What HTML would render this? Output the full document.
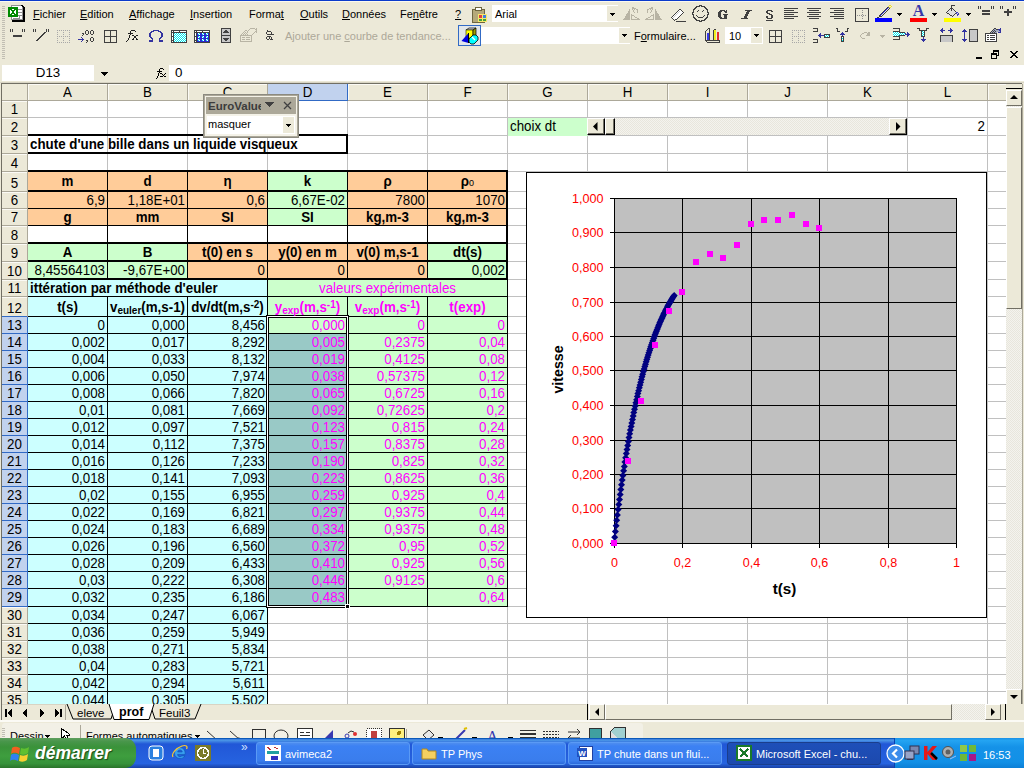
<!DOCTYPE html>
<html><head><meta charset="utf-8"><style>
html,body{margin:0;padding:0;}
body{width:1024px;height:768px;overflow:hidden;position:relative;background:#ECE9D8;font-family:"Liberation Sans",sans-serif;font-size:13.33px;color:#000;}
div{box-sizing:content-box;}
</style></head><body>
<div style="position:absolute;left:0px;top:0px;width:1024px;height:1px;background:#0A3ACB;"></div>
<div style="position:absolute;left:0px;top:1px;width:1024px;height:1px;background:#FBF9EF;"></div>
<div style="position:absolute;left:2px;top:6px;width:3px;height:1px;background:#C1BEB3;"></div><div style="position:absolute;left:2px;top:8px;width:3px;height:1px;background:#C1BEB3;"></div><div style="position:absolute;left:2px;top:10px;width:3px;height:1px;background:#C1BEB3;"></div><div style="position:absolute;left:2px;top:12px;width:3px;height:1px;background:#C1BEB3;"></div><div style="position:absolute;left:2px;top:14px;width:3px;height:1px;background:#C1BEB3;"></div><div style="position:absolute;left:2px;top:16px;width:3px;height:1px;background:#C1BEB3;"></div><div style="position:absolute;left:2px;top:18px;width:3px;height:1px;background:#C1BEB3;"></div><div style="position:absolute;left:2px;top:20px;width:3px;height:1px;background:#C1BEB3;"></div><div style="position:absolute;left:2px;top:22px;width:3px;height:1px;background:#C1BEB3;"></div><div style="position:absolute;left:2px;top:24px;width:3px;height:1px;background:#C1BEB3;"></div><div style="position:absolute;left:2px;top:26px;width:3px;height:1px;background:#C1BEB3;"></div><div style="position:absolute;left:2px;top:28px;width:3px;height:1px;background:#C1BEB3;"></div><div style="position:absolute;left:2px;top:30px;width:3px;height:1px;background:#C1BEB3;"></div><div style="position:absolute;left:2px;top:32px;width:3px;height:1px;background:#C1BEB3;"></div><div style="position:absolute;left:2px;top:34px;width:3px;height:1px;background:#C1BEB3;"></div><div style="position:absolute;left:2px;top:36px;width:3px;height:1px;background:#C1BEB3;"></div><div style="position:absolute;left:2px;top:38px;width:3px;height:1px;background:#C1BEB3;"></div><div style="position:absolute;left:2px;top:40px;width:3px;height:1px;background:#C1BEB3;"></div><div style="position:absolute;left:2px;top:42px;width:3px;height:1px;background:#C1BEB3;"></div><div style="position:absolute;left:2px;top:44px;width:3px;height:1px;background:#C1BEB3;"></div><div style="position:absolute;left:2px;top:46px;width:3px;height:1px;background:#C1BEB3;"></div><div style="position:absolute;left:2px;top:48px;width:3px;height:1px;background:#C1BEB3;"></div><div style="position:absolute;left:2px;top:50px;width:3px;height:1px;background:#C1BEB3;"></div><div style="position:absolute;left:2px;top:52px;width:3px;height:1px;background:#C1BEB3;"></div><div style="position:absolute;left:2px;top:54px;width:3px;height:1px;background:#C1BEB3;"></div><div style="position:absolute;left:2px;top:56px;width:3px;height:1px;background:#C1BEB3;"></div><div style="position:absolute;left:2px;top:58px;width:3px;height:1px;background:#C1BEB3;"></div>
<svg style="position:absolute;left:8px;top:5px" width="18" height="17" viewBox="0 0 18 17" shape-rendering="crispEdges"><rect x="3" y="0" width="10" height="1" fill="#909090"/><rect x="13" y="0" width="2" height="1" fill="#000"/><rect x="3" y="1" width="1" height="1" fill="#909090"/><rect x="4" y="1" width="10" height="1" fill="#fff"/><rect x="14" y="1" width="2" height="1" fill="#000"/><rect x="0" y="2" width="10" height="1" fill="#008A00"/><rect x="10" y="2" width="4" height="1" fill="#fff"/><rect x="14" y="2" width="1" height="1" fill="#909090"/><rect x="15" y="2" width="2" height="1" fill="#000"/><rect x="0" y="3" width="10" height="1" fill="#008A00"/><rect x="10" y="3" width="4" height="1" fill="#fff"/><rect x="14" y="3" width="1" height="1" fill="#909090"/><rect x="15" y="3" width="2" height="1" fill="#000"/><rect x="0" y="4" width="4" height="1" fill="#008A00"/><rect x="4" y="4" width="2" height="1" fill="#fff"/><rect x="6" y="4" width="4" height="1" fill="#008A00"/><rect x="10" y="4" width="5" height="1" fill="#909090"/><rect x="15" y="4" width="2" height="1" fill="#000"/><rect x="0" y="5" width="2" height="1" fill="#008A00"/><rect x="2" y="5" width="1" height="1" fill="#fff"/><rect x="3" y="5" width="4" height="1" fill="#008A00"/><rect x="7" y="5" width="1" height="1" fill="#fff"/><rect x="8" y="5" width="2" height="1" fill="#008A00"/><rect x="10" y="5" width="4" height="1" fill="#fff"/><rect x="14" y="5" width="1" height="1" fill="#909090"/><rect x="15" y="5" width="2" height="1" fill="#000"/><rect x="0" y="6" width="2" height="1" fill="#008A00"/><rect x="2" y="6" width="2" height="1" fill="#fff"/><rect x="4" y="6" width="2" height="1" fill="#008A00"/><rect x="6" y="6" width="2" height="1" fill="#fff"/><rect x="8" y="6" width="2" height="1" fill="#008A00"/><rect x="10" y="6" width="4" height="1" fill="#fff"/><rect x="14" y="6" width="1" height="1" fill="#909090"/><rect x="15" y="6" width="2" height="1" fill="#000"/><rect x="0" y="7" width="2" height="1" fill="#008A00"/><rect x="2" y="7" width="2" height="1" fill="#fff"/><rect x="4" y="7" width="2" height="1" fill="#008A00"/><rect x="6" y="7" width="2" height="1" fill="#fff"/><rect x="8" y="7" width="2" height="1" fill="#008A00"/><rect x="10" y="7" width="5" height="1" fill="#909090"/><rect x="15" y="7" width="2" height="1" fill="#000"/><rect x="0" y="8" width="2" height="1" fill="#008A00"/><rect x="2" y="8" width="1" height="1" fill="#fff"/><rect x="3" y="8" width="4" height="1" fill="#008A00"/><rect x="7" y="8" width="1" height="1" fill="#fff"/><rect x="8" y="8" width="2" height="1" fill="#008A00"/><rect x="10" y="8" width="4" height="1" fill="#fff"/><rect x="14" y="8" width="1" height="1" fill="#909090"/><rect x="15" y="8" width="2" height="1" fill="#000"/><rect x="0" y="9" width="4" height="1" fill="#008A00"/><rect x="4" y="9" width="2" height="1" fill="#fff"/><rect x="6" y="9" width="4" height="1" fill="#008A00"/><rect x="10" y="9" width="4" height="1" fill="#fff"/><rect x="14" y="9" width="1" height="1" fill="#909090"/><rect x="15" y="9" width="2" height="1" fill="#000"/><rect x="0" y="10" width="10" height="1" fill="#008A00"/><rect x="10" y="10" width="5" height="1" fill="#909090"/><rect x="15" y="10" width="2" height="1" fill="#000"/><rect x="0" y="11" width="10" height="1" fill="#008A00"/><rect x="10" y="11" width="1" height="1" fill="#fff"/><rect x="11" y="11" width="1" height="1" fill="#909090"/><rect x="12" y="11" width="2" height="1" fill="#fff"/><rect x="14" y="11" width="1" height="1" fill="#909090"/><rect x="15" y="11" width="2" height="1" fill="#000"/><rect x="3" y="12" width="1" height="1" fill="#909090"/><rect x="4" y="12" width="7" height="1" fill="#fff"/><rect x="11" y="12" width="1" height="1" fill="#909090"/><rect x="12" y="12" width="2" height="1" fill="#fff"/><rect x="14" y="12" width="1" height="1" fill="#909090"/><rect x="15" y="12" width="2" height="1" fill="#000"/><rect x="3" y="13" width="1" height="1" fill="#909090"/><rect x="4" y="13" width="1" height="1" fill="#fff"/><rect x="5" y="13" width="7" height="1" fill="#909090"/><rect x="12" y="13" width="2" height="1" fill="#fff"/><rect x="14" y="13" width="1" height="1" fill="#909090"/><rect x="15" y="13" width="2" height="1" fill="#000"/><rect x="3" y="14" width="12" height="1" fill="#909090"/><rect x="15" y="14" width="2" height="1" fill="#000"/><rect x="4" y="15" width="13" height="1" fill="#000"/><rect x="4" y="16" width="13" height="1" fill="#000"/></svg>
<svg style="position:absolute;left:156px;top:68px" width="10" height="11" viewBox="0 0 10 11" shape-rendering="crispEdges"><rect x="4" y="0" width="3" height="1" fill="#000"/><rect x="3" y="1" width="1" height="1" fill="#000"/><rect x="7" y="1" width="1" height="1" fill="#000"/><rect x="3" y="2" width="1" height="1" fill="#000"/><rect x="1" y="3" width="5" height="1" fill="#000"/><rect x="3" y="4" width="1" height="1" fill="#000"/><rect x="2" y="5" width="1" height="1" fill="#000"/><rect x="4" y="5" width="2" height="1" fill="#000"/><rect x="9" y="5" width="1" height="1" fill="#000"/><rect x="2" y="6" width="1" height="1" fill="#000"/><rect x="6" y="6" width="1" height="1" fill="#000"/><rect x="8" y="6" width="1" height="1" fill="#000"/><rect x="2" y="7" width="1" height="1" fill="#000"/><rect x="7" y="7" width="1" height="1" fill="#000"/><rect x="1" y="8" width="1" height="1" fill="#000"/><rect x="4" y="8" width="3" height="1" fill="#000"/><rect x="8" y="8" width="2" height="1" fill="#000"/><rect x="1" y="9" width="1" height="1" fill="#000"/><rect x="0" y="10" width="1" height="1" fill="#000"/></svg>
<div style="position:absolute;left:33px;top:7px;font-size:11px;line-height:14px;white-space:nowrap;color:#000;"><u>F</u>ichier</div>
<div style="position:absolute;left:80px;top:7px;font-size:11px;line-height:14px;white-space:nowrap;color:#000;"><u>E</u>dition</div>
<div style="position:absolute;left:129px;top:7px;font-size:11px;line-height:14px;white-space:nowrap;color:#000;"><u>A</u>ffichage</div>
<div style="position:absolute;left:190px;top:7px;font-size:11px;line-height:14px;white-space:nowrap;color:#000;"><u>I</u>nsertion</div>
<div style="position:absolute;left:249px;top:7px;font-size:11px;line-height:14px;white-space:nowrap;color:#000;">Forma<u>t</u></div>
<div style="position:absolute;left:300px;top:7px;font-size:11px;line-height:14px;white-space:nowrap;color:#000;"><u>O</u>utils</div>
<div style="position:absolute;left:342px;top:7px;font-size:11px;line-height:14px;white-space:nowrap;color:#000;"><u>D</u>onn&eacute;es</div>
<div style="position:absolute;left:400px;top:7px;font-size:11px;line-height:14px;white-space:nowrap;color:#000;">Fe<u>n</u>&ecirc;tre</div>
<div style="position:absolute;left:455px;top:7px;font-size:11px;line-height:14px;white-space:nowrap;color:#000;"><u>?</u></div>
<svg style="position:absolute;left:471px;top:6px" width="17" height="17" viewBox="0 0 17 17" shape-rendering="crispEdges"><rect x="1" y="3" width="12" height="13" fill="#B5A97A" stroke="#6E6640"/><rect x="4" y="1" width="6" height="3" fill="#fff" stroke="#6E6640"/><rect x="7" y="8" width="9" height="8" fill="#F8E86C"/><rect x="8" y="9" width="3" height="3" fill="#E04040"/><rect x="12" y="9" width="3" height="3" fill="#4080E0"/><rect x="8" y="13" width="3" height="2" fill="#40A040"/><rect x="12" y="13" width="3" height="2" fill="#40A040"/></svg>
<div style="position:absolute;left:492px;top:5px;width:126px;height:17px;background:#fff;"></div>
<div style="position:absolute;left:607px;top:6px;width:11px;height:15px;background:#ECE9D8;"></div>
<svg style="position:absolute;left:610px;top:13px" width="5" height="3" viewBox="0 0 5 3" shape-rendering="crispEdges"><path d="M0 0h5v1h-1v1h-1v1h-1v-1h-1v-1h-1z" fill="#000"/></svg>
<div style="position:absolute;left:495px;top:7px;font-size:11px;line-height:14px;white-space:nowrap;color:#000;">Arial</div>
<svg style="position:absolute;left:623px;top:7px" width="17" height="13" viewBox="0 0 17 13" shape-rendering="crispEdges"><rect x="9" y="0" width="2" height="1" fill="#B8B4A4"/><rect x="9" y="1" width="4" height="1" fill="#B8B4A4"/><rect x="6" y="2" width="1" height="1" fill="#B8B4A4"/><rect x="9" y="2" width="1" height="1" fill="#B8B4A4"/><rect x="11" y="2" width="1" height="1" fill="#B8B4A4"/><rect x="13" y="2" width="2" height="1" fill="#B8B4A4"/><rect x="6" y="3" width="1" height="1" fill="#B8B4A4"/><rect x="10" y="3" width="1" height="1" fill="#B8B4A4"/><rect x="14" y="3" width="1" height="1" fill="#B8B4A4"/><rect x="5" y="4" width="2" height="1" fill="#B8B4A4"/><rect x="10" y="4" width="1" height="1" fill="#B8B4A4"/><rect x="14" y="4" width="1" height="1" fill="#B8B4A4"/><rect x="5" y="5" width="2" height="1" fill="#B8B4A4"/><rect x="11" y="5" width="1" height="1" fill="#B8B4A4"/><rect x="14" y="5" width="1" height="1" fill="#B8B4A4"/><rect x="4" y="6" width="3" height="1" fill="#B8B4A4"/><rect x="3" y="7" width="4" height="1" fill="#B8B4A4"/><rect x="8" y="7" width="1" height="1" fill="#B8B4A4"/><rect x="3" y="8" width="4" height="1" fill="#B8B4A4"/><rect x="8" y="8" width="3" height="1" fill="#B8B4A4"/><rect x="2" y="9" width="5" height="1" fill="#B8B4A4"/><rect x="8" y="9" width="1" height="1" fill="#B8B4A4"/><rect x="11" y="9" width="1" height="1" fill="#B8B4A4"/><rect x="2" y="10" width="5" height="1" fill="#B8B4A4"/><rect x="8" y="10" width="1" height="1" fill="#B8B4A4"/><rect x="12" y="10" width="2" height="1" fill="#B8B4A4"/><rect x="1" y="11" width="6" height="1" fill="#B8B4A4"/><rect x="8" y="11" width="1" height="1" fill="#B8B4A4"/><rect x="14" y="11" width="2" height="1" fill="#B8B4A4"/><rect x="0" y="12" width="7" height="1" fill="#B8B4A4"/><rect x="8" y="12" width="9" height="1" fill="#B8B4A4"/></svg>
<svg style="position:absolute;left:645px;top:7px" width="17" height="13" viewBox="0 0 17 13" shape-rendering="crispEdges"><rect x="6" y="0" width="2" height="1" fill="#B8B4A4"/><rect x="4" y="1" width="4" height="1" fill="#B8B4A4"/><rect x="2" y="2" width="2" height="1" fill="#B8B4A4"/><rect x="5" y="2" width="1" height="1" fill="#B8B4A4"/><rect x="7" y="2" width="1" height="1" fill="#B8B4A4"/><rect x="10" y="2" width="1" height="1" fill="#B8B4A4"/><rect x="2" y="3" width="1" height="1" fill="#B8B4A4"/><rect x="6" y="3" width="1" height="1" fill="#B8B4A4"/><rect x="10" y="3" width="1" height="1" fill="#B8B4A4"/><rect x="2" y="4" width="1" height="1" fill="#B8B4A4"/><rect x="6" y="4" width="1" height="1" fill="#B8B4A4"/><rect x="10" y="4" width="2" height="1" fill="#B8B4A4"/><rect x="2" y="5" width="1" height="1" fill="#B8B4A4"/><rect x="5" y="5" width="1" height="1" fill="#B8B4A4"/><rect x="10" y="5" width="2" height="1" fill="#B8B4A4"/><rect x="10" y="6" width="3" height="1" fill="#B8B4A4"/><rect x="8" y="7" width="1" height="1" fill="#B8B4A4"/><rect x="10" y="7" width="4" height="1" fill="#B8B4A4"/><rect x="6" y="8" width="3" height="1" fill="#B8B4A4"/><rect x="10" y="8" width="4" height="1" fill="#B8B4A4"/><rect x="5" y="9" width="1" height="1" fill="#B8B4A4"/><rect x="8" y="9" width="1" height="1" fill="#B8B4A4"/><rect x="10" y="9" width="5" height="1" fill="#B8B4A4"/><rect x="3" y="10" width="2" height="1" fill="#B8B4A4"/><rect x="8" y="10" width="1" height="1" fill="#B8B4A4"/><rect x="10" y="10" width="5" height="1" fill="#B8B4A4"/><rect x="1" y="11" width="2" height="1" fill="#B8B4A4"/><rect x="8" y="11" width="1" height="1" fill="#B8B4A4"/><rect x="10" y="11" width="6" height="1" fill="#B8B4A4"/><rect x="0" y="12" width="9" height="1" fill="#B8B4A4"/><rect x="10" y="12" width="7" height="1" fill="#B8B4A4"/></svg>
<svg style="position:absolute;left:671px;top:9px" width="15" height="13" viewBox="0 0 15 13" shape-rendering="crispEdges"><rect x="8" y="0" width="2" height="1" fill="#404040"/><rect x="7" y="1" width="1" height="1" fill="#404040"/><rect x="8" y="1" width="2" height="1" fill="#FFFFFF"/><rect x="10" y="1" width="1" height="1" fill="#404040"/><rect x="6" y="2" width="1" height="1" fill="#404040"/><rect x="7" y="2" width="1" height="1" fill="#FFFFFF"/><rect x="8" y="2" width="1" height="1" fill="#C8C8C8"/><rect x="9" y="2" width="2" height="1" fill="#FFFFFF"/><rect x="11" y="2" width="1" height="1" fill="#404040"/><rect x="5" y="3" width="1" height="1" fill="#404040"/><rect x="6" y="3" width="1" height="1" fill="#FFFFFF"/><rect x="7" y="3" width="1" height="1" fill="#C8C8C8"/><rect x="8" y="3" width="4" height="1" fill="#FFFFFF"/><rect x="12" y="3" width="1" height="1" fill="#404040"/><rect x="4" y="4" width="1" height="1" fill="#404040"/><rect x="5" y="4" width="1" height="1" fill="#FFFFFF"/><rect x="6" y="4" width="1" height="1" fill="#C8C8C8"/><rect x="7" y="4" width="4" height="1" fill="#FFFFFF"/><rect x="11" y="4" width="1" height="1" fill="#404040"/><rect x="3" y="5" width="1" height="1" fill="#404040"/><rect x="4" y="5" width="1" height="1" fill="#FFFFFF"/><rect x="5" y="5" width="1" height="1" fill="#C8C8C8"/><rect x="6" y="5" width="4" height="1" fill="#FFFFFF"/><rect x="10" y="5" width="1" height="1" fill="#404040"/><rect x="2" y="6" width="1" height="1" fill="#404040"/><rect x="3" y="6" width="1" height="1" fill="#FFFFFF"/><rect x="4" y="6" width="1" height="1" fill="#C8C8C8"/><rect x="5" y="6" width="4" height="1" fill="#FFFFFF"/><rect x="9" y="6" width="1" height="1" fill="#404040"/><rect x="1" y="7" width="1" height="1" fill="#404040"/><rect x="2" y="7" width="1" height="1" fill="#FFFFFF"/><rect x="3" y="7" width="1" height="1" fill="#C8C8C8"/><rect x="4" y="7" width="4" height="1" fill="#FFFFFF"/><rect x="8" y="7" width="1" height="1" fill="#404040"/><rect x="0" y="8" width="1" height="1" fill="#404040"/><rect x="1" y="8" width="1" height="1" fill="#FFFFFF"/><rect x="2" y="8" width="1" height="1" fill="#C8C8C8"/><rect x="3" y="8" width="4" height="1" fill="#FFFFFF"/><rect x="7" y="8" width="1" height="1" fill="#404040"/><rect x="1" y="9" width="1" height="1" fill="#404040"/><rect x="2" y="9" width="4" height="1" fill="#FFFFFF"/><rect x="6" y="9" width="1" height="1" fill="#404040"/><rect x="2" y="10" width="1" height="1" fill="#404040"/><rect x="4" y="10" width="2" height="1" fill="#404040"/><rect x="3" y="11" width="1" height="1" fill="#404040"/><rect x="5" y="12" width="10" height="1" fill="#404040"/></svg>
<svg style="position:absolute;left:692px;top:5px" width="17" height="17" viewBox="0 0 17 17" shape-rendering="crispEdges"><rect x="7" y="0" width="3" height="1" fill="#404040"/><rect x="4" y="1" width="4" height="1" fill="#404040"/><rect x="9" y="1" width="4" height="1" fill="#404040"/><rect x="3" y="2" width="2" height="1" fill="#404040"/><rect x="12" y="2" width="2" height="1" fill="#404040"/><rect x="2" y="3" width="2" height="1" fill="#404040"/><rect x="13" y="3" width="2" height="1" fill="#404040"/><rect x="1" y="4" width="2" height="1" fill="#404040"/><rect x="14" y="4" width="2" height="1" fill="#404040"/><rect x="1" y="5" width="1" height="1" fill="#404040"/><rect x="6" y="5" width="1" height="1" fill="#404040"/><rect x="11" y="5" width="1" height="1" fill="#404040"/><rect x="15" y="5" width="1" height="1" fill="#404040"/><rect x="1" y="6" width="1" height="1" fill="#404040"/><rect x="5" y="6" width="1" height="1" fill="#404040"/><rect x="10" y="6" width="1" height="1" fill="#404040"/><rect x="15" y="6" width="1" height="1" fill="#404040"/><rect x="0" y="7" width="2" height="1" fill="#404040"/><rect x="15" y="7" width="2" height="1" fill="#404040"/><rect x="0" y="8" width="1" height="1" fill="#404040"/><rect x="16" y="8" width="1" height="1" fill="#404040"/><rect x="0" y="9" width="2" height="1" fill="#404040"/><rect x="15" y="9" width="2" height="1" fill="#404040"/><rect x="1" y="10" width="1" height="1" fill="#404040"/><rect x="4" y="10" width="1" height="1" fill="#404040"/><rect x="12" y="10" width="1" height="1" fill="#404040"/><rect x="15" y="10" width="1" height="1" fill="#404040"/><rect x="1" y="11" width="1" height="1" fill="#404040"/><rect x="5" y="11" width="1" height="1" fill="#404040"/><rect x="11" y="11" width="1" height="1" fill="#404040"/><rect x="15" y="11" width="1" height="1" fill="#404040"/><rect x="1" y="12" width="2" height="1" fill="#404040"/><rect x="6" y="12" width="5" height="1" fill="#404040"/><rect x="14" y="12" width="2" height="1" fill="#404040"/><rect x="2" y="13" width="2" height="1" fill="#404040"/><rect x="13" y="13" width="2" height="1" fill="#404040"/><rect x="3" y="14" width="2" height="1" fill="#404040"/><rect x="12" y="14" width="2" height="1" fill="#404040"/><rect x="4" y="15" width="4" height="1" fill="#404040"/><rect x="9" y="15" width="4" height="1" fill="#404040"/><rect x="7" y="16" width="3" height="1" fill="#404040"/></svg>
<svg style="position:absolute;left:718px;top:10px" width="10" height="9" viewBox="0 0 10 9" shape-rendering="crispEdges"><rect x="2" y="0" width="5" height="1" fill="#404040"/><rect x="8" y="0" width="1" height="1" fill="#404040"/><rect x="1" y="1" width="3" height="1" fill="#404040"/><rect x="6" y="1" width="3" height="1" fill="#404040"/><rect x="0" y="2" width="3" height="1" fill="#404040"/><rect x="7" y="2" width="2" height="1" fill="#404040"/><rect x="0" y="3" width="3" height="1" fill="#404040"/><rect x="0" y="4" width="3" height="1" fill="#404040"/><rect x="5" y="4" width="5" height="1" fill="#404040"/><rect x="0" y="5" width="3" height="1" fill="#404040"/><rect x="6" y="5" width="3" height="1" fill="#404040"/><rect x="0" y="6" width="3" height="1" fill="#404040"/><rect x="6" y="6" width="3" height="1" fill="#404040"/><rect x="1" y="7" width="3" height="1" fill="#404040"/><rect x="6" y="7" width="3" height="1" fill="#404040"/><rect x="2" y="8" width="7" height="1" fill="#404040"/></svg>
<svg style="position:absolute;left:741px;top:10px" width="11" height="9" viewBox="0 0 11 9" shape-rendering="crispEdges"><rect x="4" y="0" width="7" height="1" fill="#404040"/><rect x="6" y="1" width="3" height="1" fill="#404040"/><rect x="5" y="2" width="3" height="1" fill="#404040"/><rect x="5" y="3" width="3" height="1" fill="#404040"/><rect x="4" y="4" width="3" height="1" fill="#404040"/><rect x="4" y="5" width="3" height="1" fill="#404040"/><rect x="3" y="6" width="3" height="1" fill="#404040"/><rect x="3" y="7" width="3" height="1" fill="#404040"/><rect x="0" y="8" width="7" height="1" fill="#404040"/></svg>
<svg style="position:absolute;left:766px;top:10px" width="7" height="11" viewBox="0 0 7 11" shape-rendering="crispEdges"><rect x="1" y="0" width="5" height="1" fill="#404040"/><rect x="0" y="1" width="2" height="1" fill="#404040"/><rect x="5" y="1" width="2" height="1" fill="#404040"/><rect x="0" y="2" width="2" height="1" fill="#404040"/><rect x="1" y="3" width="3" height="1" fill="#404040"/><rect x="3" y="4" width="3" height="1" fill="#404040"/><rect x="5" y="5" width="2" height="1" fill="#404040"/><rect x="0" y="6" width="2" height="1" fill="#404040"/><rect x="5" y="6" width="2" height="1" fill="#404040"/><rect x="0" y="7" width="2" height="1" fill="#404040"/><rect x="5" y="7" width="2" height="1" fill="#404040"/><rect x="1" y="8" width="5" height="1" fill="#404040"/><rect x="0" y="10" width="7" height="1" fill="#404040"/></svg>
<svg style="position:absolute;left:784px;top:8px" width="14" height="11" viewBox="0 0 14 11" shape-rendering="crispEdges"><rect x="0" y="0" width="14" height="1" fill="#404040"/><rect x="0" y="2" width="10" height="1" fill="#404040"/><rect x="0" y="4" width="14" height="1" fill="#404040"/><rect x="0" y="6" width="10" height="1" fill="#404040"/><rect x="0" y="8" width="14" height="1" fill="#404040"/><rect x="0" y="10" width="10" height="1" fill="#404040"/></svg>
<svg style="position:absolute;left:807px;top:8px" width="14" height="11" viewBox="0 0 14 11" shape-rendering="crispEdges"><rect x="0" y="0" width="14" height="1" fill="#404040"/><rect x="2" y="2" width="10" height="1" fill="#404040"/><rect x="0" y="4" width="14" height="1" fill="#404040"/><rect x="2" y="6" width="10" height="1" fill="#404040"/><rect x="0" y="8" width="14" height="1" fill="#404040"/><rect x="2" y="10" width="10" height="1" fill="#404040"/></svg>
<svg style="position:absolute;left:830px;top:8px" width="14" height="11" viewBox="0 0 14 11" shape-rendering="crispEdges"><rect x="0" y="0" width="14" height="1" fill="#404040"/><rect x="4" y="2" width="10" height="1" fill="#404040"/><rect x="0" y="4" width="14" height="1" fill="#404040"/><rect x="4" y="6" width="10" height="1" fill="#404040"/><rect x="0" y="8" width="14" height="1" fill="#404040"/><rect x="4" y="10" width="10" height="1" fill="#404040"/></svg>
<svg style="position:absolute;left:855px;top:8px" width="14" height="14" viewBox="0 0 14 14" shape-rendering="crispEdges"><rect x="0" y="0" width="14" height="1" fill="#404040"/><rect x="0" y="1" width="1" height="1" fill="#404040"/><rect x="13" y="1" width="1" height="1" fill="#404040"/><rect x="0" y="2" width="1" height="1" fill="#404040"/><rect x="7" y="2" width="1" height="1" fill="#909090"/><rect x="13" y="2" width="1" height="1" fill="#404040"/><rect x="0" y="3" width="1" height="1" fill="#404040"/><rect x="13" y="3" width="1" height="1" fill="#404040"/><rect x="0" y="4" width="1" height="1" fill="#404040"/><rect x="7" y="4" width="1" height="1" fill="#909090"/><rect x="13" y="4" width="1" height="1" fill="#404040"/><rect x="0" y="5" width="1" height="1" fill="#404040"/><rect x="13" y="5" width="1" height="1" fill="#404040"/><rect x="0" y="6" width="1" height="1" fill="#404040"/><rect x="7" y="6" width="1" height="1" fill="#909090"/><rect x="13" y="6" width="1" height="1" fill="#404040"/><rect x="0" y="7" width="1" height="1" fill="#404040"/><rect x="2" y="7" width="1" height="1" fill="#909090"/><rect x="4" y="7" width="1" height="1" fill="#909090"/><rect x="6" y="7" width="1" height="1" fill="#909090"/><rect x="8" y="7" width="1" height="1" fill="#909090"/><rect x="10" y="7" width="1" height="1" fill="#909090"/><rect x="13" y="7" width="1" height="1" fill="#404040"/><rect x="0" y="8" width="1" height="1" fill="#404040"/><rect x="7" y="8" width="1" height="1" fill="#909090"/><rect x="13" y="8" width="1" height="1" fill="#404040"/><rect x="0" y="9" width="1" height="1" fill="#404040"/><rect x="13" y="9" width="1" height="1" fill="#404040"/><rect x="0" y="10" width="1" height="1" fill="#404040"/><rect x="7" y="10" width="1" height="1" fill="#909090"/><rect x="13" y="10" width="1" height="1" fill="#404040"/><rect x="0" y="11" width="1" height="1" fill="#404040"/><rect x="13" y="11" width="1" height="1" fill="#404040"/><rect x="0" y="12" width="1" height="1" fill="#404040"/><rect x="13" y="12" width="1" height="1" fill="#404040"/><rect x="0" y="13" width="14" height="1" fill="#404040"/></svg>
<svg style="position:absolute;left:875px;top:5px" width="18" height="14" viewBox="0 0 18 14" shape-rendering="crispEdges"><rect x="14" y="0" width="2" height="1" fill="#F0E020"/><rect x="13" y="1" width="1" height="1" fill="#F0E020"/><rect x="16" y="1" width="1" height="1" fill="#F0E020"/><rect x="12" y="2" width="1" height="1" fill="#404040"/><rect x="13" y="2" width="1" height="1" fill="#2828D0"/><rect x="14" y="2" width="2" height="1" fill="#F0E020"/><rect x="11" y="3" width="1" height="1" fill="#404040"/><rect x="12" y="3" width="1" height="1" fill="#2828D0"/><rect x="14" y="3" width="1" height="1" fill="#404040"/><rect x="10" y="4" width="1" height="1" fill="#404040"/><rect x="11" y="4" width="1" height="1" fill="#2828D0"/><rect x="13" y="4" width="1" height="1" fill="#404040"/><rect x="9" y="5" width="1" height="1" fill="#404040"/><rect x="10" y="5" width="1" height="1" fill="#2828D0"/><rect x="12" y="5" width="1" height="1" fill="#404040"/><rect x="8" y="6" width="1" height="1" fill="#404040"/><rect x="9" y="6" width="1" height="1" fill="#2828D0"/><rect x="11" y="6" width="1" height="1" fill="#404040"/><rect x="7" y="7" width="1" height="1" fill="#404040"/><rect x="8" y="7" width="1" height="1" fill="#2828D0"/><rect x="10" y="7" width="1" height="1" fill="#404040"/><rect x="6" y="8" width="1" height="1" fill="#404040"/><rect x="7" y="8" width="1" height="1" fill="#2828D0"/><rect x="9" y="8" width="1" height="1" fill="#404040"/><rect x="5" y="9" width="1" height="1" fill="#404040"/><rect x="6" y="9" width="1" height="1" fill="#2828D0"/><rect x="8" y="9" width="1" height="1" fill="#404040"/><rect x="4" y="10" width="1" height="1" fill="#404040"/><rect x="5" y="10" width="1" height="1" fill="#2828D0"/><rect x="7" y="10" width="1" height="1" fill="#404040"/><rect x="4" y="11" width="3" height="1" fill="#404040"/><rect x="2" y="12" width="2" height="1" fill="#404040"/><rect x="0" y="13" width="4" height="1" fill="#3333A0"/></svg>
<svg style="position:absolute;left:875px;top:18px" width="17" height="4" viewBox="0 0 17 4" shape-rendering="crispEdges"><rect x="0" y="0" width="17" height="1" fill="#0000FF"/><rect x="0" y="1" width="17" height="1" fill="#0000FF"/><rect x="0" y="2" width="17" height="1" fill="#0000FF"/><rect x="0" y="3" width="17" height="1" fill="#0000FF"/></svg>
<svg style="position:absolute;left:897px;top:13px" width="5" height="3" viewBox="0 0 5 3" shape-rendering="crispEdges"><rect x="0" y="0" width="5" height="1" fill="#000"/><rect x="1" y="1" width="3" height="1" fill="#000"/><rect x="2" y="2" width="1" height="1" fill="#000"/></svg>
<div style="position:absolute;left:910px;top:3px;width:17px;text-align:center;font-family:&quot;Liberation Serif&quot;,serif;font-weight:bold;font-size:16px;line-height:16px;color:#3838A8">A</div>
<svg style="position:absolute;left:910px;top:18px" width="17" height="4" viewBox="0 0 17 4" shape-rendering="crispEdges"><rect x="0" y="0" width="17" height="1" fill="#FF0000"/><rect x="0" y="1" width="17" height="1" fill="#FF0000"/><rect x="0" y="2" width="17" height="1" fill="#FF0000"/><rect x="0" y="3" width="17" height="1" fill="#FF0000"/></svg>
<svg style="position:absolute;left:932px;top:13px" width="5" height="3" viewBox="0 0 5 3" shape-rendering="crispEdges"><rect x="0" y="0" width="5" height="1" fill="#000"/><rect x="1" y="1" width="3" height="1" fill="#000"/><rect x="2" y="2" width="1" height="1" fill="#000"/></svg>
<svg style="position:absolute;left:944px;top:5px" width="17" height="13" viewBox="0 0 17 13" shape-rendering="crispEdges"><rect x="7" y="0" width="4" height="1" fill="#404040"/><rect x="7" y="1" width="1" height="1" fill="#404040"/><rect x="7" y="2" width="1" height="1" fill="#404040"/><rect x="6" y="3" width="3" height="1" fill="#404040"/><rect x="5" y="4" width="1" height="1" fill="#404040"/><rect x="6" y="4" width="1" height="1" fill="#E0E0E0"/><rect x="7" y="4" width="1" height="1" fill="#404040"/><rect x="8" y="4" width="1" height="1" fill="#E0E0E0"/><rect x="9" y="4" width="1" height="1" fill="#404040"/><rect x="4" y="5" width="1" height="1" fill="#404040"/><rect x="5" y="5" width="2" height="1" fill="#E0E0E0"/><rect x="7" y="5" width="1" height="1" fill="#404040"/><rect x="8" y="5" width="2" height="1" fill="#E0E0E0"/><rect x="10" y="5" width="1" height="1" fill="#404040"/><rect x="3" y="6" width="1" height="1" fill="#404040"/><rect x="4" y="6" width="7" height="1" fill="#E0E0E0"/><rect x="11" y="6" width="1" height="1" fill="#404040"/><rect x="2" y="7" width="1" height="1" fill="#404040"/><rect x="3" y="7" width="9" height="1" fill="#E0E0E0"/><rect x="12" y="7" width="2" height="1" fill="#4040C0"/><rect x="3" y="8" width="2" height="1" fill="#404040"/><rect x="5" y="8" width="6" height="1" fill="#E0E0E0"/><rect x="11" y="8" width="1" height="1" fill="#404040"/><rect x="12" y="8" width="1" height="1" fill="#4040C0"/><rect x="14" y="8" width="1" height="1" fill="#4040C0"/><rect x="5" y="9" width="1" height="1" fill="#404040"/><rect x="6" y="9" width="4" height="1" fill="#E0E0E0"/><rect x="10" y="9" width="1" height="1" fill="#404040"/><rect x="13" y="9" width="2" height="1" fill="#4040C0"/><rect x="6" y="10" width="2" height="1" fill="#404040"/><rect x="8" y="10" width="1" height="1" fill="#E0E0E0"/><rect x="9" y="10" width="1" height="1" fill="#404040"/><rect x="13" y="10" width="1" height="1" fill="#4040C0"/><rect x="8" y="11" width="1" height="1" fill="#404040"/></svg>
<svg style="position:absolute;left:944px;top:18px" width="17" height="4" viewBox="0 0 17 4" shape-rendering="crispEdges"><rect x="0" y="0" width="17" height="1" fill="#FFFF00"/><rect x="0" y="1" width="17" height="1" fill="#FFFF00"/><rect x="0" y="2" width="17" height="1" fill="#FFFF00"/><rect x="0" y="3" width="17" height="1" fill="#FFFF00"/></svg>
<svg style="position:absolute;left:966px;top:13px" width="5" height="3" viewBox="0 0 5 3" shape-rendering="crispEdges"><rect x="0" y="0" width="5" height="1" fill="#000"/><rect x="1" y="1" width="3" height="1" fill="#000"/><rect x="2" y="2" width="1" height="1" fill="#000"/></svg>
<svg style="position:absolute;left:978px;top:6px" width="16" height="9" viewBox="0 0 16 9" shape-rendering="crispEdges"><rect x="0" y="0" width="1" height="1" fill="#404040"/><rect x="2" y="0" width="1" height="1" fill="#404040"/><rect x="13" y="0" width="1" height="1" fill="#404040"/><rect x="15" y="0" width="1" height="1" fill="#404040"/><rect x="0" y="1" width="1" height="1" fill="#404040"/><rect x="2" y="1" width="1" height="1" fill="#404040"/><rect x="13" y="1" width="1" height="1" fill="#404040"/><rect x="15" y="1" width="1" height="1" fill="#404040"/><rect x="0" y="2" width="1" height="1" fill="#404040"/><rect x="2" y="2" width="1" height="1" fill="#404040"/><rect x="13" y="2" width="1" height="1" fill="#404040"/><rect x="15" y="2" width="1" height="1" fill="#404040"/><rect x="4" y="4" width="8" height="1" fill="#404040"/><rect x="4" y="5" width="8" height="1" fill="#404040"/><rect x="4" y="7" width="8" height="1" fill="#404040"/><rect x="4" y="8" width="8" height="1" fill="#404040"/></svg>
<svg style="position:absolute;left:1000px;top:6px" width="16" height="10" viewBox="0 0 16 10" shape-rendering="crispEdges"><rect x="0" y="0" width="1" height="1" fill="#404040"/><rect x="2" y="0" width="1" height="1" fill="#404040"/><rect x="13" y="0" width="1" height="1" fill="#404040"/><rect x="15" y="0" width="1" height="1" fill="#404040"/><rect x="0" y="1" width="1" height="1" fill="#404040"/><rect x="2" y="1" width="1" height="1" fill="#404040"/><rect x="13" y="1" width="1" height="1" fill="#404040"/><rect x="15" y="1" width="1" height="1" fill="#404040"/><rect x="0" y="2" width="1" height="1" fill="#404040"/><rect x="2" y="2" width="1" height="1" fill="#404040"/><rect x="13" y="2" width="1" height="1" fill="#404040"/><rect x="15" y="2" width="1" height="1" fill="#404040"/><rect x="7" y="3" width="2" height="1" fill="#404040"/><rect x="7" y="4" width="2" height="1" fill="#404040"/><rect x="4" y="5" width="8" height="1" fill="#404040"/><rect x="4" y="6" width="8" height="1" fill="#404040"/><rect x="7" y="7" width="2" height="1" fill="#404040"/><rect x="7" y="8" width="2" height="1" fill="#404040"/><rect x="7" y="9" width="2" height="1" fill="#404040"/></svg>
<div style="position:absolute;left:285px;top:29px;font-size:11px;line-height:14px;white-space:nowrap;color:#ACA899;">Ajouter une <u>c</u>ourbe de tendance...</div>
<div style="position:absolute;left:458px;top:25px;width:23px;height:21px;background:#C1D2EE;box-sizing:border-box;border:1px solid #316AC5;"></div>
<div style="position:absolute;left:459px;top:26px;width:21px;height:19px;background:#E1E6EA;"></div>
<svg style="position:absolute;left:461px;top:27px" width="18" height="18" viewBox="0 0 18 18"><path d="M5 3l3-2h7l-3 2z" fill="#D8D8E0" stroke="#000" stroke-width="0.7"/><rect x="5" y="3" width="7" height="8" fill="#FFFF00" stroke="#404000" stroke-width="0.7"/><path d="M12 3l3-2v7l-3 3z" fill="#A0A000" stroke="#000" stroke-width="0.7"/><path d="M0.5 14L7.5 6V16z" fill="#0000E0"/><path d="M7.5 6V16" stroke="#000" stroke-width="1"/><path d="M8 12l4-4h3l2 2v3l-4 4h-3l-2-2z" fill="#00FFFF" stroke="#000" stroke-width="0.8"/><path d="M11 10l3 3" stroke="#fff" stroke-width="1.2"/></svg>
<div style="position:absolute;left:481px;top:27px;width:149px;height:17px;background:#fff;"></div>
<div style="position:absolute;left:619px;top:28px;width:11px;height:15px;background:#ECE9D8;"></div>
<svg style="position:absolute;left:622px;top:34px" width="5" height="3" viewBox="0 0 5 3" shape-rendering="crispEdges"><path d="M0 0h5v1h-1v1h-1v1h-1v-1h-1v-1h-1z" fill="#000"/></svg>
<div style="position:absolute;left:725px;top:27px;width:38px;height:17px;background:#fff;"></div>
<div style="position:absolute;left:751px;top:28px;width:11px;height:15px;background:#ECE9D8;"></div>
<svg style="position:absolute;left:754px;top:34px" width="5" height="3" viewBox="0 0 5 3" shape-rendering="crispEdges"><path d="M0 0h5v1h-1v1h-1v1h-1v-1h-1v-1h-1z" fill="#000"/></svg>
<div style="position:absolute;left:729px;top:29px;font-size:11px;line-height:14px;white-space:nowrap;color:#000;">10</div>
<div style="position:absolute;left:634px;top:29px;font-size:11px;line-height:14px;white-space:nowrap;color:#000;">F<u>o</u>rmulaire...</div>
<svg style="position:absolute;left:10px;top:29px" width="15" height="8" viewBox="0 0 15 8" shape-rendering="crispEdges"><rect x="0" y="0" width="1" height="1" fill="#404040"/><rect x="2" y="0" width="1" height="1" fill="#404040"/><rect x="12" y="0" width="1" height="1" fill="#404040"/><rect x="14" y="0" width="1" height="1" fill="#404040"/><rect x="0" y="1" width="1" height="1" fill="#404040"/><rect x="2" y="1" width="1" height="1" fill="#404040"/><rect x="12" y="1" width="1" height="1" fill="#404040"/><rect x="14" y="1" width="1" height="1" fill="#404040"/><rect x="0" y="2" width="1" height="1" fill="#404040"/><rect x="2" y="2" width="1" height="1" fill="#404040"/><rect x="12" y="2" width="1" height="1" fill="#404040"/><rect x="14" y="2" width="1" height="1" fill="#404040"/><rect x="3" y="6" width="9" height="1" fill="#404040"/><rect x="3" y="7" width="9" height="1" fill="#404040"/></svg>
<svg style="position:absolute;left:33px;top:29px" width="16" height="12" viewBox="0 0 16 12" shape-rendering="crispEdges"><rect x="0" y="0" width="1" height="1" fill="#404040"/><rect x="2" y="0" width="1" height="1" fill="#404040"/><rect x="13" y="0" width="1" height="1" fill="#404040"/><rect x="15" y="0" width="1" height="1" fill="#404040"/><rect x="0" y="1" width="1" height="1" fill="#404040"/><rect x="2" y="1" width="1" height="1" fill="#404040"/><rect x="13" y="1" width="1" height="1" fill="#404040"/><rect x="15" y="1" width="1" height="1" fill="#404040"/><rect x="0" y="2" width="1" height="1" fill="#404040"/><rect x="2" y="2" width="1" height="1" fill="#404040"/><rect x="13" y="2" width="1" height="1" fill="#404040"/><rect x="15" y="2" width="1" height="1" fill="#404040"/><rect x="11" y="3" width="2" height="1" fill="#404040"/><rect x="10" y="4" width="2" height="1" fill="#404040"/><rect x="9" y="5" width="2" height="1" fill="#404040"/><rect x="8" y="6" width="2" height="1" fill="#404040"/><rect x="7" y="7" width="2" height="1" fill="#404040"/><rect x="6" y="8" width="2" height="1" fill="#404040"/><rect x="5" y="9" width="2" height="1" fill="#404040"/><rect x="4" y="10" width="2" height="1" fill="#404040"/><rect x="3" y="11" width="2" height="1" fill="#404040"/></svg>
<svg style="position:absolute;left:57px;top:30px" width="13" height="13" viewBox="0 0 13 13" shape-rendering="crispEdges"><rect x="0" y="0" width="1" height="1" fill="#A8A8A8"/><rect x="2" y="0" width="1" height="1" fill="#A8A8A8"/><rect x="4" y="0" width="1" height="1" fill="#A8A8A8"/><rect x="6" y="0" width="1" height="1" fill="#A8A8A8"/><rect x="8" y="0" width="1" height="1" fill="#A8A8A8"/><rect x="10" y="0" width="1" height="1" fill="#A8A8A8"/><rect x="12" y="0" width="1" height="1" fill="#A8A8A8"/><rect x="0" y="2" width="1" height="1" fill="#A8A8A8"/><rect x="6" y="2" width="1" height="1" fill="#A8A8A8"/><rect x="12" y="2" width="1" height="1" fill="#A8A8A8"/><rect x="0" y="4" width="1" height="1" fill="#A8A8A8"/><rect x="6" y="4" width="1" height="1" fill="#A8A8A8"/><rect x="12" y="4" width="1" height="1" fill="#A8A8A8"/><rect x="0" y="6" width="1" height="1" fill="#A8A8A8"/><rect x="2" y="6" width="1" height="1" fill="#A8A8A8"/><rect x="4" y="6" width="1" height="1" fill="#A8A8A8"/><rect x="6" y="6" width="1" height="1" fill="#A8A8A8"/><rect x="8" y="6" width="1" height="1" fill="#A8A8A8"/><rect x="10" y="6" width="1" height="1" fill="#A8A8A8"/><rect x="12" y="6" width="1" height="1" fill="#A8A8A8"/><rect x="0" y="8" width="1" height="1" fill="#A8A8A8"/><rect x="6" y="8" width="1" height="1" fill="#A8A8A8"/><rect x="12" y="8" width="1" height="1" fill="#A8A8A8"/><rect x="0" y="10" width="1" height="1" fill="#A8A8A8"/><rect x="6" y="10" width="1" height="1" fill="#A8A8A8"/><rect x="12" y="10" width="1" height="1" fill="#A8A8A8"/><rect x="0" y="12" width="1" height="1" fill="#A8A8A8"/><rect x="2" y="12" width="1" height="1" fill="#A8A8A8"/><rect x="4" y="12" width="1" height="1" fill="#A8A8A8"/><rect x="6" y="12" width="1" height="1" fill="#A8A8A8"/><rect x="8" y="12" width="1" height="1" fill="#A8A8A8"/><rect x="10" y="12" width="1" height="1" fill="#A8A8A8"/><rect x="12" y="12" width="1" height="1" fill="#A8A8A8"/></svg>
<svg style="position:absolute;left:78px;top:29px" width="17" height="14" viewBox="0 0 17 14" shape-rendering="crispEdges"><rect x="8" y="1" width="2" height="1" fill="#404040"/><rect x="13" y="1" width="2" height="1" fill="#404040"/><rect x="7" y="2" width="1" height="1" fill="#404040"/><rect x="10" y="2" width="1" height="1" fill="#404040"/><rect x="12" y="2" width="1" height="1" fill="#404040"/><rect x="15" y="2" width="1" height="1" fill="#404040"/><rect x="7" y="3" width="1" height="1" fill="#404040"/><rect x="10" y="3" width="1" height="1" fill="#404040"/><rect x="12" y="3" width="1" height="1" fill="#404040"/><rect x="15" y="3" width="1" height="1" fill="#404040"/><rect x="4" y="4" width="2" height="1" fill="#404040"/><rect x="7" y="4" width="1" height="1" fill="#404040"/><rect x="10" y="4" width="1" height="1" fill="#404040"/><rect x="12" y="4" width="1" height="1" fill="#404040"/><rect x="15" y="4" width="1" height="1" fill="#404040"/><rect x="5" y="5" width="1" height="1" fill="#404040"/><rect x="8" y="5" width="2" height="1" fill="#404040"/><rect x="13" y="5" width="2" height="1" fill="#404040"/><rect x="4" y="6" width="1" height="1" fill="#404040"/><rect x="3" y="8" width="1" height="1" fill="#3333A0"/><rect x="13" y="8" width="2" height="1" fill="#404040"/><rect x="4" y="9" width="1" height="1" fill="#3333A0"/><rect x="12" y="9" width="1" height="1" fill="#404040"/><rect x="15" y="9" width="1" height="1" fill="#404040"/><rect x="0" y="10" width="6" height="1" fill="#3333A0"/><rect x="12" y="10" width="1" height="1" fill="#404040"/><rect x="15" y="10" width="1" height="1" fill="#404040"/><rect x="4" y="11" width="1" height="1" fill="#3333A0"/><rect x="8" y="11" width="2" height="1" fill="#404040"/><rect x="12" y="11" width="1" height="1" fill="#404040"/><rect x="15" y="11" width="1" height="1" fill="#404040"/><rect x="3" y="12" width="1" height="1" fill="#3333A0"/><rect x="9" y="12" width="1" height="1" fill="#404040"/><rect x="13" y="12" width="2" height="1" fill="#404040"/><rect x="8" y="13" width="1" height="1" fill="#404040"/></svg>
<svg style="position:absolute;left:104px;top:30px" width="13" height="13" viewBox="0 0 13 13" shape-rendering="crispEdges"><rect x="0" y="0" width="13" height="1" fill="#404040"/><rect x="0" y="1" width="1" height="1" fill="#404040"/><rect x="6" y="1" width="1" height="1" fill="#404040"/><rect x="12" y="1" width="1" height="1" fill="#404040"/><rect x="0" y="2" width="1" height="1" fill="#404040"/><rect x="6" y="2" width="1" height="1" fill="#404040"/><rect x="12" y="2" width="1" height="1" fill="#404040"/><rect x="0" y="3" width="1" height="1" fill="#404040"/><rect x="6" y="3" width="1" height="1" fill="#404040"/><rect x="12" y="3" width="1" height="1" fill="#404040"/><rect x="0" y="4" width="1" height="1" fill="#404040"/><rect x="6" y="4" width="1" height="1" fill="#404040"/><rect x="12" y="4" width="1" height="1" fill="#404040"/><rect x="0" y="5" width="1" height="1" fill="#404040"/><rect x="6" y="5" width="1" height="1" fill="#404040"/><rect x="12" y="5" width="1" height="1" fill="#404040"/><rect x="0" y="6" width="13" height="1" fill="#404040"/><rect x="0" y="7" width="1" height="1" fill="#404040"/><rect x="6" y="7" width="1" height="1" fill="#404040"/><rect x="12" y="7" width="1" height="1" fill="#404040"/><rect x="0" y="8" width="1" height="1" fill="#404040"/><rect x="6" y="8" width="1" height="1" fill="#404040"/><rect x="12" y="8" width="1" height="1" fill="#404040"/><rect x="0" y="9" width="1" height="1" fill="#404040"/><rect x="6" y="9" width="1" height="1" fill="#404040"/><rect x="12" y="9" width="1" height="1" fill="#404040"/><rect x="0" y="10" width="1" height="1" fill="#404040"/><rect x="6" y="10" width="1" height="1" fill="#404040"/><rect x="12" y="10" width="1" height="1" fill="#404040"/><rect x="0" y="11" width="1" height="1" fill="#404040"/><rect x="6" y="11" width="1" height="1" fill="#404040"/><rect x="12" y="11" width="1" height="1" fill="#404040"/><rect x="0" y="12" width="13" height="1" fill="#404040"/></svg>
<svg style="position:absolute;left:126px;top:30px" width="12" height="12" viewBox="0 0 12 12" shape-rendering="crispEdges"><rect x="5" y="0" width="4" height="1" fill="#202020"/><rect x="4" y="1" width="1" height="1" fill="#202020"/><rect x="9" y="1" width="1" height="1" fill="#202020"/><rect x="4" y="2" width="1" height="1" fill="#202020"/><rect x="2" y="3" width="5" height="1" fill="#202020"/><rect x="4" y="4" width="1" height="1" fill="#202020"/><rect x="3" y="5" width="1" height="1" fill="#202020"/><rect x="6" y="5" width="2" height="1" fill="#202020"/><rect x="10" y="5" width="2" height="1" fill="#202020"/><rect x="3" y="6" width="1" height="1" fill="#202020"/><rect x="8" y="6" width="2" height="1" fill="#202020"/><rect x="3" y="7" width="1" height="1" fill="#202020"/><rect x="8" y="7" width="2" height="1" fill="#202020"/><rect x="2" y="8" width="1" height="1" fill="#202020"/><rect x="7" y="8" width="1" height="1" fill="#202020"/><rect x="10" y="8" width="1" height="1" fill="#202020"/><rect x="2" y="9" width="1" height="1" fill="#202020"/><rect x="6" y="9" width="2" height="1" fill="#202020"/><rect x="10" y="9" width="2" height="1" fill="#202020"/><rect x="1" y="10" width="1" height="1" fill="#202020"/><rect x="0" y="11" width="1" height="1" fill="#202020"/></svg>
<svg style="position:absolute;left:149px;top:30px" width="14" height="12" viewBox="0 0 14 12" shape-rendering="crispEdges"><rect x="4" y="0" width="6" height="1" fill="#3333A0"/><rect x="2" y="1" width="3" height="1" fill="#3333A0"/><rect x="9" y="1" width="3" height="1" fill="#3333A0"/><rect x="1" y="2" width="2" height="1" fill="#3333A0"/><rect x="11" y="2" width="2" height="1" fill="#3333A0"/><rect x="0" y="3" width="2" height="1" fill="#3333A0"/><rect x="12" y="3" width="2" height="1" fill="#3333A0"/><rect x="0" y="4" width="2" height="1" fill="#3333A0"/><rect x="12" y="4" width="2" height="1" fill="#3333A0"/><rect x="0" y="5" width="2" height="1" fill="#3333A0"/><rect x="12" y="5" width="2" height="1" fill="#3333A0"/><rect x="0" y="6" width="2" height="1" fill="#3333A0"/><rect x="12" y="6" width="2" height="1" fill="#3333A0"/><rect x="1" y="7" width="2" height="1" fill="#3333A0"/><rect x="11" y="7" width="2" height="1" fill="#3333A0"/><rect x="2" y="8" width="2" height="1" fill="#3333A0"/><rect x="10" y="8" width="2" height="1" fill="#3333A0"/><rect x="3" y="9" width="1" height="1" fill="#3333A0"/><rect x="10" y="9" width="1" height="1" fill="#3333A0"/><rect x="0" y="10" width="4" height="1" fill="#3333A0"/><rect x="10" y="10" width="4" height="1" fill="#3333A0"/><rect x="0" y="11" width="4" height="1" fill="#3333A0"/><rect x="10" y="11" width="4" height="1" fill="#3333A0"/></svg>
<svg style="position:absolute;left:171px;top:30px" width="16" height="13" viewBox="0 0 16 13" shape-rendering="crispEdges"><rect x="0" y="0" width="16" height="1" fill="#404040"/><rect x="0" y="1" width="1" height="1" fill="#404040"/><rect x="1" y="1" width="1" height="1" fill="#FFFFFF"/><rect x="2" y="1" width="1" height="1" fill="#404040"/><rect x="3" y="1" width="5" height="1" fill="#FFFFFF"/><rect x="8" y="1" width="1" height="1" fill="#404040"/><rect x="9" y="1" width="6" height="1" fill="#FFFFFF"/><rect x="15" y="1" width="1" height="1" fill="#404040"/><rect x="0" y="2" width="16" height="1" fill="#404040"/><rect x="0" y="3" width="1" height="1" fill="#404040"/><rect x="1" y="3" width="1" height="1" fill="#FFFFFF"/><rect x="2" y="3" width="1" height="1" fill="#404040"/><rect x="3" y="3" width="1" height="1" fill="#00E8F0"/><rect x="4" y="3" width="1" height="1" fill="#FFFFFF"/><rect x="5" y="3" width="1" height="1" fill="#00E8F0"/><rect x="6" y="3" width="1" height="1" fill="#FFFFFF"/><rect x="7" y="3" width="1" height="1" fill="#00E8F0"/><rect x="8" y="3" width="1" height="1" fill="#FFFFFF"/><rect x="9" y="3" width="1" height="1" fill="#00E8F0"/><rect x="10" y="3" width="1" height="1" fill="#FFFFFF"/><rect x="11" y="3" width="1" height="1" fill="#00E8F0"/><rect x="12" y="3" width="1" height="1" fill="#FFFFFF"/><rect x="13" y="3" width="1" height="1" fill="#00E8F0"/><rect x="14" y="3" width="1" height="1" fill="#FFFFFF"/><rect x="15" y="3" width="1" height="1" fill="#404040"/><rect x="0" y="4" width="1" height="1" fill="#404040"/><rect x="1" y="4" width="1" height="1" fill="#FFFFFF"/><rect x="2" y="4" width="1" height="1" fill="#404040"/><rect x="3" y="4" width="1" height="1" fill="#FFFFFF"/><rect x="4" y="4" width="1" height="1" fill="#00E8F0"/><rect x="5" y="4" width="1" height="1" fill="#FFFFFF"/><rect x="6" y="4" width="1" height="1" fill="#00E8F0"/><rect x="7" y="4" width="1" height="1" fill="#FFFFFF"/><rect x="8" y="4" width="1" height="1" fill="#00E8F0"/><rect x="9" y="4" width="1" height="1" fill="#FFFFFF"/><rect x="10" y="4" width="1" height="1" fill="#00E8F0"/><rect x="11" y="4" width="1" height="1" fill="#FFFFFF"/><rect x="12" y="4" width="1" height="1" fill="#00E8F0"/><rect x="13" y="4" width="1" height="1" fill="#FFFFFF"/><rect x="14" y="4" width="1" height="1" fill="#00E8F0"/><rect x="15" y="4" width="1" height="1" fill="#404040"/><rect x="0" y="5" width="1" height="1" fill="#404040"/><rect x="1" y="5" width="1" height="1" fill="#FFFFFF"/><rect x="2" y="5" width="1" height="1" fill="#404040"/><rect x="3" y="5" width="1" height="1" fill="#00E8F0"/><rect x="4" y="5" width="1" height="1" fill="#FFFFFF"/><rect x="5" y="5" width="1" height="1" fill="#00E8F0"/><rect x="6" y="5" width="1" height="1" fill="#FFFFFF"/><rect x="7" y="5" width="1" height="1" fill="#00E8F0"/><rect x="8" y="5" width="1" height="1" fill="#FFFFFF"/><rect x="9" y="5" width="1" height="1" fill="#00E8F0"/><rect x="10" y="5" width="1" height="1" fill="#FFFFFF"/><rect x="11" y="5" width="1" height="1" fill="#00E8F0"/><rect x="12" y="5" width="1" height="1" fill="#FFFFFF"/><rect x="13" y="5" width="1" height="1" fill="#00E8F0"/><rect x="14" y="5" width="1" height="1" fill="#FFFFFF"/><rect x="15" y="5" width="1" height="1" fill="#404040"/><rect x="0" y="6" width="3" height="1" fill="#404040"/><rect x="3" y="6" width="1" height="1" fill="#FFFFFF"/><rect x="4" y="6" width="1" height="1" fill="#00E8F0"/><rect x="5" y="6" width="1" height="1" fill="#FFFFFF"/><rect x="6" y="6" width="1" height="1" fill="#00E8F0"/><rect x="7" y="6" width="1" height="1" fill="#FFFFFF"/><rect x="8" y="6" width="1" height="1" fill="#00E8F0"/><rect x="9" y="6" width="1" height="1" fill="#FFFFFF"/><rect x="10" y="6" width="1" height="1" fill="#00E8F0"/><rect x="11" y="6" width="1" height="1" fill="#FFFFFF"/><rect x="12" y="6" width="1" height="1" fill="#00E8F0"/><rect x="13" y="6" width="1" height="1" fill="#FFFFFF"/><rect x="14" y="6" width="1" height="1" fill="#00E8F0"/><rect x="15" y="6" width="1" height="1" fill="#404040"/><rect x="0" y="7" width="1" height="1" fill="#404040"/><rect x="1" y="7" width="1" height="1" fill="#FFFFFF"/><rect x="2" y="7" width="1" height="1" fill="#404040"/><rect x="3" y="7" width="1" height="1" fill="#00E8F0"/><rect x="4" y="7" width="1" height="1" fill="#FFFFFF"/><rect x="5" y="7" width="1" height="1" fill="#00E8F0"/><rect x="6" y="7" width="1" height="1" fill="#FFFFFF"/><rect x="7" y="7" width="1" height="1" fill="#00E8F0"/><rect x="8" y="7" width="1" height="1" fill="#FFFFFF"/><rect x="9" y="7" width="1" height="1" fill="#00E8F0"/><rect x="10" y="7" width="1" height="1" fill="#FFFFFF"/><rect x="11" y="7" width="1" height="1" fill="#00E8F0"/><rect x="12" y="7" width="1" height="1" fill="#FFFFFF"/><rect x="13" y="7" width="1" height="1" fill="#00E8F0"/><rect x="14" y="7" width="1" height="1" fill="#FFFFFF"/><rect x="15" y="7" width="1" height="1" fill="#404040"/><rect x="0" y="8" width="1" height="1" fill="#404040"/><rect x="1" y="8" width="1" height="1" fill="#FFFFFF"/><rect x="2" y="8" width="1" height="1" fill="#404040"/><rect x="3" y="8" width="1" height="1" fill="#FFFFFF"/><rect x="4" y="8" width="1" height="1" fill="#00E8F0"/><rect x="5" y="8" width="1" height="1" fill="#FFFFFF"/><rect x="6" y="8" width="1" height="1" fill="#00E8F0"/><rect x="7" y="8" width="1" height="1" fill="#FFFFFF"/><rect x="8" y="8" width="1" height="1" fill="#00E8F0"/><rect x="9" y="8" width="1" height="1" fill="#FFFFFF"/><rect x="10" y="8" width="1" height="1" fill="#00E8F0"/><rect x="11" y="8" width="1" height="1" fill="#FFFFFF"/><rect x="12" y="8" width="1" height="1" fill="#00E8F0"/><rect x="13" y="8" width="1" height="1" fill="#FFFFFF"/><rect x="14" y="8" width="1" height="1" fill="#00E8F0"/><rect x="15" y="8" width="1" height="1" fill="#404040"/><rect x="0" y="9" width="1" height="1" fill="#404040"/><rect x="1" y="9" width="1" height="1" fill="#FFFFFF"/><rect x="2" y="9" width="1" height="1" fill="#404040"/><rect x="3" y="9" width="1" height="1" fill="#00E8F0"/><rect x="4" y="9" width="1" height="1" fill="#FFFFFF"/><rect x="5" y="9" width="1" height="1" fill="#00E8F0"/><rect x="6" y="9" width="1" height="1" fill="#FFFFFF"/><rect x="7" y="9" width="1" height="1" fill="#00E8F0"/><rect x="8" y="9" width="1" height="1" fill="#FFFFFF"/><rect x="9" y="9" width="1" height="1" fill="#00E8F0"/><rect x="10" y="9" width="1" height="1" fill="#FFFFFF"/><rect x="11" y="9" width="1" height="1" fill="#00E8F0"/><rect x="12" y="9" width="1" height="1" fill="#FFFFFF"/><rect x="13" y="9" width="1" height="1" fill="#00E8F0"/><rect x="14" y="9" width="1" height="1" fill="#FFFFFF"/><rect x="15" y="9" width="1" height="1" fill="#404040"/><rect x="0" y="10" width="3" height="1" fill="#404040"/><rect x="3" y="10" width="1" height="1" fill="#FFFFFF"/><rect x="4" y="10" width="1" height="1" fill="#00E8F0"/><rect x="5" y="10" width="1" height="1" fill="#FFFFFF"/><rect x="6" y="10" width="1" height="1" fill="#00E8F0"/><rect x="7" y="10" width="1" height="1" fill="#FFFFFF"/><rect x="8" y="10" width="1" height="1" fill="#00E8F0"/><rect x="9" y="10" width="1" height="1" fill="#FFFFFF"/><rect x="10" y="10" width="1" height="1" fill="#00E8F0"/><rect x="11" y="10" width="1" height="1" fill="#FFFFFF"/><rect x="12" y="10" width="1" height="1" fill="#00E8F0"/><rect x="13" y="10" width="1" height="1" fill="#FFFFFF"/><rect x="14" y="10" width="1" height="1" fill="#00E8F0"/><rect x="15" y="10" width="1" height="1" fill="#404040"/><rect x="0" y="11" width="1" height="1" fill="#404040"/><rect x="1" y="11" width="1" height="1" fill="#FFFFFF"/><rect x="2" y="11" width="1" height="1" fill="#404040"/><rect x="3" y="11" width="1" height="1" fill="#00E8F0"/><rect x="4" y="11" width="1" height="1" fill="#FFFFFF"/><rect x="5" y="11" width="1" height="1" fill="#00E8F0"/><rect x="6" y="11" width="1" height="1" fill="#FFFFFF"/><rect x="7" y="11" width="1" height="1" fill="#00E8F0"/><rect x="8" y="11" width="1" height="1" fill="#FFFFFF"/><rect x="9" y="11" width="1" height="1" fill="#00E8F0"/><rect x="10" y="11" width="1" height="1" fill="#FFFFFF"/><rect x="11" y="11" width="1" height="1" fill="#00E8F0"/><rect x="12" y="11" width="1" height="1" fill="#FFFFFF"/><rect x="13" y="11" width="1" height="1" fill="#00E8F0"/><rect x="14" y="11" width="1" height="1" fill="#FFFFFF"/><rect x="15" y="11" width="1" height="1" fill="#404040"/><rect x="0" y="12" width="16" height="1" fill="#404040"/></svg>
<svg style="position:absolute;left:194px;top:30px" width="16" height="13" viewBox="0 0 16 13" shape-rendering="crispEdges"><rect x="0" y="0" width="16" height="1" fill="#404040"/><rect x="0" y="1" width="1" height="1" fill="#404040"/><rect x="1" y="1" width="1" height="1" fill="#FFFFFF"/><rect x="2" y="1" width="1" height="1" fill="#404040"/><rect x="3" y="1" width="5" height="1" fill="#FFFFFF"/><rect x="8" y="1" width="1" height="1" fill="#404040"/><rect x="9" y="1" width="6" height="1" fill="#FFFFFF"/><rect x="15" y="1" width="1" height="1" fill="#404040"/><rect x="0" y="2" width="16" height="1" fill="#404040"/><rect x="0" y="3" width="1" height="1" fill="#404040"/><rect x="1" y="3" width="1" height="1" fill="#FFFFFF"/><rect x="2" y="3" width="1" height="1" fill="#404040"/><rect x="3" y="3" width="1" height="1" fill="#2828D0"/><rect x="4" y="3" width="1" height="1" fill="#FFFFFF"/><rect x="5" y="3" width="1" height="1" fill="#00E8F0"/><rect x="6" y="3" width="2" height="1" fill="#2828D0"/><rect x="8" y="3" width="1" height="1" fill="#FFFFFF"/><rect x="9" y="3" width="1" height="1" fill="#00E8F0"/><rect x="10" y="3" width="2" height="1" fill="#2828D0"/><rect x="12" y="3" width="1" height="1" fill="#FFFFFF"/><rect x="13" y="3" width="1" height="1" fill="#00E8F0"/><rect x="14" y="3" width="1" height="1" fill="#2828D0"/><rect x="15" y="3" width="1" height="1" fill="#404040"/><rect x="0" y="4" width="1" height="1" fill="#404040"/><rect x="1" y="4" width="1" height="1" fill="#FFFFFF"/><rect x="2" y="4" width="1" height="1" fill="#404040"/><rect x="3" y="4" width="1" height="1" fill="#2828D0"/><rect x="4" y="4" width="1" height="1" fill="#00E8F0"/><rect x="5" y="4" width="1" height="1" fill="#FFFFFF"/><rect x="6" y="4" width="2" height="1" fill="#2828D0"/><rect x="8" y="4" width="1" height="1" fill="#00E8F0"/><rect x="9" y="4" width="1" height="1" fill="#FFFFFF"/><rect x="10" y="4" width="2" height="1" fill="#2828D0"/><rect x="12" y="4" width="1" height="1" fill="#00E8F0"/><rect x="13" y="4" width="1" height="1" fill="#FFFFFF"/><rect x="14" y="4" width="1" height="1" fill="#2828D0"/><rect x="15" y="4" width="1" height="1" fill="#404040"/><rect x="0" y="5" width="1" height="1" fill="#404040"/><rect x="1" y="5" width="1" height="1" fill="#FFFFFF"/><rect x="2" y="5" width="1" height="1" fill="#404040"/><rect x="3" y="5" width="12" height="1" fill="#2828D0"/><rect x="15" y="5" width="1" height="1" fill="#404040"/><rect x="0" y="6" width="3" height="1" fill="#404040"/><rect x="3" y="6" width="1" height="1" fill="#2828D0"/><rect x="4" y="6" width="1" height="1" fill="#00E8F0"/><rect x="5" y="6" width="1" height="1" fill="#FFFFFF"/><rect x="6" y="6" width="2" height="1" fill="#2828D0"/><rect x="8" y="6" width="1" height="1" fill="#00E8F0"/><rect x="9" y="6" width="1" height="1" fill="#FFFFFF"/><rect x="10" y="6" width="2" height="1" fill="#2828D0"/><rect x="12" y="6" width="1" height="1" fill="#00E8F0"/><rect x="13" y="6" width="1" height="1" fill="#FFFFFF"/><rect x="14" y="6" width="1" height="1" fill="#2828D0"/><rect x="15" y="6" width="1" height="1" fill="#404040"/><rect x="0" y="7" width="1" height="1" fill="#404040"/><rect x="1" y="7" width="1" height="1" fill="#FFFFFF"/><rect x="2" y="7" width="1" height="1" fill="#404040"/><rect x="3" y="7" width="1" height="1" fill="#2828D0"/><rect x="4" y="7" width="1" height="1" fill="#FFFFFF"/><rect x="5" y="7" width="1" height="1" fill="#00E8F0"/><rect x="6" y="7" width="2" height="1" fill="#2828D0"/><rect x="8" y="7" width="1" height="1" fill="#FFFFFF"/><rect x="9" y="7" width="1" height="1" fill="#00E8F0"/><rect x="10" y="7" width="2" height="1" fill="#2828D0"/><rect x="12" y="7" width="1" height="1" fill="#FFFFFF"/><rect x="13" y="7" width="1" height="1" fill="#00E8F0"/><rect x="14" y="7" width="1" height="1" fill="#2828D0"/><rect x="15" y="7" width="1" height="1" fill="#404040"/><rect x="0" y="8" width="1" height="1" fill="#404040"/><rect x="1" y="8" width="1" height="1" fill="#FFFFFF"/><rect x="2" y="8" width="1" height="1" fill="#404040"/><rect x="3" y="8" width="12" height="1" fill="#2828D0"/><rect x="15" y="8" width="1" height="1" fill="#404040"/><rect x="0" y="9" width="1" height="1" fill="#404040"/><rect x="1" y="9" width="1" height="1" fill="#FFFFFF"/><rect x="2" y="9" width="1" height="1" fill="#404040"/><rect x="3" y="9" width="1" height="1" fill="#2828D0"/><rect x="4" y="9" width="1" height="1" fill="#FFFFFF"/><rect x="5" y="9" width="1" height="1" fill="#00E8F0"/><rect x="6" y="9" width="2" height="1" fill="#2828D0"/><rect x="8" y="9" width="1" height="1" fill="#FFFFFF"/><rect x="9" y="9" width="1" height="1" fill="#00E8F0"/><rect x="10" y="9" width="2" height="1" fill="#2828D0"/><rect x="12" y="9" width="1" height="1" fill="#FFFFFF"/><rect x="13" y="9" width="1" height="1" fill="#00E8F0"/><rect x="14" y="9" width="1" height="1" fill="#2828D0"/><rect x="15" y="9" width="1" height="1" fill="#404040"/><rect x="0" y="10" width="3" height="1" fill="#404040"/><rect x="3" y="10" width="1" height="1" fill="#2828D0"/><rect x="4" y="10" width="1" height="1" fill="#00E8F0"/><rect x="5" y="10" width="1" height="1" fill="#FFFFFF"/><rect x="6" y="10" width="2" height="1" fill="#2828D0"/><rect x="8" y="10" width="1" height="1" fill="#00E8F0"/><rect x="9" y="10" width="1" height="1" fill="#FFFFFF"/><rect x="10" y="10" width="2" height="1" fill="#2828D0"/><rect x="12" y="10" width="1" height="1" fill="#00E8F0"/><rect x="13" y="10" width="1" height="1" fill="#FFFFFF"/><rect x="14" y="10" width="1" height="1" fill="#2828D0"/><rect x="15" y="10" width="1" height="1" fill="#404040"/><rect x="0" y="11" width="1" height="1" fill="#404040"/><rect x="1" y="11" width="1" height="1" fill="#FFFFFF"/><rect x="2" y="11" width="1" height="1" fill="#404040"/><rect x="3" y="11" width="12" height="1" fill="#2828D0"/><rect x="15" y="11" width="1" height="1" fill="#404040"/><rect x="0" y="12" width="16" height="1" fill="#404040"/></svg>
<svg style="position:absolute;left:221px;top:28px" width="10" height="15" viewBox="0 0 10 15" shape-rendering="crispEdges"><rect x="0" y="0" width="10" height="1" fill="#404040"/><rect x="0" y="1" width="1" height="1" fill="#404040"/><rect x="1" y="1" width="8" height="1" fill="#C8C8C8"/><rect x="9" y="1" width="1" height="1" fill="#404040"/><rect x="0" y="2" width="1" height="1" fill="#404040"/><rect x="1" y="2" width="3" height="1" fill="#C8C8C8"/><rect x="4" y="2" width="2" height="1" fill="#404040"/><rect x="6" y="2" width="3" height="1" fill="#C8C8C8"/><rect x="9" y="2" width="1" height="1" fill="#404040"/><rect x="0" y="3" width="1" height="1" fill="#404040"/><rect x="1" y="3" width="2" height="1" fill="#C8C8C8"/><rect x="3" y="3" width="4" height="1" fill="#404040"/><rect x="7" y="3" width="2" height="1" fill="#C8C8C8"/><rect x="9" y="3" width="1" height="1" fill="#404040"/><rect x="0" y="4" width="1" height="1" fill="#404040"/><rect x="1" y="4" width="1" height="1" fill="#C8C8C8"/><rect x="2" y="4" width="6" height="1" fill="#404040"/><rect x="8" y="4" width="1" height="1" fill="#C8C8C8"/><rect x="9" y="4" width="1" height="1" fill="#404040"/><rect x="0" y="5" width="1" height="1" fill="#404040"/><rect x="1" y="5" width="8" height="1" fill="#C8C8C8"/><rect x="9" y="5" width="1" height="1" fill="#404040"/><rect x="0" y="6" width="1" height="1" fill="#404040"/><rect x="1" y="6" width="8" height="1" fill="#C8C8C8"/><rect x="9" y="6" width="1" height="1" fill="#404040"/><rect x="0" y="7" width="10" height="1" fill="#404040"/><rect x="0" y="8" width="1" height="1" fill="#404040"/><rect x="1" y="8" width="8" height="1" fill="#C8C8C8"/><rect x="9" y="8" width="1" height="1" fill="#404040"/><rect x="0" y="9" width="1" height="1" fill="#404040"/><rect x="1" y="9" width="8" height="1" fill="#C8C8C8"/><rect x="9" y="9" width="1" height="1" fill="#404040"/><rect x="0" y="10" width="1" height="1" fill="#404040"/><rect x="1" y="10" width="1" height="1" fill="#C8C8C8"/><rect x="2" y="10" width="6" height="1" fill="#404040"/><rect x="8" y="10" width="1" height="1" fill="#C8C8C8"/><rect x="9" y="10" width="1" height="1" fill="#404040"/><rect x="0" y="11" width="1" height="1" fill="#404040"/><rect x="1" y="11" width="2" height="1" fill="#C8C8C8"/><rect x="3" y="11" width="4" height="1" fill="#404040"/><rect x="7" y="11" width="2" height="1" fill="#C8C8C8"/><rect x="9" y="11" width="1" height="1" fill="#404040"/><rect x="0" y="12" width="1" height="1" fill="#404040"/><rect x="1" y="12" width="3" height="1" fill="#C8C8C8"/><rect x="4" y="12" width="2" height="1" fill="#404040"/><rect x="6" y="12" width="3" height="1" fill="#C8C8C8"/><rect x="9" y="12" width="1" height="1" fill="#404040"/><rect x="0" y="13" width="1" height="1" fill="#404040"/><rect x="1" y="13" width="8" height="1" fill="#C8C8C8"/><rect x="9" y="13" width="1" height="1" fill="#404040"/><rect x="0" y="14" width="10" height="1" fill="#404040"/></svg>
<svg style="position:absolute;left:240px;top:28px" width="17" height="14" viewBox="0 0 17 14" shape-rendering="crispEdges"><rect x="10" y="0" width="5" height="1" fill="#B8B4A4"/><rect x="16" y="0" width="1" height="1" fill="#B8B4A4"/><rect x="9" y="1" width="1" height="1" fill="#B8B4A4"/><rect x="15" y="1" width="2" height="1" fill="#B8B4A4"/><rect x="5" y="2" width="2" height="1" fill="#B8B4A4"/><rect x="8" y="2" width="1" height="1" fill="#B8B4A4"/><rect x="16" y="2" width="1" height="1" fill="#B8B4A4"/><rect x="4" y="3" width="1" height="1" fill="#B8B4A4"/><rect x="7" y="3" width="1" height="1" fill="#B8B4A4"/><rect x="15" y="3" width="2" height="1" fill="#B8B4A4"/><rect x="3" y="4" width="1" height="1" fill="#B8B4A4"/><rect x="5" y="4" width="1" height="1" fill="#B8B4A4"/><rect x="7" y="4" width="1" height="1" fill="#B8B4A4"/><rect x="14" y="4" width="1" height="1" fill="#B8B4A4"/><rect x="16" y="4" width="1" height="1" fill="#B8B4A4"/><rect x="2" y="5" width="1" height="1" fill="#B8B4A4"/><rect x="4" y="5" width="1" height="1" fill="#B8B4A4"/><rect x="6" y="5" width="1" height="1" fill="#B8B4A4"/><rect x="13" y="5" width="1" height="1" fill="#B8B4A4"/><rect x="1" y="6" width="1" height="1" fill="#B8B4A4"/><rect x="3" y="6" width="1" height="1" fill="#B8B4A4"/><rect x="5" y="6" width="1" height="1" fill="#B8B4A4"/><rect x="7" y="6" width="1" height="1" fill="#B8B4A4"/><rect x="12" y="6" width="1" height="1" fill="#B8B4A4"/><rect x="0" y="7" width="12" height="1" fill="#B8B4A4"/><rect x="0" y="8" width="1" height="1" fill="#B8B4A4"/><rect x="11" y="8" width="1" height="1" fill="#B8B4A4"/><rect x="0" y="9" width="1" height="1" fill="#B8B4A4"/><rect x="2" y="9" width="3" height="1" fill="#B8B4A4"/><rect x="6" y="9" width="4" height="1" fill="#B8B4A4"/><rect x="11" y="9" width="1" height="1" fill="#B8B4A4"/><rect x="0" y="10" width="1" height="1" fill="#B8B4A4"/><rect x="11" y="10" width="1" height="1" fill="#B8B4A4"/><rect x="0" y="11" width="1" height="1" fill="#B8B4A4"/><rect x="2" y="11" width="3" height="1" fill="#B8B4A4"/><rect x="6" y="11" width="4" height="1" fill="#B8B4A4"/><rect x="11" y="11" width="1" height="1" fill="#B8B4A4"/><rect x="0" y="12" width="1" height="1" fill="#B8B4A4"/><rect x="11" y="12" width="1" height="1" fill="#B8B4A4"/><rect x="0" y="13" width="12" height="1" fill="#B8B4A4"/></svg>
<svg style="position:absolute;left:266px;top:30px" width="8" height="11" viewBox="0 0 8 11" shape-rendering="crispEdges"><rect x="1" y="0" width="1" height="1" fill="#404040"/><rect x="1" y="1" width="4" height="1" fill="#404040"/><rect x="0" y="2" width="1" height="1" fill="#404040"/><rect x="5" y="2" width="1" height="1" fill="#404040"/><rect x="0" y="3" width="1" height="1" fill="#404040"/><rect x="5" y="3" width="1" height="1" fill="#404040"/><rect x="1" y="4" width="7" height="1" fill="#404040"/><rect x="1" y="6" width="4" height="1" fill="#404040"/><rect x="0" y="7" width="1" height="1" fill="#404040"/><rect x="3" y="7" width="1" height="1" fill="#404040"/><rect x="5" y="7" width="1" height="1" fill="#404040"/><rect x="0" y="8" width="1" height="1" fill="#404040"/><rect x="3" y="8" width="1" height="1" fill="#404040"/><rect x="5" y="8" width="1" height="1" fill="#404040"/><rect x="1" y="9" width="2" height="1" fill="#404040"/><rect x="4" y="9" width="3" height="1" fill="#404040"/></svg>
<svg style="position:absolute;left:704px;top:28px" width="17" height="15" viewBox="0 0 17 15" shape-rendering="crispEdges"><rect x="4" y="0" width="2" height="1" fill="#404040"/><rect x="3" y="1" width="1" height="1" fill="#404040"/><rect x="5" y="1" width="1" height="1" fill="#404040"/><rect x="10" y="1" width="2" height="1" fill="#404040"/><rect x="2" y="2" width="1" height="1" fill="#404040"/><rect x="5" y="2" width="1" height="1" fill="#404040"/><rect x="9" y="2" width="1" height="1" fill="#404040"/><rect x="10" y="2" width="2" height="1" fill="#F0F020"/><rect x="1" y="3" width="1" height="1" fill="#404040"/><rect x="5" y="3" width="1" height="1" fill="#404040"/><rect x="9" y="3" width="1" height="1" fill="#404040"/><rect x="10" y="3" width="2" height="1" fill="#F0F020"/><rect x="1" y="4" width="1" height="1" fill="#404040"/><rect x="5" y="4" width="1" height="1" fill="#404040"/><rect x="9" y="4" width="1" height="1" fill="#404040"/><rect x="10" y="4" width="2" height="1" fill="#F0F020"/><rect x="13" y="4" width="2" height="1" fill="#E03030"/><rect x="1" y="5" width="1" height="1" fill="#404040"/><rect x="3" y="5" width="2" height="1" fill="#3838E8"/><rect x="5" y="5" width="1" height="1" fill="#404040"/><rect x="9" y="5" width="1" height="1" fill="#404040"/><rect x="10" y="5" width="2" height="1" fill="#F0F020"/><rect x="13" y="5" width="2" height="1" fill="#E03030"/><rect x="1" y="6" width="1" height="1" fill="#404040"/><rect x="3" y="6" width="2" height="1" fill="#3838E8"/><rect x="5" y="6" width="1" height="1" fill="#404040"/><rect x="9" y="6" width="1" height="1" fill="#404040"/><rect x="10" y="6" width="2" height="1" fill="#F0F020"/><rect x="13" y="6" width="2" height="1" fill="#E03030"/><rect x="1" y="7" width="1" height="1" fill="#404040"/><rect x="3" y="7" width="2" height="1" fill="#3838E8"/><rect x="5" y="7" width="1" height="1" fill="#404040"/><rect x="9" y="7" width="1" height="1" fill="#404040"/><rect x="10" y="7" width="2" height="1" fill="#F0F020"/><rect x="13" y="7" width="2" height="1" fill="#E03030"/><rect x="1" y="8" width="1" height="1" fill="#404040"/><rect x="3" y="8" width="2" height="1" fill="#3838E8"/><rect x="5" y="8" width="1" height="1" fill="#404040"/><rect x="9" y="8" width="1" height="1" fill="#404040"/><rect x="10" y="8" width="2" height="1" fill="#F0F020"/><rect x="13" y="8" width="2" height="1" fill="#E03030"/><rect x="1" y="9" width="1" height="1" fill="#404040"/><rect x="3" y="9" width="2" height="1" fill="#3838E8"/><rect x="5" y="9" width="1" height="1" fill="#404040"/><rect x="9" y="9" width="1" height="1" fill="#404040"/><rect x="10" y="9" width="2" height="1" fill="#F0F020"/><rect x="13" y="9" width="2" height="1" fill="#E03030"/><rect x="1" y="10" width="1" height="1" fill="#404040"/><rect x="3" y="10" width="2" height="1" fill="#3838E8"/><rect x="5" y="10" width="1" height="1" fill="#404040"/><rect x="9" y="10" width="1" height="1" fill="#404040"/><rect x="10" y="10" width="2" height="1" fill="#F0F020"/><rect x="13" y="10" width="2" height="1" fill="#E03030"/><rect x="1" y="11" width="1" height="1" fill="#404040"/><rect x="3" y="11" width="2" height="1" fill="#3838E8"/><rect x="5" y="11" width="1" height="1" fill="#404040"/><rect x="9" y="11" width="1" height="1" fill="#404040"/><rect x="10" y="11" width="2" height="1" fill="#F0F020"/><rect x="13" y="11" width="2" height="1" fill="#E03030"/><rect x="1" y="12" width="15" height="1" fill="#404040"/><rect x="2" y="13" width="1" height="1" fill="#404040"/><rect x="15" y="13" width="1" height="1" fill="#404040"/><rect x="3" y="14" width="13" height="1" fill="#404040"/></svg>
<svg style="position:absolute;left:769px;top:30px" width="13" height="13" viewBox="0 0 13 13" shape-rendering="crispEdges"><rect x="0" y="0" width="13" height="1" fill="#404040"/><rect x="0" y="1" width="1" height="1" fill="#404040"/><rect x="6" y="1" width="1" height="1" fill="#404040"/><rect x="12" y="1" width="1" height="1" fill="#404040"/><rect x="0" y="2" width="1" height="1" fill="#404040"/><rect x="6" y="2" width="1" height="1" fill="#404040"/><rect x="12" y="2" width="1" height="1" fill="#404040"/><rect x="0" y="3" width="1" height="1" fill="#404040"/><rect x="6" y="3" width="1" height="1" fill="#404040"/><rect x="12" y="3" width="1" height="1" fill="#404040"/><rect x="0" y="4" width="1" height="1" fill="#404040"/><rect x="6" y="4" width="1" height="1" fill="#404040"/><rect x="12" y="4" width="1" height="1" fill="#404040"/><rect x="0" y="5" width="1" height="1" fill="#404040"/><rect x="6" y="5" width="1" height="1" fill="#404040"/><rect x="12" y="5" width="1" height="1" fill="#404040"/><rect x="0" y="6" width="13" height="1" fill="#404040"/><rect x="0" y="7" width="1" height="1" fill="#404040"/><rect x="6" y="7" width="1" height="1" fill="#404040"/><rect x="12" y="7" width="1" height="1" fill="#404040"/><rect x="0" y="8" width="1" height="1" fill="#404040"/><rect x="6" y="8" width="1" height="1" fill="#404040"/><rect x="12" y="8" width="1" height="1" fill="#404040"/><rect x="0" y="9" width="1" height="1" fill="#404040"/><rect x="6" y="9" width="1" height="1" fill="#404040"/><rect x="12" y="9" width="1" height="1" fill="#404040"/><rect x="0" y="10" width="1" height="1" fill="#404040"/><rect x="6" y="10" width="1" height="1" fill="#404040"/><rect x="12" y="10" width="1" height="1" fill="#404040"/><rect x="0" y="11" width="1" height="1" fill="#404040"/><rect x="6" y="11" width="1" height="1" fill="#404040"/><rect x="12" y="11" width="1" height="1" fill="#404040"/><rect x="0" y="12" width="13" height="1" fill="#404040"/></svg>
<svg style="position:absolute;left:792px;top:30px" width="13" height="13" viewBox="0 0 13 13" shape-rendering="crispEdges"><rect x="0" y="0" width="1" height="1" fill="#A8A8A8"/><rect x="2" y="0" width="1" height="1" fill="#A8A8A8"/><rect x="4" y="0" width="1" height="1" fill="#A8A8A8"/><rect x="6" y="0" width="1" height="1" fill="#A8A8A8"/><rect x="8" y="0" width="1" height="1" fill="#A8A8A8"/><rect x="10" y="0" width="1" height="1" fill="#A8A8A8"/><rect x="12" y="0" width="1" height="1" fill="#A8A8A8"/><rect x="0" y="2" width="1" height="1" fill="#A8A8A8"/><rect x="6" y="2" width="1" height="1" fill="#A8A8A8"/><rect x="12" y="2" width="1" height="1" fill="#A8A8A8"/><rect x="0" y="4" width="1" height="1" fill="#A8A8A8"/><rect x="6" y="4" width="1" height="1" fill="#A8A8A8"/><rect x="12" y="4" width="1" height="1" fill="#A8A8A8"/><rect x="0" y="6" width="1" height="1" fill="#A8A8A8"/><rect x="2" y="6" width="1" height="1" fill="#A8A8A8"/><rect x="4" y="6" width="1" height="1" fill="#A8A8A8"/><rect x="6" y="6" width="1" height="1" fill="#A8A8A8"/><rect x="8" y="6" width="1" height="1" fill="#A8A8A8"/><rect x="10" y="6" width="1" height="1" fill="#A8A8A8"/><rect x="12" y="6" width="1" height="1" fill="#A8A8A8"/><rect x="0" y="8" width="1" height="1" fill="#A8A8A8"/><rect x="6" y="8" width="1" height="1" fill="#A8A8A8"/><rect x="12" y="8" width="1" height="1" fill="#A8A8A8"/><rect x="0" y="10" width="1" height="1" fill="#A8A8A8"/><rect x="6" y="10" width="1" height="1" fill="#A8A8A8"/><rect x="12" y="10" width="1" height="1" fill="#A8A8A8"/><rect x="0" y="12" width="1" height="1" fill="#A8A8A8"/><rect x="2" y="12" width="1" height="1" fill="#A8A8A8"/><rect x="4" y="12" width="1" height="1" fill="#A8A8A8"/><rect x="6" y="12" width="1" height="1" fill="#A8A8A8"/><rect x="8" y="12" width="1" height="1" fill="#A8A8A8"/><rect x="10" y="12" width="1" height="1" fill="#A8A8A8"/><rect x="12" y="12" width="1" height="1" fill="#A8A8A8"/></svg>
<svg style="position:absolute;left:813px;top:28px" width="17" height="15" viewBox="0 0 17 15" shape-rendering="crispEdges"><rect x="0" y="0" width="5" height="1" fill="#404040"/><rect x="4" y="1" width="1" height="1" fill="#404040"/><rect x="4" y="2" width="1" height="1" fill="#404040"/><rect x="0" y="3" width="5" height="1" fill="#404040"/><rect x="7" y="5" width="1" height="1" fill="#3333A0"/><rect x="6" y="6" width="2" height="1" fill="#3333A0"/><rect x="11" y="6" width="6" height="1" fill="#404040"/><rect x="5" y="7" width="6" height="1" fill="#3333A0"/><rect x="11" y="7" width="1" height="1" fill="#404040"/><rect x="12" y="7" width="1" height="1" fill="#FFFFFF"/><rect x="13" y="7" width="1" height="1" fill="#00E8F0"/><rect x="14" y="7" width="1" height="1" fill="#FFFFFF"/><rect x="15" y="7" width="1" height="1" fill="#00E8F0"/><rect x="16" y="7" width="1" height="1" fill="#404040"/><rect x="6" y="8" width="2" height="1" fill="#3333A0"/><rect x="11" y="8" width="1" height="1" fill="#404040"/><rect x="12" y="8" width="1" height="1" fill="#00E8F0"/><rect x="13" y="8" width="1" height="1" fill="#FFFFFF"/><rect x="14" y="8" width="1" height="1" fill="#00E8F0"/><rect x="15" y="8" width="1" height="1" fill="#FFFFFF"/><rect x="16" y="8" width="1" height="1" fill="#404040"/><rect x="7" y="9" width="1" height="1" fill="#3333A0"/><rect x="11" y="9" width="6" height="1" fill="#404040"/><rect x="0" y="11" width="5" height="1" fill="#404040"/><rect x="4" y="12" width="1" height="1" fill="#404040"/><rect x="4" y="13" width="1" height="1" fill="#404040"/><rect x="0" y="14" width="5" height="1" fill="#404040"/></svg>
<svg style="position:absolute;left:836px;top:28px" width="13" height="14" viewBox="0 0 13 14" shape-rendering="crispEdges"><rect x="0" y="0" width="2" height="1" fill="#404040"/><rect x="11" y="0" width="2" height="1" fill="#404040"/><rect x="1" y="1" width="1" height="1" fill="#404040"/><rect x="11" y="1" width="1" height="1" fill="#404040"/><rect x="1" y="2" width="1" height="1" fill="#404040"/><rect x="11" y="2" width="1" height="1" fill="#404040"/><rect x="1" y="3" width="3" height="1" fill="#404040"/><rect x="9" y="3" width="3" height="1" fill="#404040"/><rect x="6" y="4" width="1" height="1" fill="#3333A0"/><rect x="5" y="5" width="3" height="1" fill="#3333A0"/><rect x="4" y="6" width="5" height="1" fill="#3333A0"/><rect x="6" y="7" width="1" height="1" fill="#3333A0"/><rect x="5" y="8" width="3" height="1" fill="#404040"/><rect x="5" y="9" width="1" height="1" fill="#404040"/><rect x="6" y="9" width="1" height="1" fill="#FFFFFF"/><rect x="7" y="9" width="1" height="1" fill="#404040"/><rect x="5" y="10" width="1" height="1" fill="#404040"/><rect x="6" y="10" width="1" height="1" fill="#00E8F0"/><rect x="7" y="10" width="1" height="1" fill="#404040"/><rect x="5" y="11" width="1" height="1" fill="#404040"/><rect x="6" y="11" width="1" height="1" fill="#FFFFFF"/><rect x="7" y="11" width="1" height="1" fill="#404040"/><rect x="5" y="12" width="1" height="1" fill="#404040"/><rect x="6" y="12" width="1" height="1" fill="#00E8F0"/><rect x="7" y="12" width="1" height="1" fill="#404040"/><rect x="5" y="13" width="3" height="1" fill="#404040"/></svg>
<svg style="position:absolute;left:860px;top:32px" width="10" height="7" viewBox="0 0 10 7" shape-rendering="crispEdges"><rect x="4" y="0" width="3" height="1" fill="#B8B4A4"/><rect x="8" y="0" width="2" height="1" fill="#B8B4A4"/><rect x="2" y="1" width="2" height="1" fill="#B8B4A4"/><rect x="7" y="1" width="3" height="1" fill="#B8B4A4"/><rect x="1" y="2" width="1" height="1" fill="#B8B4A4"/><rect x="7" y="2" width="3" height="1" fill="#B8B4A4"/><rect x="0" y="3" width="1" height="1" fill="#B8B4A4"/><rect x="6" y="3" width="4" height="1" fill="#B8B4A4"/><rect x="0" y="4" width="1" height="1" fill="#B8B4A4"/><rect x="1" y="5" width="1" height="1" fill="#B8B4A4"/><rect x="2" y="6" width="3" height="1" fill="#B8B4A4"/></svg>
<svg style="position:absolute;left:880px;top:35px" width="5" height="3" viewBox="0 0 5 3" shape-rendering="crispEdges"><rect x="0" y="0" width="5" height="1" fill="#B8B4A4"/><rect x="1" y="1" width="3" height="1" fill="#B8B4A4"/><rect x="2" y="2" width="1" height="1" fill="#B8B4A4"/></svg>
<svg style="position:absolute;left:893px;top:28px" width="17" height="13" viewBox="0 0 17 13" shape-rendering="crispEdges"><rect x="0" y="0" width="7" height="1" fill="#404040"/><rect x="6" y="1" width="1" height="1" fill="#404040"/><rect x="6" y="2" width="1" height="1" fill="#404040"/><rect x="0" y="3" width="7" height="1" fill="#404040"/><rect x="0" y="4" width="1" height="1" fill="#00E8F0"/><rect x="1" y="4" width="1" height="1" fill="#FFFFFF"/><rect x="2" y="4" width="1" height="1" fill="#00E8F0"/><rect x="3" y="4" width="1" height="1" fill="#FFFFFF"/><rect x="4" y="4" width="1" height="1" fill="#00E8F0"/><rect x="5" y="4" width="1" height="1" fill="#FFFFFF"/><rect x="6" y="4" width="6" height="1" fill="#404040"/><rect x="14" y="4" width="1" height="1" fill="#3333A0"/><rect x="0" y="5" width="1" height="1" fill="#FFFFFF"/><rect x="1" y="5" width="1" height="1" fill="#00E8F0"/><rect x="2" y="5" width="1" height="1" fill="#FFFFFF"/><rect x="3" y="5" width="1" height="1" fill="#00E8F0"/><rect x="4" y="5" width="1" height="1" fill="#FFFFFF"/><rect x="5" y="5" width="1" height="1" fill="#00E8F0"/><rect x="6" y="5" width="1" height="1" fill="#FFFFFF"/><rect x="7" y="5" width="1" height="1" fill="#00E8F0"/><rect x="8" y="5" width="1" height="1" fill="#FFFFFF"/><rect x="9" y="5" width="1" height="1" fill="#00E8F0"/><rect x="10" y="5" width="1" height="1" fill="#FFFFFF"/><rect x="11" y="5" width="1" height="1" fill="#00E8F0"/><rect x="12" y="5" width="1" height="1" fill="#3333A0"/><rect x="14" y="5" width="2" height="1" fill="#3333A0"/><rect x="0" y="6" width="1" height="1" fill="#00E8F0"/><rect x="1" y="6" width="1" height="1" fill="#FFFFFF"/><rect x="2" y="6" width="1" height="1" fill="#00E8F0"/><rect x="3" y="6" width="1" height="1" fill="#FFFFFF"/><rect x="4" y="6" width="1" height="1" fill="#00E8F0"/><rect x="5" y="6" width="1" height="1" fill="#FFFFFF"/><rect x="6" y="6" width="1" height="1" fill="#00E8F0"/><rect x="7" y="6" width="1" height="1" fill="#FFFFFF"/><rect x="8" y="6" width="1" height="1" fill="#00E8F0"/><rect x="9" y="6" width="1" height="1" fill="#FFFFFF"/><rect x="10" y="6" width="1" height="1" fill="#00E8F0"/><rect x="11" y="6" width="1" height="1" fill="#FFFFFF"/><rect x="12" y="6" width="5" height="1" fill="#3333A0"/><rect x="0" y="7" width="1" height="1" fill="#FFFFFF"/><rect x="1" y="7" width="1" height="1" fill="#00E8F0"/><rect x="2" y="7" width="1" height="1" fill="#FFFFFF"/><rect x="3" y="7" width="1" height="1" fill="#00E8F0"/><rect x="4" y="7" width="1" height="1" fill="#FFFFFF"/><rect x="5" y="7" width="1" height="1" fill="#00E8F0"/><rect x="6" y="7" width="6" height="1" fill="#404040"/><rect x="14" y="7" width="2" height="1" fill="#3333A0"/><rect x="0" y="8" width="7" height="1" fill="#404040"/><rect x="14" y="8" width="1" height="1" fill="#3333A0"/><rect x="6" y="9" width="1" height="1" fill="#404040"/><rect x="6" y="10" width="1" height="1" fill="#404040"/><rect x="0" y="11" width="7" height="1" fill="#404040"/></svg>
<svg style="position:absolute;left:917px;top:28px" width="13" height="14" viewBox="0 0 13 14" shape-rendering="crispEdges"><rect x="0" y="0" width="3" height="1" fill="#404040"/><rect x="9" y="0" width="3" height="1" fill="#404040"/><rect x="2" y="1" width="1" height="1" fill="#404040"/><rect x="9" y="1" width="1" height="1" fill="#404040"/><rect x="2" y="2" width="8" height="1" fill="#404040"/><rect x="4" y="3" width="1" height="1" fill="#404040"/><rect x="5" y="3" width="1" height="1" fill="#00E8F0"/><rect x="6" y="3" width="1" height="1" fill="#FFFFFF"/><rect x="7" y="3" width="1" height="1" fill="#404040"/><rect x="4" y="4" width="1" height="1" fill="#404040"/><rect x="5" y="4" width="1" height="1" fill="#FFFFFF"/><rect x="6" y="4" width="1" height="1" fill="#00E8F0"/><rect x="7" y="4" width="1" height="1" fill="#404040"/><rect x="4" y="5" width="1" height="1" fill="#404040"/><rect x="5" y="5" width="1" height="1" fill="#00E8F0"/><rect x="6" y="5" width="1" height="1" fill="#FFFFFF"/><rect x="7" y="5" width="1" height="1" fill="#404040"/><rect x="4" y="6" width="1" height="1" fill="#404040"/><rect x="5" y="6" width="1" height="1" fill="#FFFFFF"/><rect x="6" y="6" width="1" height="1" fill="#00E8F0"/><rect x="7" y="6" width="1" height="1" fill="#404040"/><rect x="4" y="7" width="1" height="1" fill="#404040"/><rect x="5" y="7" width="1" height="1" fill="#00E8F0"/><rect x="6" y="7" width="1" height="1" fill="#FFFFFF"/><rect x="7" y="7" width="1" height="1" fill="#404040"/><rect x="4" y="8" width="4" height="1" fill="#404040"/><rect x="6" y="9" width="1" height="1" fill="#3333A0"/><rect x="6" y="10" width="1" height="1" fill="#3333A0"/><rect x="4" y="11" width="5" height="1" fill="#3333A0"/><rect x="5" y="12" width="3" height="1" fill="#3333A0"/><rect x="6" y="13" width="1" height="1" fill="#3333A0"/></svg>
<svg style="position:absolute;left:940px;top:28px" width="13" height="14" viewBox="0 0 13 14" shape-rendering="crispEdges"><rect x="2" y="0" width="1" height="1" fill="#3333A0"/><rect x="10" y="0" width="1" height="1" fill="#3333A0"/><rect x="1" y="1" width="2" height="1" fill="#3333A0"/><rect x="10" y="1" width="2" height="1" fill="#3333A0"/><rect x="0" y="2" width="5" height="1" fill="#3333A0"/><rect x="8" y="2" width="5" height="1" fill="#3333A0"/><rect x="1" y="3" width="2" height="1" fill="#3333A0"/><rect x="10" y="3" width="2" height="1" fill="#3333A0"/><rect x="2" y="4" width="1" height="1" fill="#3333A0"/><rect x="10" y="4" width="1" height="1" fill="#3333A0"/><rect x="0" y="7" width="13" height="1" fill="#404040"/><rect x="0" y="8" width="1" height="1" fill="#404040"/><rect x="1" y="8" width="11" height="1" fill="#C8C8C8"/><rect x="12" y="8" width="1" height="1" fill="#404040"/><rect x="0" y="9" width="1" height="1" fill="#404040"/><rect x="1" y="9" width="11" height="1" fill="#C8C8C8"/><rect x="12" y="9" width="1" height="1" fill="#404040"/><rect x="0" y="10" width="1" height="1" fill="#404040"/><rect x="1" y="10" width="11" height="1" fill="#C8C8C8"/><rect x="12" y="10" width="1" height="1" fill="#404040"/><rect x="0" y="11" width="1" height="1" fill="#404040"/><rect x="1" y="11" width="11" height="1" fill="#C8C8C8"/><rect x="12" y="11" width="1" height="1" fill="#404040"/><rect x="0" y="12" width="1" height="1" fill="#404040"/><rect x="1" y="12" width="11" height="1" fill="#C8C8C8"/><rect x="12" y="12" width="1" height="1" fill="#404040"/><rect x="0" y="13" width="1" height="1" fill="#404040"/><rect x="1" y="13" width="11" height="1" fill="#C8C8C8"/><rect x="12" y="13" width="1" height="1" fill="#404040"/></svg>
<svg style="position:absolute;left:962px;top:29px" width="16" height="13" viewBox="0 0 16 13" shape-rendering="crispEdges"><rect x="2" y="0" width="1" height="1" fill="#3333A0"/><rect x="7" y="0" width="9" height="1" fill="#404040"/><rect x="1" y="1" width="3" height="1" fill="#3333A0"/><rect x="7" y="1" width="1" height="1" fill="#404040"/><rect x="8" y="1" width="7" height="1" fill="#C8C8C8"/><rect x="15" y="1" width="1" height="1" fill="#404040"/><rect x="0" y="2" width="5" height="1" fill="#3333A0"/><rect x="7" y="2" width="1" height="1" fill="#404040"/><rect x="8" y="2" width="7" height="1" fill="#C8C8C8"/><rect x="15" y="2" width="1" height="1" fill="#404040"/><rect x="2" y="3" width="1" height="1" fill="#3333A0"/><rect x="7" y="3" width="1" height="1" fill="#404040"/><rect x="8" y="3" width="7" height="1" fill="#C8C8C8"/><rect x="15" y="3" width="1" height="1" fill="#404040"/><rect x="2" y="4" width="1" height="1" fill="#3333A0"/><rect x="7" y="4" width="1" height="1" fill="#404040"/><rect x="8" y="4" width="7" height="1" fill="#C8C8C8"/><rect x="15" y="4" width="1" height="1" fill="#404040"/><rect x="2" y="5" width="1" height="1" fill="#3333A0"/><rect x="7" y="5" width="1" height="1" fill="#404040"/><rect x="8" y="5" width="7" height="1" fill="#C8C8C8"/><rect x="15" y="5" width="1" height="1" fill="#404040"/><rect x="2" y="6" width="1" height="1" fill="#3333A0"/><rect x="7" y="6" width="1" height="1" fill="#404040"/><rect x="8" y="6" width="7" height="1" fill="#C8C8C8"/><rect x="15" y="6" width="1" height="1" fill="#404040"/><rect x="2" y="7" width="1" height="1" fill="#3333A0"/><rect x="7" y="7" width="1" height="1" fill="#404040"/><rect x="8" y="7" width="7" height="1" fill="#C8C8C8"/><rect x="15" y="7" width="1" height="1" fill="#404040"/><rect x="2" y="8" width="1" height="1" fill="#3333A0"/><rect x="7" y="8" width="1" height="1" fill="#404040"/><rect x="8" y="8" width="7" height="1" fill="#C8C8C8"/><rect x="15" y="8" width="1" height="1" fill="#404040"/><rect x="2" y="9" width="1" height="1" fill="#3333A0"/><rect x="7" y="9" width="1" height="1" fill="#404040"/><rect x="8" y="9" width="7" height="1" fill="#C8C8C8"/><rect x="15" y="9" width="1" height="1" fill="#404040"/><rect x="0" y="10" width="5" height="1" fill="#3333A0"/><rect x="7" y="10" width="1" height="1" fill="#404040"/><rect x="8" y="10" width="7" height="1" fill="#C8C8C8"/><rect x="15" y="10" width="1" height="1" fill="#404040"/><rect x="1" y="11" width="3" height="1" fill="#3333A0"/><rect x="7" y="11" width="1" height="1" fill="#404040"/><rect x="8" y="11" width="7" height="1" fill="#C8C8C8"/><rect x="15" y="11" width="1" height="1" fill="#404040"/><rect x="2" y="12" width="1" height="1" fill="#3333A0"/><rect x="7" y="12" width="9" height="1" fill="#404040"/></svg>
<svg style="position:absolute;left:985px;top:28px" width="16" height="14" viewBox="0 0 16 14" shape-rendering="crispEdges"><rect x="9" y="0" width="2" height="1" fill="#404040"/><rect x="15" y="0" width="1" height="1" fill="#3333A0"/><rect x="8" y="1" width="1" height="1" fill="#404040"/><rect x="9" y="1" width="2" height="1" fill="#A0A8C0"/><rect x="11" y="1" width="2" height="1" fill="#404040"/><rect x="13" y="1" width="3" height="1" fill="#3333A0"/><rect x="7" y="2" width="1" height="1" fill="#404040"/><rect x="8" y="2" width="1" height="1" fill="#A0A8C0"/><rect x="9" y="2" width="1" height="1" fill="#404040"/><rect x="10" y="2" width="4" height="1" fill="#A0A8C0"/><rect x="14" y="2" width="2" height="1" fill="#3333A0"/><rect x="6" y="3" width="1" height="1" fill="#404040"/><rect x="7" y="3" width="1" height="1" fill="#A0A8C0"/><rect x="8" y="3" width="1" height="1" fill="#404040"/><rect x="9" y="3" width="1" height="1" fill="#A0A8C0"/><rect x="10" y="3" width="1" height="1" fill="#404040"/><rect x="11" y="3" width="4" height="1" fill="#A0A8C0"/><rect x="15" y="3" width="1" height="1" fill="#3333A0"/><rect x="5" y="4" width="1" height="1" fill="#404040"/><rect x="6" y="4" width="1" height="1" fill="#A0A8C0"/><rect x="7" y="4" width="1" height="1" fill="#404040"/><rect x="8" y="4" width="1" height="1" fill="#A0A8C0"/><rect x="9" y="4" width="1" height="1" fill="#404040"/><rect x="10" y="4" width="2" height="1" fill="#A0A8C0"/><rect x="13" y="4" width="3" height="1" fill="#3333A0"/><rect x="0" y="5" width="12" height="1" fill="#404040"/><rect x="0" y="6" width="1" height="1" fill="#404040"/><rect x="1" y="6" width="10" height="1" fill="#FFFFFF"/><rect x="11" y="6" width="1" height="1" fill="#404040"/><rect x="0" y="7" width="1" height="1" fill="#404040"/><rect x="1" y="7" width="1" height="1" fill="#FFFFFF"/><rect x="2" y="7" width="2" height="1" fill="#404040"/><rect x="4" y="7" width="1" height="1" fill="#FFFFFF"/><rect x="5" y="7" width="5" height="1" fill="#404040"/><rect x="10" y="7" width="1" height="1" fill="#FFFFFF"/><rect x="11" y="7" width="1" height="1" fill="#404040"/><rect x="0" y="8" width="1" height="1" fill="#404040"/><rect x="1" y="8" width="10" height="1" fill="#FFFFFF"/><rect x="11" y="8" width="1" height="1" fill="#404040"/><rect x="0" y="9" width="1" height="1" fill="#404040"/><rect x="1" y="9" width="1" height="1" fill="#FFFFFF"/><rect x="2" y="9" width="2" height="1" fill="#404040"/><rect x="4" y="9" width="1" height="1" fill="#FFFFFF"/><rect x="5" y="9" width="5" height="1" fill="#404040"/><rect x="10" y="9" width="1" height="1" fill="#FFFFFF"/><rect x="11" y="9" width="1" height="1" fill="#404040"/><rect x="0" y="10" width="1" height="1" fill="#404040"/><rect x="1" y="10" width="10" height="1" fill="#FFFFFF"/><rect x="11" y="10" width="1" height="1" fill="#404040"/><rect x="0" y="11" width="1" height="1" fill="#404040"/><rect x="1" y="11" width="1" height="1" fill="#FFFFFF"/><rect x="2" y="11" width="2" height="1" fill="#404040"/><rect x="4" y="11" width="1" height="1" fill="#FFFFFF"/><rect x="5" y="11" width="5" height="1" fill="#404040"/><rect x="10" y="11" width="1" height="1" fill="#FFFFFF"/><rect x="11" y="11" width="1" height="1" fill="#404040"/><rect x="0" y="12" width="1" height="1" fill="#404040"/><rect x="1" y="12" width="10" height="1" fill="#FFFFFF"/><rect x="11" y="12" width="1" height="1" fill="#404040"/><rect x="0" y="13" width="12" height="1" fill="#404040"/></svg>
<div style="position:absolute;left:976px;top:57px;width:6px;height:2px;background:#000;"></div>
<svg style="position:absolute;left:991px;top:50px" width="8" height="9" viewBox="0 0 8 9" shape-rendering="crispEdges"><rect x="2" y="0" width="6" height="1" fill="#000"/><rect x="2" y="1" width="6" height="1" fill="#000"/><rect x="2" y="2" width="1" height="1" fill="#000"/><rect x="7" y="2" width="1" height="1" fill="#000"/><rect x="0" y="3" width="6" height="1" fill="#000"/><rect x="7" y="3" width="1" height="1" fill="#000"/><rect x="0" y="4" width="6" height="1" fill="#000"/><rect x="7" y="4" width="1" height="1" fill="#000"/><rect x="0" y="5" width="1" height="1" fill="#000"/><rect x="5" y="5" width="3" height="1" fill="#000"/><rect x="0" y="6" width="1" height="1" fill="#000"/><rect x="5" y="6" width="1" height="1" fill="#000"/><rect x="0" y="7" width="1" height="1" fill="#000"/><rect x="5" y="7" width="1" height="1" fill="#000"/><rect x="0" y="8" width="6" height="1" fill="#000"/></svg>
<svg style="position:absolute;left:1010px;top:51px" width="8" height="7" viewBox="0 0 8 7" shape-rendering="crispEdges"><rect x="0" y="0" width="2" height="1" fill="#000"/><rect x="6" y="0" width="2" height="1" fill="#000"/><rect x="1" y="1" width="2" height="1" fill="#000"/><rect x="5" y="1" width="2" height="1" fill="#000"/><rect x="2" y="2" width="4" height="1" fill="#000"/><rect x="3" y="3" width="2" height="1" fill="#000"/><rect x="2" y="4" width="4" height="1" fill="#000"/><rect x="1" y="5" width="2" height="1" fill="#000"/><rect x="5" y="5" width="2" height="1" fill="#000"/><rect x="0" y="6" width="2" height="1" fill="#000"/><rect x="6" y="6" width="2" height="1" fill="#000"/></svg>
<div style="position:absolute;left:2px;top:65px;width:92px;height:16px;background:#fff;"></div>
<div style="position:absolute;left:2px;top:65px;font-size:13.33px;line-height:16.33px;white-space:nowrap;color:#000;"><div style="width:92px;text-align:center">D13</div></div>
<svg style="position:absolute;left:101px;top:72px" width="7" height="4" viewBox="0 0 7 4" shape-rendering="crispEdges"><path d="M0 0h7l-3.5 4z" fill="#000"/></svg>
<div style="position:absolute;left:169px;top:65px;width:855px;height:16px;background:#fff;"></div>
<div style="position:absolute;left:175px;top:65px;font-size:13.33px;line-height:16.33px;white-space:nowrap;color:#000;">0</div><div style="position:absolute;left:28px;top:101px;width:978px;height:603px;overflow:hidden;background:#fff">
<div style="position:absolute;left:79px;top:0px;width:1px;height:603px;background:#C0C0C0;"></div>
<div style="position:absolute;left:159px;top:0px;width:1px;height:603px;background:#C0C0C0;"></div>
<div style="position:absolute;left:239px;top:0px;width:1px;height:603px;background:#C0C0C0;"></div>
<div style="position:absolute;left:319px;top:0px;width:1px;height:603px;background:#C0C0C0;"></div>
<div style="position:absolute;left:399px;top:0px;width:1px;height:603px;background:#C0C0C0;"></div>
<div style="position:absolute;left:479px;top:0px;width:1px;height:603px;background:#C0C0C0;"></div>
<div style="position:absolute;left:559px;top:0px;width:1px;height:603px;background:#C0C0C0;"></div>
<div style="position:absolute;left:639px;top:0px;width:1px;height:603px;background:#C0C0C0;"></div>
<div style="position:absolute;left:719px;top:0px;width:1px;height:603px;background:#C0C0C0;"></div>
<div style="position:absolute;left:799px;top:0px;width:1px;height:603px;background:#C0C0C0;"></div>
<div style="position:absolute;left:879px;top:0px;width:1px;height:603px;background:#C0C0C0;"></div>
<div style="position:absolute;left:959px;top:0px;width:1px;height:603px;background:#C0C0C0;"></div>
<div style="position:absolute;left:1039px;top:0px;width:1px;height:603px;background:#C0C0C0;"></div>
<div style="position:absolute;left:0px;top:16px;width:978px;height:1px;background:#C0C0C0;"></div>
<div style="position:absolute;left:0px;top:34px;width:978px;height:1px;background:#C0C0C0;"></div>
<div style="position:absolute;left:0px;top:52px;width:978px;height:1px;background:#C0C0C0;"></div>
<div style="position:absolute;left:0px;top:70px;width:978px;height:1px;background:#C0C0C0;"></div>
<div style="position:absolute;left:0px;top:90px;width:978px;height:1px;background:#C0C0C0;"></div>
<div style="position:absolute;left:0px;top:107px;width:978px;height:1px;background:#C0C0C0;"></div>
<div style="position:absolute;left:0px;top:124px;width:978px;height:1px;background:#C0C0C0;"></div>
<div style="position:absolute;left:0px;top:142px;width:978px;height:1px;background:#C0C0C0;"></div>
<div style="position:absolute;left:0px;top:160px;width:978px;height:1px;background:#C0C0C0;"></div>
<div style="position:absolute;left:0px;top:178px;width:978px;height:1px;background:#C0C0C0;"></div>
<div style="position:absolute;left:0px;top:195px;width:978px;height:1px;background:#C0C0C0;"></div>
<div style="position:absolute;left:0px;top:215px;width:978px;height:1px;background:#C0C0C0;"></div>
<div style="position:absolute;left:0px;top:232px;width:978px;height:1px;background:#C0C0C0;"></div>
<div style="position:absolute;left:0px;top:249px;width:978px;height:1px;background:#C0C0C0;"></div>
<div style="position:absolute;left:0px;top:266px;width:978px;height:1px;background:#C0C0C0;"></div>
<div style="position:absolute;left:0px;top:283px;width:978px;height:1px;background:#C0C0C0;"></div>
<div style="position:absolute;left:0px;top:300px;width:978px;height:1px;background:#C0C0C0;"></div>
<div style="position:absolute;left:0px;top:317px;width:978px;height:1px;background:#C0C0C0;"></div>
<div style="position:absolute;left:0px;top:334px;width:978px;height:1px;background:#C0C0C0;"></div>
<div style="position:absolute;left:0px;top:351px;width:978px;height:1px;background:#C0C0C0;"></div>
<div style="position:absolute;left:0px;top:368px;width:978px;height:1px;background:#C0C0C0;"></div>
<div style="position:absolute;left:0px;top:385px;width:978px;height:1px;background:#C0C0C0;"></div>
<div style="position:absolute;left:0px;top:402px;width:978px;height:1px;background:#C0C0C0;"></div>
<div style="position:absolute;left:0px;top:419px;width:978px;height:1px;background:#C0C0C0;"></div>
<div style="position:absolute;left:0px;top:436px;width:978px;height:1px;background:#C0C0C0;"></div>
<div style="position:absolute;left:0px;top:453px;width:978px;height:1px;background:#C0C0C0;"></div>
<div style="position:absolute;left:0px;top:470px;width:978px;height:1px;background:#C0C0C0;"></div>
<div style="position:absolute;left:0px;top:487px;width:978px;height:1px;background:#C0C0C0;"></div>
<div style="position:absolute;left:0px;top:505px;width:978px;height:1px;background:#C0C0C0;"></div>
<div style="position:absolute;left:0px;top:522px;width:978px;height:1px;background:#C0C0C0;"></div>
<div style="position:absolute;left:0px;top:539px;width:978px;height:1px;background:#C0C0C0;"></div>
<div style="position:absolute;left:0px;top:556px;width:978px;height:1px;background:#C0C0C0;"></div>
<div style="position:absolute;left:0px;top:573px;width:978px;height:1px;background:#C0C0C0;"></div>
<div style="position:absolute;left:0px;top:590px;width:978px;height:1px;background:#C0C0C0;"></div>
<div style="position:absolute;left:0px;top:607px;width:978px;height:1px;background:#C0C0C0;"></div>
<div style="position:absolute;left:0px;top:71px;width:80px;height:20px;background:#FFCC99;"></div>
<div style="position:absolute;left:0px;top:91px;width:80px;height:17px;background:#FFCC99;"></div>
<div style="position:absolute;left:0px;top:108px;width:80px;height:17px;background:#FFCC99;"></div>
<div style="position:absolute;left:80px;top:71px;width:80px;height:20px;background:#FFCC99;"></div>
<div style="position:absolute;left:80px;top:91px;width:80px;height:17px;background:#FFCC99;"></div>
<div style="position:absolute;left:80px;top:108px;width:80px;height:17px;background:#FFCC99;"></div>
<div style="position:absolute;left:160px;top:71px;width:80px;height:20px;background:#FFCC99;"></div>
<div style="position:absolute;left:160px;top:91px;width:80px;height:17px;background:#FFCC99;"></div>
<div style="position:absolute;left:160px;top:108px;width:80px;height:17px;background:#FFCC99;"></div>
<div style="position:absolute;left:240px;top:71px;width:80px;height:20px;background:#CCFFCC;"></div>
<div style="position:absolute;left:240px;top:91px;width:80px;height:17px;background:#CCFFCC;"></div>
<div style="position:absolute;left:240px;top:108px;width:80px;height:17px;background:#CCFFCC;"></div>
<div style="position:absolute;left:320px;top:71px;width:80px;height:20px;background:#FFCC99;"></div>
<div style="position:absolute;left:320px;top:91px;width:80px;height:17px;background:#FFCC99;"></div>
<div style="position:absolute;left:320px;top:108px;width:80px;height:17px;background:#FFCC99;"></div>
<div style="position:absolute;left:400px;top:71px;width:80px;height:20px;background:#FFCC99;"></div>
<div style="position:absolute;left:400px;top:91px;width:80px;height:17px;background:#FFCC99;"></div>
<div style="position:absolute;left:400px;top:108px;width:80px;height:17px;background:#FFCC99;"></div>
<div style="position:absolute;left:0px;top:143px;width:80px;height:18px;background:#CCFFCC;"></div>
<div style="position:absolute;left:0px;top:161px;width:80px;height:18px;background:#CCFFCC;"></div>
<div style="position:absolute;left:80px;top:143px;width:80px;height:18px;background:#CCFFCC;"></div>
<div style="position:absolute;left:80px;top:161px;width:80px;height:18px;background:#CCFFCC;"></div>
<div style="position:absolute;left:160px;top:143px;width:80px;height:18px;background:#FFCC99;"></div>
<div style="position:absolute;left:160px;top:161px;width:80px;height:18px;background:#FFCC99;"></div>
<div style="position:absolute;left:240px;top:143px;width:80px;height:18px;background:#FFCC99;"></div>
<div style="position:absolute;left:240px;top:161px;width:80px;height:18px;background:#FFCC99;"></div>
<div style="position:absolute;left:320px;top:143px;width:80px;height:18px;background:#FFCC99;"></div>
<div style="position:absolute;left:320px;top:161px;width:80px;height:18px;background:#FFCC99;"></div>
<div style="position:absolute;left:400px;top:143px;width:80px;height:18px;background:#CCFFCC;"></div>
<div style="position:absolute;left:400px;top:161px;width:80px;height:18px;background:#CCFFCC;"></div>
<div style="position:absolute;left:0px;top:179px;width:80px;height:17px;background:#CCFFFF;"></div>
<div style="position:absolute;left:80px;top:179px;width:80px;height:17px;background:#CCFFFF;"></div>
<div style="position:absolute;left:160px;top:179px;width:80px;height:17px;background:#CCFFFF;"></div>
<div style="position:absolute;left:0px;top:196px;width:80px;height:20px;background:#CCFFFF;"></div>
<div style="position:absolute;left:80px;top:196px;width:80px;height:20px;background:#CCFFFF;"></div>
<div style="position:absolute;left:160px;top:196px;width:80px;height:20px;background:#CCFFFF;"></div>
<div style="position:absolute;left:0px;top:216px;width:80px;height:17px;background:#CCFFFF;"></div>
<div style="position:absolute;left:80px;top:216px;width:80px;height:17px;background:#CCFFFF;"></div>
<div style="position:absolute;left:160px;top:216px;width:80px;height:17px;background:#CCFFFF;"></div>
<div style="position:absolute;left:0px;top:233px;width:80px;height:17px;background:#CCFFFF;"></div>
<div style="position:absolute;left:80px;top:233px;width:80px;height:17px;background:#CCFFFF;"></div>
<div style="position:absolute;left:160px;top:233px;width:80px;height:17px;background:#CCFFFF;"></div>
<div style="position:absolute;left:0px;top:250px;width:80px;height:17px;background:#CCFFFF;"></div>
<div style="position:absolute;left:80px;top:250px;width:80px;height:17px;background:#CCFFFF;"></div>
<div style="position:absolute;left:160px;top:250px;width:80px;height:17px;background:#CCFFFF;"></div>
<div style="position:absolute;left:0px;top:267px;width:80px;height:17px;background:#CCFFFF;"></div>
<div style="position:absolute;left:80px;top:267px;width:80px;height:17px;background:#CCFFFF;"></div>
<div style="position:absolute;left:160px;top:267px;width:80px;height:17px;background:#CCFFFF;"></div>
<div style="position:absolute;left:0px;top:284px;width:80px;height:17px;background:#CCFFFF;"></div>
<div style="position:absolute;left:80px;top:284px;width:80px;height:17px;background:#CCFFFF;"></div>
<div style="position:absolute;left:160px;top:284px;width:80px;height:17px;background:#CCFFFF;"></div>
<div style="position:absolute;left:0px;top:301px;width:80px;height:17px;background:#CCFFFF;"></div>
<div style="position:absolute;left:80px;top:301px;width:80px;height:17px;background:#CCFFFF;"></div>
<div style="position:absolute;left:160px;top:301px;width:80px;height:17px;background:#CCFFFF;"></div>
<div style="position:absolute;left:0px;top:318px;width:80px;height:17px;background:#CCFFFF;"></div>
<div style="position:absolute;left:80px;top:318px;width:80px;height:17px;background:#CCFFFF;"></div>
<div style="position:absolute;left:160px;top:318px;width:80px;height:17px;background:#CCFFFF;"></div>
<div style="position:absolute;left:0px;top:335px;width:80px;height:17px;background:#CCFFFF;"></div>
<div style="position:absolute;left:80px;top:335px;width:80px;height:17px;background:#CCFFFF;"></div>
<div style="position:absolute;left:160px;top:335px;width:80px;height:17px;background:#CCFFFF;"></div>
<div style="position:absolute;left:0px;top:352px;width:80px;height:17px;background:#CCFFFF;"></div>
<div style="position:absolute;left:80px;top:352px;width:80px;height:17px;background:#CCFFFF;"></div>
<div style="position:absolute;left:160px;top:352px;width:80px;height:17px;background:#CCFFFF;"></div>
<div style="position:absolute;left:0px;top:369px;width:80px;height:17px;background:#CCFFFF;"></div>
<div style="position:absolute;left:80px;top:369px;width:80px;height:17px;background:#CCFFFF;"></div>
<div style="position:absolute;left:160px;top:369px;width:80px;height:17px;background:#CCFFFF;"></div>
<div style="position:absolute;left:0px;top:386px;width:80px;height:17px;background:#CCFFFF;"></div>
<div style="position:absolute;left:80px;top:386px;width:80px;height:17px;background:#CCFFFF;"></div>
<div style="position:absolute;left:160px;top:386px;width:80px;height:17px;background:#CCFFFF;"></div>
<div style="position:absolute;left:0px;top:403px;width:80px;height:17px;background:#CCFFFF;"></div>
<div style="position:absolute;left:80px;top:403px;width:80px;height:17px;background:#CCFFFF;"></div>
<div style="position:absolute;left:160px;top:403px;width:80px;height:17px;background:#CCFFFF;"></div>
<div style="position:absolute;left:0px;top:420px;width:80px;height:17px;background:#CCFFFF;"></div>
<div style="position:absolute;left:80px;top:420px;width:80px;height:17px;background:#CCFFFF;"></div>
<div style="position:absolute;left:160px;top:420px;width:80px;height:17px;background:#CCFFFF;"></div>
<div style="position:absolute;left:0px;top:437px;width:80px;height:17px;background:#CCFFFF;"></div>
<div style="position:absolute;left:80px;top:437px;width:80px;height:17px;background:#CCFFFF;"></div>
<div style="position:absolute;left:160px;top:437px;width:80px;height:17px;background:#CCFFFF;"></div>
<div style="position:absolute;left:0px;top:454px;width:80px;height:17px;background:#CCFFFF;"></div>
<div style="position:absolute;left:80px;top:454px;width:80px;height:17px;background:#CCFFFF;"></div>
<div style="position:absolute;left:160px;top:454px;width:80px;height:17px;background:#CCFFFF;"></div>
<div style="position:absolute;left:0px;top:471px;width:80px;height:17px;background:#CCFFFF;"></div>
<div style="position:absolute;left:80px;top:471px;width:80px;height:17px;background:#CCFFFF;"></div>
<div style="position:absolute;left:160px;top:471px;width:80px;height:17px;background:#CCFFFF;"></div>
<div style="position:absolute;left:0px;top:488px;width:80px;height:18px;background:#CCFFFF;"></div>
<div style="position:absolute;left:80px;top:488px;width:80px;height:18px;background:#CCFFFF;"></div>
<div style="position:absolute;left:160px;top:488px;width:80px;height:18px;background:#CCFFFF;"></div>
<div style="position:absolute;left:0px;top:506px;width:80px;height:17px;background:#CCFFFF;"></div>
<div style="position:absolute;left:80px;top:506px;width:80px;height:17px;background:#CCFFFF;"></div>
<div style="position:absolute;left:160px;top:506px;width:80px;height:17px;background:#CCFFFF;"></div>
<div style="position:absolute;left:0px;top:523px;width:80px;height:17px;background:#CCFFFF;"></div>
<div style="position:absolute;left:80px;top:523px;width:80px;height:17px;background:#CCFFFF;"></div>
<div style="position:absolute;left:160px;top:523px;width:80px;height:17px;background:#CCFFFF;"></div>
<div style="position:absolute;left:0px;top:540px;width:80px;height:17px;background:#CCFFFF;"></div>
<div style="position:absolute;left:80px;top:540px;width:80px;height:17px;background:#CCFFFF;"></div>
<div style="position:absolute;left:160px;top:540px;width:80px;height:17px;background:#CCFFFF;"></div>
<div style="position:absolute;left:0px;top:557px;width:80px;height:17px;background:#CCFFFF;"></div>
<div style="position:absolute;left:80px;top:557px;width:80px;height:17px;background:#CCFFFF;"></div>
<div style="position:absolute;left:160px;top:557px;width:80px;height:17px;background:#CCFFFF;"></div>
<div style="position:absolute;left:0px;top:574px;width:80px;height:17px;background:#CCFFFF;"></div>
<div style="position:absolute;left:80px;top:574px;width:80px;height:17px;background:#CCFFFF;"></div>
<div style="position:absolute;left:160px;top:574px;width:80px;height:17px;background:#CCFFFF;"></div>
<div style="position:absolute;left:0px;top:591px;width:80px;height:17px;background:#CCFFFF;"></div>
<div style="position:absolute;left:80px;top:591px;width:80px;height:17px;background:#CCFFFF;"></div>
<div style="position:absolute;left:160px;top:591px;width:80px;height:17px;background:#CCFFFF;"></div>
<div style="position:absolute;left:240px;top:179px;width:80px;height:17px;background:#CCFFCC;"></div>
<div style="position:absolute;left:320px;top:179px;width:80px;height:17px;background:#CCFFCC;"></div>
<div style="position:absolute;left:400px;top:179px;width:80px;height:17px;background:#CCFFCC;"></div>
<div style="position:absolute;left:240px;top:196px;width:80px;height:20px;background:#CCFFCC;"></div>
<div style="position:absolute;left:320px;top:196px;width:80px;height:20px;background:#CCFFCC;"></div>
<div style="position:absolute;left:400px;top:196px;width:80px;height:20px;background:#CCFFCC;"></div>
<div style="position:absolute;left:240px;top:216px;width:80px;height:17px;background:#CCFFCC;"></div>
<div style="position:absolute;left:320px;top:216px;width:80px;height:17px;background:#CCFFCC;"></div>
<div style="position:absolute;left:400px;top:216px;width:80px;height:17px;background:#CCFFCC;"></div>
<div style="position:absolute;left:240px;top:233px;width:80px;height:17px;background:#99C9C6;"></div>
<div style="position:absolute;left:320px;top:233px;width:80px;height:17px;background:#CCFFCC;"></div>
<div style="position:absolute;left:400px;top:233px;width:80px;height:17px;background:#CCFFCC;"></div>
<div style="position:absolute;left:240px;top:250px;width:80px;height:17px;background:#99C9C6;"></div>
<div style="position:absolute;left:320px;top:250px;width:80px;height:17px;background:#CCFFCC;"></div>
<div style="position:absolute;left:400px;top:250px;width:80px;height:17px;background:#CCFFCC;"></div>
<div style="position:absolute;left:240px;top:267px;width:80px;height:17px;background:#99C9C6;"></div>
<div style="position:absolute;left:320px;top:267px;width:80px;height:17px;background:#CCFFCC;"></div>
<div style="position:absolute;left:400px;top:267px;width:80px;height:17px;background:#CCFFCC;"></div>
<div style="position:absolute;left:240px;top:284px;width:80px;height:17px;background:#99C9C6;"></div>
<div style="position:absolute;left:320px;top:284px;width:80px;height:17px;background:#CCFFCC;"></div>
<div style="position:absolute;left:400px;top:284px;width:80px;height:17px;background:#CCFFCC;"></div>
<div style="position:absolute;left:240px;top:301px;width:80px;height:17px;background:#99C9C6;"></div>
<div style="position:absolute;left:320px;top:301px;width:80px;height:17px;background:#CCFFCC;"></div>
<div style="position:absolute;left:400px;top:301px;width:80px;height:17px;background:#CCFFCC;"></div>
<div style="position:absolute;left:240px;top:318px;width:80px;height:17px;background:#99C9C6;"></div>
<div style="position:absolute;left:320px;top:318px;width:80px;height:17px;background:#CCFFCC;"></div>
<div style="position:absolute;left:400px;top:318px;width:80px;height:17px;background:#CCFFCC;"></div>
<div style="position:absolute;left:240px;top:335px;width:80px;height:17px;background:#99C9C6;"></div>
<div style="position:absolute;left:320px;top:335px;width:80px;height:17px;background:#CCFFCC;"></div>
<div style="position:absolute;left:400px;top:335px;width:80px;height:17px;background:#CCFFCC;"></div>
<div style="position:absolute;left:240px;top:352px;width:80px;height:17px;background:#99C9C6;"></div>
<div style="position:absolute;left:320px;top:352px;width:80px;height:17px;background:#CCFFCC;"></div>
<div style="position:absolute;left:400px;top:352px;width:80px;height:17px;background:#CCFFCC;"></div>
<div style="position:absolute;left:240px;top:369px;width:80px;height:17px;background:#99C9C6;"></div>
<div style="position:absolute;left:320px;top:369px;width:80px;height:17px;background:#CCFFCC;"></div>
<div style="position:absolute;left:400px;top:369px;width:80px;height:17px;background:#CCFFCC;"></div>
<div style="position:absolute;left:240px;top:386px;width:80px;height:17px;background:#99C9C6;"></div>
<div style="position:absolute;left:320px;top:386px;width:80px;height:17px;background:#CCFFCC;"></div>
<div style="position:absolute;left:400px;top:386px;width:80px;height:17px;background:#CCFFCC;"></div>
<div style="position:absolute;left:240px;top:403px;width:80px;height:17px;background:#99C9C6;"></div>
<div style="position:absolute;left:320px;top:403px;width:80px;height:17px;background:#CCFFCC;"></div>
<div style="position:absolute;left:400px;top:403px;width:80px;height:17px;background:#CCFFCC;"></div>
<div style="position:absolute;left:240px;top:420px;width:80px;height:17px;background:#99C9C6;"></div>
<div style="position:absolute;left:320px;top:420px;width:80px;height:17px;background:#CCFFCC;"></div>
<div style="position:absolute;left:400px;top:420px;width:80px;height:17px;background:#CCFFCC;"></div>
<div style="position:absolute;left:240px;top:437px;width:80px;height:17px;background:#99C9C6;"></div>
<div style="position:absolute;left:320px;top:437px;width:80px;height:17px;background:#CCFFCC;"></div>
<div style="position:absolute;left:400px;top:437px;width:80px;height:17px;background:#CCFFCC;"></div>
<div style="position:absolute;left:240px;top:454px;width:80px;height:17px;background:#99C9C6;"></div>
<div style="position:absolute;left:320px;top:454px;width:80px;height:17px;background:#CCFFCC;"></div>
<div style="position:absolute;left:400px;top:454px;width:80px;height:17px;background:#CCFFCC;"></div>
<div style="position:absolute;left:240px;top:471px;width:80px;height:17px;background:#99C9C6;"></div>
<div style="position:absolute;left:320px;top:471px;width:80px;height:17px;background:#CCFFCC;"></div>
<div style="position:absolute;left:400px;top:471px;width:80px;height:17px;background:#CCFFCC;"></div>
<div style="position:absolute;left:240px;top:488px;width:80px;height:18px;background:#99C9C6;"></div>
<div style="position:absolute;left:320px;top:488px;width:80px;height:18px;background:#CCFFCC;"></div>
<div style="position:absolute;left:400px;top:488px;width:80px;height:18px;background:#CCFFCC;"></div>
<div style="position:absolute;left:480px;top:17px;width:80px;height:18px;background:#CCFFCC;"></div>
<div style="position:absolute;left:-1px;top:33px;width:321px;height:2px;background:#000;"></div>
<div style="position:absolute;left:-1px;top:51px;width:321px;height:2px;background:#000;"></div>
<div style="position:absolute;left:318px;top:34px;width:2px;height:19px;background:#000;"></div>
<div style="position:absolute;left:-1px;top:69px;width:481px;height:2px;background:#000;"></div>
<div style="position:absolute;left:-1px;top:89px;width:481px;height:2px;background:#000;"></div>
<div style="position:absolute;left:-1px;top:107px;width:481px;height:1px;background:#000;"></div>
<div style="position:absolute;left:-1px;top:124px;width:481px;height:1px;background:#000;"></div>
<div style="position:absolute;left:-1px;top:141px;width:481px;height:2px;background:#000;"></div>
<div style="position:absolute;left:-1px;top:159px;width:481px;height:2px;background:#000;"></div>
<div style="position:absolute;left:-1px;top:177px;width:481px;height:2px;background:#000;"></div>
<div style="position:absolute;left:79px;top:70px;width:1px;height:109px;background:#000;"></div>
<div style="position:absolute;left:159px;top:70px;width:1px;height:109px;background:#000;"></div>
<div style="position:absolute;left:239px;top:70px;width:1px;height:109px;background:#000;"></div>
<div style="position:absolute;left:319px;top:70px;width:1px;height:109px;background:#000;"></div>
<div style="position:absolute;left:399px;top:70px;width:1px;height:109px;background:#000;"></div>
<div style="position:absolute;left:478px;top:70px;width:2px;height:109px;background:#000;"></div>
<div style="position:absolute;left:-1px;top:195px;width:481px;height:1px;background:#000;"></div>
<div style="position:absolute;left:-1px;top:215px;width:481px;height:1px;background:#000;"></div>
<div style="position:absolute;left:-1px;top:232px;width:481px;height:1px;background:#000;"></div>
<div style="position:absolute;left:-1px;top:249px;width:481px;height:1px;background:#000;"></div>
<div style="position:absolute;left:-1px;top:266px;width:481px;height:1px;background:#000;"></div>
<div style="position:absolute;left:-1px;top:283px;width:481px;height:1px;background:#000;"></div>
<div style="position:absolute;left:-1px;top:300px;width:481px;height:1px;background:#000;"></div>
<div style="position:absolute;left:-1px;top:317px;width:481px;height:1px;background:#000;"></div>
<div style="position:absolute;left:-1px;top:334px;width:481px;height:1px;background:#000;"></div>
<div style="position:absolute;left:-1px;top:351px;width:481px;height:1px;background:#000;"></div>
<div style="position:absolute;left:-1px;top:368px;width:481px;height:1px;background:#000;"></div>
<div style="position:absolute;left:-1px;top:385px;width:481px;height:1px;background:#000;"></div>
<div style="position:absolute;left:-1px;top:402px;width:481px;height:1px;background:#000;"></div>
<div style="position:absolute;left:-1px;top:419px;width:481px;height:1px;background:#000;"></div>
<div style="position:absolute;left:-1px;top:436px;width:481px;height:1px;background:#000;"></div>
<div style="position:absolute;left:-1px;top:453px;width:481px;height:1px;background:#000;"></div>
<div style="position:absolute;left:-1px;top:470px;width:481px;height:1px;background:#000;"></div>
<div style="position:absolute;left:-1px;top:487px;width:481px;height:1px;background:#000;"></div>
<div style="position:absolute;left:-1px;top:505px;width:481px;height:1px;background:#000;"></div>
<div style="position:absolute;left:-1px;top:522px;width:241px;height:1px;background:#000;"></div>
<div style="position:absolute;left:-1px;top:539px;width:241px;height:1px;background:#000;"></div>
<div style="position:absolute;left:-1px;top:556px;width:241px;height:1px;background:#000;"></div>
<div style="position:absolute;left:-1px;top:573px;width:241px;height:1px;background:#000;"></div>
<div style="position:absolute;left:-1px;top:590px;width:241px;height:1px;background:#000;"></div>
<div style="position:absolute;left:-1px;top:607px;width:241px;height:1px;background:#000;"></div>
<div style="position:absolute;left:79px;top:195px;width:1px;height:413px;background:#000;"></div>
<div style="position:absolute;left:159px;top:195px;width:1px;height:413px;background:#000;"></div>
<div style="position:absolute;left:239px;top:178px;width:1px;height:430px;background:#000;"></div>
<div style="position:absolute;left:319px;top:195px;width:1px;height:311px;background:#000;"></div>
<div style="position:absolute;left:399px;top:195px;width:1px;height:311px;background:#000;"></div>
<div style="position:absolute;left:479px;top:178px;width:1px;height:328px;background:#000;"></div>
<div style="position:absolute;left:238px;top:214px;width:83px;height:1px;background:#000;"></div>
<div style="position:absolute;left:238px;top:506px;width:83px;height:1px;background:#000;"></div>
<div style="position:absolute;left:238px;top:214px;width:1px;height:293px;background:#000;"></div>
<div style="position:absolute;left:320px;top:214px;width:1px;height:293px;background:#000;"></div>
<div style="position:absolute;left:239px;top:215px;width:81px;height:1px;background:#fff;"></div>
<div style="position:absolute;left:239px;top:505px;width:81px;height:1px;background:#fff;"></div>
<div style="position:absolute;left:239px;top:215px;width:1px;height:291px;background:#fff;"></div>
<div style="position:absolute;left:319px;top:215px;width:1px;height:291px;background:#fff;"></div>
<div style="position:absolute;left:240px;top:216px;width:79px;height:1px;background:#000;"></div>
<div style="position:absolute;left:240px;top:504px;width:79px;height:1px;background:#000;"></div>
<div style="position:absolute;left:240px;top:216px;width:1px;height:289px;background:#000;"></div>
<div style="position:absolute;left:318px;top:216px;width:1px;height:289px;background:#000;"></div>
<div style="position:absolute;left:317px;top:503px;width:5px;height:5px;background:#000;border:1px solid #fff;box-sizing:border-box;"></div>
<div style="position:absolute;top:36px;height:15px;line-height:15px;white-space:nowrap;color:#000;transform:scaleY(1.07);transform-origin:0 12px;font-weight:bold;left:2px;">chute d'une bille dans un liquide visqueux</div>
<div style="position:absolute;top:73px;height:15px;line-height:15px;white-space:nowrap;color:#000;transform:scaleY(1.07);transform-origin:0 12px;font-weight:bold;left:0px;width:79px;text-align:center;">m</div>
<div style="position:absolute;top:73px;height:15px;line-height:15px;white-space:nowrap;color:#000;transform:scaleY(1.07);transform-origin:0 12px;font-weight:bold;left:80px;width:79px;text-align:center;">d</div>
<div style="position:absolute;top:73px;height:15px;line-height:15px;white-space:nowrap;color:#000;transform:scaleY(1.07);transform-origin:0 12px;font-weight:bold;left:160px;width:79px;text-align:center;">&#951;</div>
<div style="position:absolute;top:73px;height:15px;line-height:15px;white-space:nowrap;color:#000;transform:scaleY(1.07);transform-origin:0 12px;font-weight:bold;left:240px;width:79px;text-align:center;">k</div>
<div style="position:absolute;top:73px;height:15px;line-height:15px;white-space:nowrap;color:#000;transform:scaleY(1.07);transform-origin:0 12px;font-weight:bold;left:320px;width:79px;text-align:center;">&#961;</div>
<div style="position:absolute;top:73px;height:15px;line-height:15px;white-space:nowrap;color:#000;transform:scaleY(1.07);transform-origin:0 12px;font-weight:bold;left:400px;width:79px;text-align:center;">&#961;<span style="font-size:9px;font-weight:normal">0</span></div>
<div style="position:absolute;top:92px;height:15px;line-height:15px;white-space:nowrap;color:#000;transform:scaleY(1.07);transform-origin:0 12px;right:901px;">6,9</div>
<div style="position:absolute;top:92px;height:15px;line-height:15px;white-space:nowrap;color:#000;transform:scaleY(1.07);transform-origin:0 12px;right:821px;">1,18E+01</div>
<div style="position:absolute;top:92px;height:15px;line-height:15px;white-space:nowrap;color:#000;transform:scaleY(1.07);transform-origin:0 12px;right:741px;">0,6</div>
<div style="position:absolute;top:92px;height:15px;line-height:15px;white-space:nowrap;color:#000;transform:scaleY(1.07);transform-origin:0 12px;right:661px;">6,67E-02</div>
<div style="position:absolute;top:92px;height:15px;line-height:15px;white-space:nowrap;color:#000;transform:scaleY(1.07);transform-origin:0 12px;right:581px;">7800</div>
<div style="position:absolute;top:92px;height:15px;line-height:15px;white-space:nowrap;color:#000;transform:scaleY(1.07);transform-origin:0 12px;right:501px;">1070</div>
<div style="position:absolute;top:109px;height:15px;line-height:15px;white-space:nowrap;color:#000;transform:scaleY(1.07);transform-origin:0 12px;font-weight:bold;left:0px;width:79px;text-align:center;">g</div>
<div style="position:absolute;top:109px;height:15px;line-height:15px;white-space:nowrap;color:#000;transform:scaleY(1.07);transform-origin:0 12px;font-weight:bold;left:80px;width:79px;text-align:center;">mm</div>
<div style="position:absolute;top:109px;height:15px;line-height:15px;white-space:nowrap;color:#000;transform:scaleY(1.07);transform-origin:0 12px;font-weight:bold;left:160px;width:79px;text-align:center;">SI</div>
<div style="position:absolute;top:109px;height:15px;line-height:15px;white-space:nowrap;color:#000;transform:scaleY(1.07);transform-origin:0 12px;font-weight:bold;left:240px;width:79px;text-align:center;">SI</div>
<div style="position:absolute;top:109px;height:15px;line-height:15px;white-space:nowrap;color:#000;transform:scaleY(1.07);transform-origin:0 12px;font-weight:bold;left:320px;width:79px;text-align:center;">kg,m-3</div>
<div style="position:absolute;top:109px;height:15px;line-height:15px;white-space:nowrap;color:#000;transform:scaleY(1.07);transform-origin:0 12px;font-weight:bold;left:400px;width:79px;text-align:center;">kg,m-3</div>
<div style="position:absolute;top:144px;height:15px;line-height:15px;white-space:nowrap;color:#000;transform:scaleY(1.07);transform-origin:0 12px;font-weight:bold;left:0px;width:79px;text-align:center;">A</div>
<div style="position:absolute;top:144px;height:15px;line-height:15px;white-space:nowrap;color:#000;transform:scaleY(1.07);transform-origin:0 12px;font-weight:bold;left:80px;width:79px;text-align:center;">B</div>
<div style="position:absolute;top:144px;height:15px;line-height:15px;white-space:nowrap;color:#000;transform:scaleY(1.07);transform-origin:0 12px;font-weight:bold;left:160px;width:79px;text-align:center;">t(0) en s</div>
<div style="position:absolute;top:144px;height:15px;line-height:15px;white-space:nowrap;color:#000;transform:scaleY(1.07);transform-origin:0 12px;font-weight:bold;left:240px;width:79px;text-align:center;">y(0) en m</div>
<div style="position:absolute;top:144px;height:15px;line-height:15px;white-space:nowrap;color:#000;transform:scaleY(1.07);transform-origin:0 12px;font-weight:bold;left:320px;width:79px;text-align:center;">v(0) m,s-1</div>
<div style="position:absolute;top:144px;height:15px;line-height:15px;white-space:nowrap;color:#000;transform:scaleY(1.07);transform-origin:0 12px;font-weight:bold;left:400px;width:79px;text-align:center;">dt(s)</div>
<div style="position:absolute;top:162px;height:15px;line-height:15px;white-space:nowrap;color:#000;transform:scaleY(1.07);transform-origin:0 12px;right:901px;">8,45564103</div>
<div style="position:absolute;top:162px;height:15px;line-height:15px;white-space:nowrap;color:#000;transform:scaleY(1.07);transform-origin:0 12px;right:821px;">-9,67E+00</div>
<div style="position:absolute;top:162px;height:15px;line-height:15px;white-space:nowrap;color:#000;transform:scaleY(1.07);transform-origin:0 12px;right:741px;">0</div>
<div style="position:absolute;top:162px;height:15px;line-height:15px;white-space:nowrap;color:#000;transform:scaleY(1.07);transform-origin:0 12px;right:661px;">0</div>
<div style="position:absolute;top:162px;height:15px;line-height:15px;white-space:nowrap;color:#000;transform:scaleY(1.07);transform-origin:0 12px;right:581px;">0</div>
<div style="position:absolute;top:162px;height:15px;line-height:15px;white-space:nowrap;color:#000;transform:scaleY(1.07);transform-origin:0 12px;right:501px;">0,002</div>
<div style="position:absolute;top:180px;height:15px;line-height:15px;white-space:nowrap;color:#000;transform:scaleY(1.07);transform-origin:0 12px;font-weight:bold;left:2px;">itt&eacute;ration par m&eacute;thode d'euler</div>
<div style="position:absolute;top:180px;height:15px;line-height:15px;white-space:nowrap;color:#FF00FF;transform:scaleY(1.07);transform-origin:0 12px;left:240px;width:239px;text-align:center;">valeurs exp&eacute;rimentales</div>
<div style="position:absolute;top:199px;height:15px;line-height:15px;white-space:nowrap;color:#000;transform:scaleY(1.07);transform-origin:0 12px;font-weight:bold;left:0px;width:79px;text-align:center;">t(s)</div>
<div style="position:absolute;top:199px;height:15px;line-height:15px;white-space:nowrap;color:#000;transform:scaleY(1.07);transform-origin:0 12px;font-weight:bold;left:80px;width:79px;text-align:center;">v<span style="font-size:10px;position:relative;top:2px">euler</span>(m,s-1)</div>
<div style="position:absolute;top:199px;height:15px;line-height:15px;white-space:nowrap;color:#000;transform:scaleY(1.07);transform-origin:0 12px;font-weight:bold;left:160px;width:79px;text-align:center;">dv/dt(m,s<span style="font-size:10px;position:relative;top:-4px">-2</span>)</div>
<div style="position:absolute;top:199px;height:15px;line-height:15px;white-space:nowrap;color:#FF00FF;transform:scaleY(1.07);transform-origin:0 12px;font-weight:bold;left:240px;width:79px;text-align:center;">y<span style="font-size:10px;position:relative;top:2px">exp</span>(m,s<span style="font-size:10px;position:relative;top:-4px">-1</span>)</div>
<div style="position:absolute;top:199px;height:15px;line-height:15px;white-space:nowrap;color:#FF00FF;transform:scaleY(1.07);transform-origin:0 12px;font-weight:bold;left:320px;width:79px;text-align:center;">v<span style="font-size:10px;position:relative;top:2px">exp</span>(m,s<span style="font-size:10px;position:relative;top:-4px">-1</span>)</div>
<div style="position:absolute;top:199px;height:15px;line-height:15px;white-space:nowrap;color:#FF00FF;transform:scaleY(1.07);transform-origin:0 12px;font-weight:bold;left:400px;width:79px;text-align:center;">t(exp)</div>
<div style="position:absolute;top:217px;height:15px;line-height:15px;white-space:nowrap;color:#000;transform:scaleY(1.07);transform-origin:0 12px;right:901px;">0</div>
<div style="position:absolute;top:217px;height:15px;line-height:15px;white-space:nowrap;color:#000;transform:scaleY(1.07);transform-origin:0 12px;right:821px;">0,000</div>
<div style="position:absolute;top:217px;height:15px;line-height:15px;white-space:nowrap;color:#000;transform:scaleY(1.07);transform-origin:0 12px;right:741px;">8,456</div>
<div style="position:absolute;top:217px;height:15px;line-height:15px;white-space:nowrap;color:#FF00FF;transform:scaleY(1.07);transform-origin:0 12px;right:661px;">0,000</div>
<div style="position:absolute;top:217px;height:15px;line-height:15px;white-space:nowrap;color:#FF00FF;transform:scaleY(1.07);transform-origin:0 12px;right:581px;">0</div>
<div style="position:absolute;top:217px;height:15px;line-height:15px;white-space:nowrap;color:#FF00FF;transform:scaleY(1.07);transform-origin:0 12px;right:501px;">0</div>
<div style="position:absolute;top:234px;height:15px;line-height:15px;white-space:nowrap;color:#000;transform:scaleY(1.07);transform-origin:0 12px;right:901px;">0,002</div>
<div style="position:absolute;top:234px;height:15px;line-height:15px;white-space:nowrap;color:#000;transform:scaleY(1.07);transform-origin:0 12px;right:821px;">0,017</div>
<div style="position:absolute;top:234px;height:15px;line-height:15px;white-space:nowrap;color:#000;transform:scaleY(1.07);transform-origin:0 12px;right:741px;">8,292</div>
<div style="position:absolute;top:234px;height:15px;line-height:15px;white-space:nowrap;color:#FF00FF;transform:scaleY(1.07);transform-origin:0 12px;right:661px;">0,005</div>
<div style="position:absolute;top:234px;height:15px;line-height:15px;white-space:nowrap;color:#FF00FF;transform:scaleY(1.07);transform-origin:0 12px;right:581px;">0,2375</div>
<div style="position:absolute;top:234px;height:15px;line-height:15px;white-space:nowrap;color:#FF00FF;transform:scaleY(1.07);transform-origin:0 12px;right:501px;">0,04</div>
<div style="position:absolute;top:251px;height:15px;line-height:15px;white-space:nowrap;color:#000;transform:scaleY(1.07);transform-origin:0 12px;right:901px;">0,004</div>
<div style="position:absolute;top:251px;height:15px;line-height:15px;white-space:nowrap;color:#000;transform:scaleY(1.07);transform-origin:0 12px;right:821px;">0,033</div>
<div style="position:absolute;top:251px;height:15px;line-height:15px;white-space:nowrap;color:#000;transform:scaleY(1.07);transform-origin:0 12px;right:741px;">8,132</div>
<div style="position:absolute;top:251px;height:15px;line-height:15px;white-space:nowrap;color:#FF00FF;transform:scaleY(1.07);transform-origin:0 12px;right:661px;">0,019</div>
<div style="position:absolute;top:251px;height:15px;line-height:15px;white-space:nowrap;color:#FF00FF;transform:scaleY(1.07);transform-origin:0 12px;right:581px;">0,4125</div>
<div style="position:absolute;top:251px;height:15px;line-height:15px;white-space:nowrap;color:#FF00FF;transform:scaleY(1.07);transform-origin:0 12px;right:501px;">0,08</div>
<div style="position:absolute;top:268px;height:15px;line-height:15px;white-space:nowrap;color:#000;transform:scaleY(1.07);transform-origin:0 12px;right:901px;">0,006</div>
<div style="position:absolute;top:268px;height:15px;line-height:15px;white-space:nowrap;color:#000;transform:scaleY(1.07);transform-origin:0 12px;right:821px;">0,050</div>
<div style="position:absolute;top:268px;height:15px;line-height:15px;white-space:nowrap;color:#000;transform:scaleY(1.07);transform-origin:0 12px;right:741px;">7,974</div>
<div style="position:absolute;top:268px;height:15px;line-height:15px;white-space:nowrap;color:#FF00FF;transform:scaleY(1.07);transform-origin:0 12px;right:661px;">0,038</div>
<div style="position:absolute;top:268px;height:15px;line-height:15px;white-space:nowrap;color:#FF00FF;transform:scaleY(1.07);transform-origin:0 12px;right:581px;">0,57375</div>
<div style="position:absolute;top:268px;height:15px;line-height:15px;white-space:nowrap;color:#FF00FF;transform:scaleY(1.07);transform-origin:0 12px;right:501px;">0,12</div>
<div style="position:absolute;top:285px;height:15px;line-height:15px;white-space:nowrap;color:#000;transform:scaleY(1.07);transform-origin:0 12px;right:901px;">0,008</div>
<div style="position:absolute;top:285px;height:15px;line-height:15px;white-space:nowrap;color:#000;transform:scaleY(1.07);transform-origin:0 12px;right:821px;">0,066</div>
<div style="position:absolute;top:285px;height:15px;line-height:15px;white-space:nowrap;color:#000;transform:scaleY(1.07);transform-origin:0 12px;right:741px;">7,820</div>
<div style="position:absolute;top:285px;height:15px;line-height:15px;white-space:nowrap;color:#FF00FF;transform:scaleY(1.07);transform-origin:0 12px;right:661px;">0,065</div>
<div style="position:absolute;top:285px;height:15px;line-height:15px;white-space:nowrap;color:#FF00FF;transform:scaleY(1.07);transform-origin:0 12px;right:581px;">0,6725</div>
<div style="position:absolute;top:285px;height:15px;line-height:15px;white-space:nowrap;color:#FF00FF;transform:scaleY(1.07);transform-origin:0 12px;right:501px;">0,16</div>
<div style="position:absolute;top:302px;height:15px;line-height:15px;white-space:nowrap;color:#000;transform:scaleY(1.07);transform-origin:0 12px;right:901px;">0,01</div>
<div style="position:absolute;top:302px;height:15px;line-height:15px;white-space:nowrap;color:#000;transform:scaleY(1.07);transform-origin:0 12px;right:821px;">0,081</div>
<div style="position:absolute;top:302px;height:15px;line-height:15px;white-space:nowrap;color:#000;transform:scaleY(1.07);transform-origin:0 12px;right:741px;">7,669</div>
<div style="position:absolute;top:302px;height:15px;line-height:15px;white-space:nowrap;color:#FF00FF;transform:scaleY(1.07);transform-origin:0 12px;right:661px;">0,092</div>
<div style="position:absolute;top:302px;height:15px;line-height:15px;white-space:nowrap;color:#FF00FF;transform:scaleY(1.07);transform-origin:0 12px;right:581px;">0,72625</div>
<div style="position:absolute;top:302px;height:15px;line-height:15px;white-space:nowrap;color:#FF00FF;transform:scaleY(1.07);transform-origin:0 12px;right:501px;">0,2</div>
<div style="position:absolute;top:319px;height:15px;line-height:15px;white-space:nowrap;color:#000;transform:scaleY(1.07);transform-origin:0 12px;right:901px;">0,012</div>
<div style="position:absolute;top:319px;height:15px;line-height:15px;white-space:nowrap;color:#000;transform:scaleY(1.07);transform-origin:0 12px;right:821px;">0,097</div>
<div style="position:absolute;top:319px;height:15px;line-height:15px;white-space:nowrap;color:#000;transform:scaleY(1.07);transform-origin:0 12px;right:741px;">7,521</div>
<div style="position:absolute;top:319px;height:15px;line-height:15px;white-space:nowrap;color:#FF00FF;transform:scaleY(1.07);transform-origin:0 12px;right:661px;">0,123</div>
<div style="position:absolute;top:319px;height:15px;line-height:15px;white-space:nowrap;color:#FF00FF;transform:scaleY(1.07);transform-origin:0 12px;right:581px;">0,815</div>
<div style="position:absolute;top:319px;height:15px;line-height:15px;white-space:nowrap;color:#FF00FF;transform:scaleY(1.07);transform-origin:0 12px;right:501px;">0,24</div>
<div style="position:absolute;top:336px;height:15px;line-height:15px;white-space:nowrap;color:#000;transform:scaleY(1.07);transform-origin:0 12px;right:901px;">0,014</div>
<div style="position:absolute;top:336px;height:15px;line-height:15px;white-space:nowrap;color:#000;transform:scaleY(1.07);transform-origin:0 12px;right:821px;">0,112</div>
<div style="position:absolute;top:336px;height:15px;line-height:15px;white-space:nowrap;color:#000;transform:scaleY(1.07);transform-origin:0 12px;right:741px;">7,375</div>
<div style="position:absolute;top:336px;height:15px;line-height:15px;white-space:nowrap;color:#FF00FF;transform:scaleY(1.07);transform-origin:0 12px;right:661px;">0,157</div>
<div style="position:absolute;top:336px;height:15px;line-height:15px;white-space:nowrap;color:#FF00FF;transform:scaleY(1.07);transform-origin:0 12px;right:581px;">0,8375</div>
<div style="position:absolute;top:336px;height:15px;line-height:15px;white-space:nowrap;color:#FF00FF;transform:scaleY(1.07);transform-origin:0 12px;right:501px;">0,28</div>
<div style="position:absolute;top:353px;height:15px;line-height:15px;white-space:nowrap;color:#000;transform:scaleY(1.07);transform-origin:0 12px;right:901px;">0,016</div>
<div style="position:absolute;top:353px;height:15px;line-height:15px;white-space:nowrap;color:#000;transform:scaleY(1.07);transform-origin:0 12px;right:821px;">0,126</div>
<div style="position:absolute;top:353px;height:15px;line-height:15px;white-space:nowrap;color:#000;transform:scaleY(1.07);transform-origin:0 12px;right:741px;">7,233</div>
<div style="position:absolute;top:353px;height:15px;line-height:15px;white-space:nowrap;color:#FF00FF;transform:scaleY(1.07);transform-origin:0 12px;right:661px;">0,190</div>
<div style="position:absolute;top:353px;height:15px;line-height:15px;white-space:nowrap;color:#FF00FF;transform:scaleY(1.07);transform-origin:0 12px;right:581px;">0,825</div>
<div style="position:absolute;top:353px;height:15px;line-height:15px;white-space:nowrap;color:#FF00FF;transform:scaleY(1.07);transform-origin:0 12px;right:501px;">0,32</div>
<div style="position:absolute;top:370px;height:15px;line-height:15px;white-space:nowrap;color:#000;transform:scaleY(1.07);transform-origin:0 12px;right:901px;">0,018</div>
<div style="position:absolute;top:370px;height:15px;line-height:15px;white-space:nowrap;color:#000;transform:scaleY(1.07);transform-origin:0 12px;right:821px;">0,141</div>
<div style="position:absolute;top:370px;height:15px;line-height:15px;white-space:nowrap;color:#000;transform:scaleY(1.07);transform-origin:0 12px;right:741px;">7,093</div>
<div style="position:absolute;top:370px;height:15px;line-height:15px;white-space:nowrap;color:#FF00FF;transform:scaleY(1.07);transform-origin:0 12px;right:661px;">0,223</div>
<div style="position:absolute;top:370px;height:15px;line-height:15px;white-space:nowrap;color:#FF00FF;transform:scaleY(1.07);transform-origin:0 12px;right:581px;">0,8625</div>
<div style="position:absolute;top:370px;height:15px;line-height:15px;white-space:nowrap;color:#FF00FF;transform:scaleY(1.07);transform-origin:0 12px;right:501px;">0,36</div>
<div style="position:absolute;top:387px;height:15px;line-height:15px;white-space:nowrap;color:#000;transform:scaleY(1.07);transform-origin:0 12px;right:901px;">0,02</div>
<div style="position:absolute;top:387px;height:15px;line-height:15px;white-space:nowrap;color:#000;transform:scaleY(1.07);transform-origin:0 12px;right:821px;">0,155</div>
<div style="position:absolute;top:387px;height:15px;line-height:15px;white-space:nowrap;color:#000;transform:scaleY(1.07);transform-origin:0 12px;right:741px;">6,955</div>
<div style="position:absolute;top:387px;height:15px;line-height:15px;white-space:nowrap;color:#FF00FF;transform:scaleY(1.07);transform-origin:0 12px;right:661px;">0,259</div>
<div style="position:absolute;top:387px;height:15px;line-height:15px;white-space:nowrap;color:#FF00FF;transform:scaleY(1.07);transform-origin:0 12px;right:581px;">0,925</div>
<div style="position:absolute;top:387px;height:15px;line-height:15px;white-space:nowrap;color:#FF00FF;transform:scaleY(1.07);transform-origin:0 12px;right:501px;">0,4</div>
<div style="position:absolute;top:404px;height:15px;line-height:15px;white-space:nowrap;color:#000;transform:scaleY(1.07);transform-origin:0 12px;right:901px;">0,022</div>
<div style="position:absolute;top:404px;height:15px;line-height:15px;white-space:nowrap;color:#000;transform:scaleY(1.07);transform-origin:0 12px;right:821px;">0,169</div>
<div style="position:absolute;top:404px;height:15px;line-height:15px;white-space:nowrap;color:#000;transform:scaleY(1.07);transform-origin:0 12px;right:741px;">6,821</div>
<div style="position:absolute;top:404px;height:15px;line-height:15px;white-space:nowrap;color:#FF00FF;transform:scaleY(1.07);transform-origin:0 12px;right:661px;">0,297</div>
<div style="position:absolute;top:404px;height:15px;line-height:15px;white-space:nowrap;color:#FF00FF;transform:scaleY(1.07);transform-origin:0 12px;right:581px;">0,9375</div>
<div style="position:absolute;top:404px;height:15px;line-height:15px;white-space:nowrap;color:#FF00FF;transform:scaleY(1.07);transform-origin:0 12px;right:501px;">0,44</div>
<div style="position:absolute;top:421px;height:15px;line-height:15px;white-space:nowrap;color:#000;transform:scaleY(1.07);transform-origin:0 12px;right:901px;">0,024</div>
<div style="position:absolute;top:421px;height:15px;line-height:15px;white-space:nowrap;color:#000;transform:scaleY(1.07);transform-origin:0 12px;right:821px;">0,183</div>
<div style="position:absolute;top:421px;height:15px;line-height:15px;white-space:nowrap;color:#000;transform:scaleY(1.07);transform-origin:0 12px;right:741px;">6,689</div>
<div style="position:absolute;top:421px;height:15px;line-height:15px;white-space:nowrap;color:#FF00FF;transform:scaleY(1.07);transform-origin:0 12px;right:661px;">0,334</div>
<div style="position:absolute;top:421px;height:15px;line-height:15px;white-space:nowrap;color:#FF00FF;transform:scaleY(1.07);transform-origin:0 12px;right:581px;">0,9375</div>
<div style="position:absolute;top:421px;height:15px;line-height:15px;white-space:nowrap;color:#FF00FF;transform:scaleY(1.07);transform-origin:0 12px;right:501px;">0,48</div>
<div style="position:absolute;top:438px;height:15px;line-height:15px;white-space:nowrap;color:#000;transform:scaleY(1.07);transform-origin:0 12px;right:901px;">0,026</div>
<div style="position:absolute;top:438px;height:15px;line-height:15px;white-space:nowrap;color:#000;transform:scaleY(1.07);transform-origin:0 12px;right:821px;">0,196</div>
<div style="position:absolute;top:438px;height:15px;line-height:15px;white-space:nowrap;color:#000;transform:scaleY(1.07);transform-origin:0 12px;right:741px;">6,560</div>
<div style="position:absolute;top:438px;height:15px;line-height:15px;white-space:nowrap;color:#FF00FF;transform:scaleY(1.07);transform-origin:0 12px;right:661px;">0,372</div>
<div style="position:absolute;top:438px;height:15px;line-height:15px;white-space:nowrap;color:#FF00FF;transform:scaleY(1.07);transform-origin:0 12px;right:581px;">0,95</div>
<div style="position:absolute;top:438px;height:15px;line-height:15px;white-space:nowrap;color:#FF00FF;transform:scaleY(1.07);transform-origin:0 12px;right:501px;">0,52</div>
<div style="position:absolute;top:455px;height:15px;line-height:15px;white-space:nowrap;color:#000;transform:scaleY(1.07);transform-origin:0 12px;right:901px;">0,028</div>
<div style="position:absolute;top:455px;height:15px;line-height:15px;white-space:nowrap;color:#000;transform:scaleY(1.07);transform-origin:0 12px;right:821px;">0,209</div>
<div style="position:absolute;top:455px;height:15px;line-height:15px;white-space:nowrap;color:#000;transform:scaleY(1.07);transform-origin:0 12px;right:741px;">6,433</div>
<div style="position:absolute;top:455px;height:15px;line-height:15px;white-space:nowrap;color:#FF00FF;transform:scaleY(1.07);transform-origin:0 12px;right:661px;">0,410</div>
<div style="position:absolute;top:455px;height:15px;line-height:15px;white-space:nowrap;color:#FF00FF;transform:scaleY(1.07);transform-origin:0 12px;right:581px;">0,925</div>
<div style="position:absolute;top:455px;height:15px;line-height:15px;white-space:nowrap;color:#FF00FF;transform:scaleY(1.07);transform-origin:0 12px;right:501px;">0,56</div>
<div style="position:absolute;top:472px;height:15px;line-height:15px;white-space:nowrap;color:#000;transform:scaleY(1.07);transform-origin:0 12px;right:901px;">0,03</div>
<div style="position:absolute;top:472px;height:15px;line-height:15px;white-space:nowrap;color:#000;transform:scaleY(1.07);transform-origin:0 12px;right:821px;">0,222</div>
<div style="position:absolute;top:472px;height:15px;line-height:15px;white-space:nowrap;color:#000;transform:scaleY(1.07);transform-origin:0 12px;right:741px;">6,308</div>
<div style="position:absolute;top:472px;height:15px;line-height:15px;white-space:nowrap;color:#FF00FF;transform:scaleY(1.07);transform-origin:0 12px;right:661px;">0,446</div>
<div style="position:absolute;top:472px;height:15px;line-height:15px;white-space:nowrap;color:#FF00FF;transform:scaleY(1.07);transform-origin:0 12px;right:581px;">0,9125</div>
<div style="position:absolute;top:472px;height:15px;line-height:15px;white-space:nowrap;color:#FF00FF;transform:scaleY(1.07);transform-origin:0 12px;right:501px;">0,6</div>
<div style="position:absolute;top:489px;height:15px;line-height:15px;white-space:nowrap;color:#000;transform:scaleY(1.07);transform-origin:0 12px;right:901px;">0,032</div>
<div style="position:absolute;top:489px;height:15px;line-height:15px;white-space:nowrap;color:#000;transform:scaleY(1.07);transform-origin:0 12px;right:821px;">0,235</div>
<div style="position:absolute;top:489px;height:15px;line-height:15px;white-space:nowrap;color:#000;transform:scaleY(1.07);transform-origin:0 12px;right:741px;">6,186</div>
<div style="position:absolute;top:489px;height:15px;line-height:15px;white-space:nowrap;color:#FF00FF;transform:scaleY(1.07);transform-origin:0 12px;right:661px;">0,483</div>
<div style="position:absolute;top:489px;height:15px;line-height:15px;white-space:nowrap;color:#FF00FF;transform:scaleY(1.07);transform-origin:0 12px;right:501px;">0,64</div>
<div style="position:absolute;top:507px;height:15px;line-height:15px;white-space:nowrap;color:#000;transform:scaleY(1.07);transform-origin:0 12px;right:901px;">0,034</div>
<div style="position:absolute;top:507px;height:15px;line-height:15px;white-space:nowrap;color:#000;transform:scaleY(1.07);transform-origin:0 12px;right:821px;">0,247</div>
<div style="position:absolute;top:507px;height:15px;line-height:15px;white-space:nowrap;color:#000;transform:scaleY(1.07);transform-origin:0 12px;right:741px;">6,067</div>
<div style="position:absolute;top:524px;height:15px;line-height:15px;white-space:nowrap;color:#000;transform:scaleY(1.07);transform-origin:0 12px;right:901px;">0,036</div>
<div style="position:absolute;top:524px;height:15px;line-height:15px;white-space:nowrap;color:#000;transform:scaleY(1.07);transform-origin:0 12px;right:821px;">0,259</div>
<div style="position:absolute;top:524px;height:15px;line-height:15px;white-space:nowrap;color:#000;transform:scaleY(1.07);transform-origin:0 12px;right:741px;">5,949</div>
<div style="position:absolute;top:541px;height:15px;line-height:15px;white-space:nowrap;color:#000;transform:scaleY(1.07);transform-origin:0 12px;right:901px;">0,038</div>
<div style="position:absolute;top:541px;height:15px;line-height:15px;white-space:nowrap;color:#000;transform:scaleY(1.07);transform-origin:0 12px;right:821px;">0,271</div>
<div style="position:absolute;top:541px;height:15px;line-height:15px;white-space:nowrap;color:#000;transform:scaleY(1.07);transform-origin:0 12px;right:741px;">5,834</div>
<div style="position:absolute;top:558px;height:15px;line-height:15px;white-space:nowrap;color:#000;transform:scaleY(1.07);transform-origin:0 12px;right:901px;">0,04</div>
<div style="position:absolute;top:558px;height:15px;line-height:15px;white-space:nowrap;color:#000;transform:scaleY(1.07);transform-origin:0 12px;right:821px;">0,283</div>
<div style="position:absolute;top:558px;height:15px;line-height:15px;white-space:nowrap;color:#000;transform:scaleY(1.07);transform-origin:0 12px;right:741px;">5,721</div>
<div style="position:absolute;top:575px;height:15px;line-height:15px;white-space:nowrap;color:#000;transform:scaleY(1.07);transform-origin:0 12px;right:901px;">0,042</div>
<div style="position:absolute;top:575px;height:15px;line-height:15px;white-space:nowrap;color:#000;transform:scaleY(1.07);transform-origin:0 12px;right:821px;">0,294</div>
<div style="position:absolute;top:575px;height:15px;line-height:15px;white-space:nowrap;color:#000;transform:scaleY(1.07);transform-origin:0 12px;right:741px;">5,611</div>
<div style="position:absolute;top:592px;height:15px;line-height:15px;white-space:nowrap;color:#000;transform:scaleY(1.07);transform-origin:0 12px;right:901px;">0,044</div>
<div style="position:absolute;top:592px;height:15px;line-height:15px;white-space:nowrap;color:#000;transform:scaleY(1.07);transform-origin:0 12px;right:821px;">0,305</div>
<div style="position:absolute;top:592px;height:15px;line-height:15px;white-space:nowrap;color:#000;transform:scaleY(1.07);transform-origin:0 12px;right:741px;">5,502</div>
<div style="position:absolute;top:18px;height:15px;line-height:15px;white-space:nowrap;color:#000;transform:scaleY(1.07);transform-origin:0 12px;left:482px;">choix dt</div>
<div style="position:absolute;top:18px;height:15px;line-height:15px;white-space:nowrap;color:#000;transform:scaleY(1.07);transform-origin:0 12px;right:21px;">2</div>
</div><div style="position:absolute;left:0px;top:82px;width:1024px;height:1px;background:#D8D4C4;"></div>
<div style="position:absolute;left:1px;top:83px;width:1021px;height:1px;background:#716F64;"></div>
<div style="position:absolute;left:1px;top:83px;width:1px;height:621px;background:#716F64;"></div>
<div style="position:absolute;left:2px;top:84px;width:1004px;height:16px;background:#ECE9D8;"></div>
<div style="position:absolute;left:2px;top:100px;width:1004px;height:1px;background:#ACA899;"></div>
<div style="position:absolute;left:2px;top:101px;width:25px;height:603px;background:#ECE9D8;"></div>
<div style="position:absolute;left:27px;top:84px;width:1px;height:620px;background:#ACA899;"></div>
<div style="position:absolute;left:28px;top:84px;width:79px;height:1px;background:#FBFAF5;"></div>
<div style="position:absolute;left:28px;top:84px;width:1px;height:16px;background:#FBFAF5;"></div>
<div style="position:absolute;left:107px;top:84px;width:1px;height:16px;background:#ACA899;"></div>
<div style="position:absolute;left:28px;top:85px;width:79px;line-height:15px;text-align:center;color:#000;transform:scaleY(1.07);transform-origin:0 12px">A</div>
<div style="position:absolute;left:108px;top:84px;width:79px;height:1px;background:#FBFAF5;"></div>
<div style="position:absolute;left:108px;top:84px;width:1px;height:16px;background:#FBFAF5;"></div>
<div style="position:absolute;left:187px;top:84px;width:1px;height:16px;background:#ACA899;"></div>
<div style="position:absolute;left:108px;top:85px;width:79px;line-height:15px;text-align:center;color:#000;transform:scaleY(1.07);transform-origin:0 12px">B</div>
<div style="position:absolute;left:188px;top:84px;width:79px;height:1px;background:#FBFAF5;"></div>
<div style="position:absolute;left:188px;top:84px;width:1px;height:16px;background:#FBFAF5;"></div>
<div style="position:absolute;left:267px;top:84px;width:1px;height:16px;background:#ACA899;"></div>
<div style="position:absolute;left:188px;top:85px;width:79px;line-height:15px;text-align:center;color:#000;transform:scaleY(1.07);transform-origin:0 12px">C</div>
<div style="position:absolute;left:268px;top:84px;width:79px;height:16px;background:#C1D2EE;"></div>
<div style="position:absolute;left:267px;top:100px;width:81px;height:1px;background:#316AC5;"></div>
<div style="position:absolute;left:347px;top:84px;width:1px;height:17px;background:#316AC5;"></div>
<div style="position:absolute;left:268px;top:85px;width:79px;line-height:15px;text-align:center;color:#000;transform:scaleY(1.07);transform-origin:0 12px">D</div>
<div style="position:absolute;left:348px;top:84px;width:79px;height:1px;background:#FBFAF5;"></div>
<div style="position:absolute;left:348px;top:84px;width:1px;height:16px;background:#FBFAF5;"></div>
<div style="position:absolute;left:427px;top:84px;width:1px;height:16px;background:#ACA899;"></div>
<div style="position:absolute;left:348px;top:85px;width:79px;line-height:15px;text-align:center;color:#000;transform:scaleY(1.07);transform-origin:0 12px">E</div>
<div style="position:absolute;left:428px;top:84px;width:79px;height:1px;background:#FBFAF5;"></div>
<div style="position:absolute;left:428px;top:84px;width:1px;height:16px;background:#FBFAF5;"></div>
<div style="position:absolute;left:507px;top:84px;width:1px;height:16px;background:#ACA899;"></div>
<div style="position:absolute;left:428px;top:85px;width:79px;line-height:15px;text-align:center;color:#000;transform:scaleY(1.07);transform-origin:0 12px">F</div>
<div style="position:absolute;left:508px;top:84px;width:79px;height:1px;background:#FBFAF5;"></div>
<div style="position:absolute;left:508px;top:84px;width:1px;height:16px;background:#FBFAF5;"></div>
<div style="position:absolute;left:587px;top:84px;width:1px;height:16px;background:#ACA899;"></div>
<div style="position:absolute;left:508px;top:85px;width:79px;line-height:15px;text-align:center;color:#000;transform:scaleY(1.07);transform-origin:0 12px">G</div>
<div style="position:absolute;left:588px;top:84px;width:79px;height:1px;background:#FBFAF5;"></div>
<div style="position:absolute;left:588px;top:84px;width:1px;height:16px;background:#FBFAF5;"></div>
<div style="position:absolute;left:667px;top:84px;width:1px;height:16px;background:#ACA899;"></div>
<div style="position:absolute;left:588px;top:85px;width:79px;line-height:15px;text-align:center;color:#000;transform:scaleY(1.07);transform-origin:0 12px">H</div>
<div style="position:absolute;left:668px;top:84px;width:79px;height:1px;background:#FBFAF5;"></div>
<div style="position:absolute;left:668px;top:84px;width:1px;height:16px;background:#FBFAF5;"></div>
<div style="position:absolute;left:747px;top:84px;width:1px;height:16px;background:#ACA899;"></div>
<div style="position:absolute;left:668px;top:85px;width:79px;line-height:15px;text-align:center;color:#000;transform:scaleY(1.07);transform-origin:0 12px">I</div>
<div style="position:absolute;left:748px;top:84px;width:79px;height:1px;background:#FBFAF5;"></div>
<div style="position:absolute;left:748px;top:84px;width:1px;height:16px;background:#FBFAF5;"></div>
<div style="position:absolute;left:827px;top:84px;width:1px;height:16px;background:#ACA899;"></div>
<div style="position:absolute;left:748px;top:85px;width:79px;line-height:15px;text-align:center;color:#000;transform:scaleY(1.07);transform-origin:0 12px">J</div>
<div style="position:absolute;left:828px;top:84px;width:79px;height:1px;background:#FBFAF5;"></div>
<div style="position:absolute;left:828px;top:84px;width:1px;height:16px;background:#FBFAF5;"></div>
<div style="position:absolute;left:907px;top:84px;width:1px;height:16px;background:#ACA899;"></div>
<div style="position:absolute;left:828px;top:85px;width:79px;line-height:15px;text-align:center;color:#000;transform:scaleY(1.07);transform-origin:0 12px">K</div>
<div style="position:absolute;left:908px;top:84px;width:79px;height:1px;background:#FBFAF5;"></div>
<div style="position:absolute;left:908px;top:84px;width:1px;height:16px;background:#FBFAF5;"></div>
<div style="position:absolute;left:987px;top:84px;width:1px;height:16px;background:#ACA899;"></div>
<div style="position:absolute;left:908px;top:85px;width:79px;line-height:15px;text-align:center;color:#000;transform:scaleY(1.07);transform-origin:0 12px">L</div>
<div style="position:absolute;left:988px;top:84px;width:18px;height:1px;background:#FBFAF5;"></div>
<div style="position:absolute;left:988px;top:84px;width:1px;height:16px;background:#FBFAF5;"></div>
<div style="position:absolute;left:988px;top:85px;width:79px;line-height:15px;text-align:center;color:#000;transform:scaleY(1.07);transform-origin:0 12px">M</div>
<div style="position:absolute;left:2px;top:101px;width:25px;height:1px;background:#FBFAF5;"></div>
<div style="position:absolute;left:2px;top:117px;width:25px;height:1px;background:#ACA899;"></div>
<div style="position:absolute;left:2px;top:102px;width:25px;line-height:15px;text-align:center;color:#000;overflow:hidden;transform:scaleY(1.07);transform-origin:0 12px;height:15px">1</div>
<div style="position:absolute;left:2px;top:118px;width:25px;height:1px;background:#FBFAF5;"></div>
<div style="position:absolute;left:2px;top:135px;width:25px;height:1px;background:#ACA899;"></div>
<div style="position:absolute;left:2px;top:120px;width:25px;line-height:15px;text-align:center;color:#000;overflow:hidden;transform:scaleY(1.07);transform-origin:0 12px;height:15px">2</div>
<div style="position:absolute;left:2px;top:136px;width:25px;height:1px;background:#FBFAF5;"></div>
<div style="position:absolute;left:2px;top:153px;width:25px;height:1px;background:#ACA899;"></div>
<div style="position:absolute;left:2px;top:138px;width:25px;line-height:15px;text-align:center;color:#000;overflow:hidden;transform:scaleY(1.07);transform-origin:0 12px;height:15px">3</div>
<div style="position:absolute;left:2px;top:154px;width:25px;height:1px;background:#FBFAF5;"></div>
<div style="position:absolute;left:2px;top:171px;width:25px;height:1px;background:#ACA899;"></div>
<div style="position:absolute;left:2px;top:156px;width:25px;line-height:15px;text-align:center;color:#000;overflow:hidden;transform:scaleY(1.07);transform-origin:0 12px;height:15px">4</div>
<div style="position:absolute;left:2px;top:172px;width:25px;height:1px;background:#FBFAF5;"></div>
<div style="position:absolute;left:2px;top:191px;width:25px;height:1px;background:#ACA899;"></div>
<div style="position:absolute;left:2px;top:176px;width:25px;line-height:15px;text-align:center;color:#000;overflow:hidden;transform:scaleY(1.07);transform-origin:0 12px;height:15px">5</div>
<div style="position:absolute;left:2px;top:192px;width:25px;height:1px;background:#FBFAF5;"></div>
<div style="position:absolute;left:2px;top:208px;width:25px;height:1px;background:#ACA899;"></div>
<div style="position:absolute;left:2px;top:193px;width:25px;line-height:15px;text-align:center;color:#000;overflow:hidden;transform:scaleY(1.07);transform-origin:0 12px;height:15px">6</div>
<div style="position:absolute;left:2px;top:209px;width:25px;height:1px;background:#FBFAF5;"></div>
<div style="position:absolute;left:2px;top:225px;width:25px;height:1px;background:#ACA899;"></div>
<div style="position:absolute;left:2px;top:210px;width:25px;line-height:15px;text-align:center;color:#000;overflow:hidden;transform:scaleY(1.07);transform-origin:0 12px;height:15px">7</div>
<div style="position:absolute;left:2px;top:226px;width:25px;height:1px;background:#FBFAF5;"></div>
<div style="position:absolute;left:2px;top:243px;width:25px;height:1px;background:#ACA899;"></div>
<div style="position:absolute;left:2px;top:228px;width:25px;line-height:15px;text-align:center;color:#000;overflow:hidden;transform:scaleY(1.07);transform-origin:0 12px;height:15px">8</div>
<div style="position:absolute;left:2px;top:244px;width:25px;height:1px;background:#FBFAF5;"></div>
<div style="position:absolute;left:2px;top:261px;width:25px;height:1px;background:#ACA899;"></div>
<div style="position:absolute;left:2px;top:246px;width:25px;line-height:15px;text-align:center;color:#000;overflow:hidden;transform:scaleY(1.07);transform-origin:0 12px;height:15px">9</div>
<div style="position:absolute;left:2px;top:262px;width:25px;height:1px;background:#FBFAF5;"></div>
<div style="position:absolute;left:2px;top:279px;width:25px;height:1px;background:#ACA899;"></div>
<div style="position:absolute;left:2px;top:264px;width:25px;line-height:15px;text-align:center;color:#000;overflow:hidden;transform:scaleY(1.07);transform-origin:0 12px;height:15px">10</div>
<div style="position:absolute;left:2px;top:280px;width:25px;height:1px;background:#FBFAF5;"></div>
<div style="position:absolute;left:2px;top:296px;width:25px;height:1px;background:#ACA899;"></div>
<div style="position:absolute;left:2px;top:281px;width:25px;line-height:15px;text-align:center;color:#000;overflow:hidden;transform:scaleY(1.07);transform-origin:0 12px;height:15px">11</div>
<div style="position:absolute;left:2px;top:297px;width:25px;height:1px;background:#FBFAF5;"></div>
<div style="position:absolute;left:2px;top:316px;width:25px;height:1px;background:#ACA899;"></div>
<div style="position:absolute;left:2px;top:301px;width:25px;line-height:15px;text-align:center;color:#000;overflow:hidden;transform:scaleY(1.07);transform-origin:0 12px;height:15px">12</div>
<div style="position:absolute;left:2px;top:317px;width:25px;height:16px;background:#C1D2EE;"></div>
<div style="position:absolute;left:2px;top:333px;width:25px;height:1px;background:#316AC5;"></div>
<div style="position:absolute;left:2px;top:316px;width:25px;height:1px;background:#316AC5;"></div>
<div style="position:absolute;left:27px;top:317px;width:1px;height:17px;background:#316AC5;"></div>
<div style="position:absolute;left:2px;top:318px;width:25px;line-height:15px;text-align:center;color:#000;overflow:hidden;transform:scaleY(1.07);transform-origin:0 12px;height:15px">13</div>
<div style="position:absolute;left:2px;top:334px;width:25px;height:16px;background:#C1D2EE;"></div>
<div style="position:absolute;left:2px;top:350px;width:25px;height:1px;background:#316AC5;"></div>
<div style="position:absolute;left:27px;top:334px;width:1px;height:17px;background:#316AC5;"></div>
<div style="position:absolute;left:2px;top:335px;width:25px;line-height:15px;text-align:center;color:#000;overflow:hidden;transform:scaleY(1.07);transform-origin:0 12px;height:15px">14</div>
<div style="position:absolute;left:2px;top:351px;width:25px;height:16px;background:#C1D2EE;"></div>
<div style="position:absolute;left:2px;top:367px;width:25px;height:1px;background:#316AC5;"></div>
<div style="position:absolute;left:27px;top:351px;width:1px;height:17px;background:#316AC5;"></div>
<div style="position:absolute;left:2px;top:352px;width:25px;line-height:15px;text-align:center;color:#000;overflow:hidden;transform:scaleY(1.07);transform-origin:0 12px;height:15px">15</div>
<div style="position:absolute;left:2px;top:368px;width:25px;height:16px;background:#C1D2EE;"></div>
<div style="position:absolute;left:2px;top:384px;width:25px;height:1px;background:#316AC5;"></div>
<div style="position:absolute;left:27px;top:368px;width:1px;height:17px;background:#316AC5;"></div>
<div style="position:absolute;left:2px;top:369px;width:25px;line-height:15px;text-align:center;color:#000;overflow:hidden;transform:scaleY(1.07);transform-origin:0 12px;height:15px">16</div>
<div style="position:absolute;left:2px;top:385px;width:25px;height:16px;background:#C1D2EE;"></div>
<div style="position:absolute;left:2px;top:401px;width:25px;height:1px;background:#316AC5;"></div>
<div style="position:absolute;left:27px;top:385px;width:1px;height:17px;background:#316AC5;"></div>
<div style="position:absolute;left:2px;top:386px;width:25px;line-height:15px;text-align:center;color:#000;overflow:hidden;transform:scaleY(1.07);transform-origin:0 12px;height:15px">17</div>
<div style="position:absolute;left:2px;top:402px;width:25px;height:16px;background:#C1D2EE;"></div>
<div style="position:absolute;left:2px;top:418px;width:25px;height:1px;background:#316AC5;"></div>
<div style="position:absolute;left:27px;top:402px;width:1px;height:17px;background:#316AC5;"></div>
<div style="position:absolute;left:2px;top:403px;width:25px;line-height:15px;text-align:center;color:#000;overflow:hidden;transform:scaleY(1.07);transform-origin:0 12px;height:15px">18</div>
<div style="position:absolute;left:2px;top:419px;width:25px;height:16px;background:#C1D2EE;"></div>
<div style="position:absolute;left:2px;top:435px;width:25px;height:1px;background:#316AC5;"></div>
<div style="position:absolute;left:27px;top:419px;width:1px;height:17px;background:#316AC5;"></div>
<div style="position:absolute;left:2px;top:420px;width:25px;line-height:15px;text-align:center;color:#000;overflow:hidden;transform:scaleY(1.07);transform-origin:0 12px;height:15px">19</div>
<div style="position:absolute;left:2px;top:436px;width:25px;height:16px;background:#C1D2EE;"></div>
<div style="position:absolute;left:2px;top:452px;width:25px;height:1px;background:#316AC5;"></div>
<div style="position:absolute;left:27px;top:436px;width:1px;height:17px;background:#316AC5;"></div>
<div style="position:absolute;left:2px;top:437px;width:25px;line-height:15px;text-align:center;color:#000;overflow:hidden;transform:scaleY(1.07);transform-origin:0 12px;height:15px">20</div>
<div style="position:absolute;left:2px;top:453px;width:25px;height:16px;background:#C1D2EE;"></div>
<div style="position:absolute;left:2px;top:469px;width:25px;height:1px;background:#316AC5;"></div>
<div style="position:absolute;left:27px;top:453px;width:1px;height:17px;background:#316AC5;"></div>
<div style="position:absolute;left:2px;top:454px;width:25px;line-height:15px;text-align:center;color:#000;overflow:hidden;transform:scaleY(1.07);transform-origin:0 12px;height:15px">21</div>
<div style="position:absolute;left:2px;top:470px;width:25px;height:16px;background:#C1D2EE;"></div>
<div style="position:absolute;left:2px;top:486px;width:25px;height:1px;background:#316AC5;"></div>
<div style="position:absolute;left:27px;top:470px;width:1px;height:17px;background:#316AC5;"></div>
<div style="position:absolute;left:2px;top:471px;width:25px;line-height:15px;text-align:center;color:#000;overflow:hidden;transform:scaleY(1.07);transform-origin:0 12px;height:15px">22</div>
<div style="position:absolute;left:2px;top:487px;width:25px;height:16px;background:#C1D2EE;"></div>
<div style="position:absolute;left:2px;top:503px;width:25px;height:1px;background:#316AC5;"></div>
<div style="position:absolute;left:27px;top:487px;width:1px;height:17px;background:#316AC5;"></div>
<div style="position:absolute;left:2px;top:488px;width:25px;line-height:15px;text-align:center;color:#000;overflow:hidden;transform:scaleY(1.07);transform-origin:0 12px;height:15px">23</div>
<div style="position:absolute;left:2px;top:504px;width:25px;height:16px;background:#C1D2EE;"></div>
<div style="position:absolute;left:2px;top:520px;width:25px;height:1px;background:#316AC5;"></div>
<div style="position:absolute;left:27px;top:504px;width:1px;height:17px;background:#316AC5;"></div>
<div style="position:absolute;left:2px;top:505px;width:25px;line-height:15px;text-align:center;color:#000;overflow:hidden;transform:scaleY(1.07);transform-origin:0 12px;height:15px">24</div>
<div style="position:absolute;left:2px;top:521px;width:25px;height:16px;background:#C1D2EE;"></div>
<div style="position:absolute;left:2px;top:537px;width:25px;height:1px;background:#316AC5;"></div>
<div style="position:absolute;left:27px;top:521px;width:1px;height:17px;background:#316AC5;"></div>
<div style="position:absolute;left:2px;top:522px;width:25px;line-height:15px;text-align:center;color:#000;overflow:hidden;transform:scaleY(1.07);transform-origin:0 12px;height:15px">25</div>
<div style="position:absolute;left:2px;top:538px;width:25px;height:16px;background:#C1D2EE;"></div>
<div style="position:absolute;left:2px;top:554px;width:25px;height:1px;background:#316AC5;"></div>
<div style="position:absolute;left:27px;top:538px;width:1px;height:17px;background:#316AC5;"></div>
<div style="position:absolute;left:2px;top:539px;width:25px;line-height:15px;text-align:center;color:#000;overflow:hidden;transform:scaleY(1.07);transform-origin:0 12px;height:15px">26</div>
<div style="position:absolute;left:2px;top:555px;width:25px;height:16px;background:#C1D2EE;"></div>
<div style="position:absolute;left:2px;top:571px;width:25px;height:1px;background:#316AC5;"></div>
<div style="position:absolute;left:27px;top:555px;width:1px;height:17px;background:#316AC5;"></div>
<div style="position:absolute;left:2px;top:556px;width:25px;line-height:15px;text-align:center;color:#000;overflow:hidden;transform:scaleY(1.07);transform-origin:0 12px;height:15px">27</div>
<div style="position:absolute;left:2px;top:572px;width:25px;height:16px;background:#C1D2EE;"></div>
<div style="position:absolute;left:2px;top:588px;width:25px;height:1px;background:#316AC5;"></div>
<div style="position:absolute;left:27px;top:572px;width:1px;height:17px;background:#316AC5;"></div>
<div style="position:absolute;left:2px;top:573px;width:25px;line-height:15px;text-align:center;color:#000;overflow:hidden;transform:scaleY(1.07);transform-origin:0 12px;height:15px">28</div>
<div style="position:absolute;left:2px;top:589px;width:25px;height:17px;background:#C1D2EE;"></div>
<div style="position:absolute;left:2px;top:606px;width:25px;height:1px;background:#316AC5;"></div>
<div style="position:absolute;left:27px;top:589px;width:1px;height:18px;background:#316AC5;"></div>
<div style="position:absolute;left:2px;top:590px;width:25px;line-height:15px;text-align:center;color:#000;overflow:hidden;transform:scaleY(1.07);transform-origin:0 12px;height:15px">29</div>
<div style="position:absolute;left:2px;top:607px;width:25px;height:1px;background:#FBFAF5;"></div>
<div style="position:absolute;left:2px;top:623px;width:25px;height:1px;background:#ACA899;"></div>
<div style="position:absolute;left:2px;top:608px;width:25px;line-height:15px;text-align:center;color:#000;overflow:hidden;transform:scaleY(1.07);transform-origin:0 12px;height:15px">30</div>
<div style="position:absolute;left:2px;top:624px;width:25px;height:1px;background:#FBFAF5;"></div>
<div style="position:absolute;left:2px;top:640px;width:25px;height:1px;background:#ACA899;"></div>
<div style="position:absolute;left:2px;top:625px;width:25px;line-height:15px;text-align:center;color:#000;overflow:hidden;transform:scaleY(1.07);transform-origin:0 12px;height:15px">31</div>
<div style="position:absolute;left:2px;top:641px;width:25px;height:1px;background:#FBFAF5;"></div>
<div style="position:absolute;left:2px;top:657px;width:25px;height:1px;background:#ACA899;"></div>
<div style="position:absolute;left:2px;top:642px;width:25px;line-height:15px;text-align:center;color:#000;overflow:hidden;transform:scaleY(1.07);transform-origin:0 12px;height:15px">32</div>
<div style="position:absolute;left:2px;top:658px;width:25px;height:1px;background:#FBFAF5;"></div>
<div style="position:absolute;left:2px;top:674px;width:25px;height:1px;background:#ACA899;"></div>
<div style="position:absolute;left:2px;top:659px;width:25px;line-height:15px;text-align:center;color:#000;overflow:hidden;transform:scaleY(1.07);transform-origin:0 12px;height:15px">33</div>
<div style="position:absolute;left:2px;top:675px;width:25px;height:1px;background:#FBFAF5;"></div>
<div style="position:absolute;left:2px;top:691px;width:25px;height:1px;background:#ACA899;"></div>
<div style="position:absolute;left:2px;top:676px;width:25px;line-height:15px;text-align:center;color:#000;overflow:hidden;transform:scaleY(1.07);transform-origin:0 12px;height:15px">34</div>
<div style="position:absolute;left:2px;top:692px;width:25px;height:1px;background:#FBFAF5;"></div>
<div style="position:absolute;left:2px;top:693px;width:25px;line-height:15px;text-align:center;color:#000;overflow:hidden;transform:scaleY(1.07);transform-origin:0 12px;height:11px">35</div><div style="position:absolute;left:526px;top:172px;width:459px;height:444px;background:#fff;border:1px solid #000"></div>
<svg style="position:absolute;left:0;top:0" width="1024" height="768" viewBox="0 0 1024 768" font-family="Liberation Sans, sans-serif"><rect x="614" y="198" width="342" height="345" fill="#C0C0C0"/><rect x="614" y="198" width="1" height="350" fill="#000"/><rect x="682" y="198" width="1" height="350" fill="#000"/><rect x="751" y="198" width="1" height="350" fill="#000"/><rect x="819" y="198" width="1" height="350" fill="#000"/><rect x="888" y="198" width="1" height="350" fill="#000"/><rect x="956" y="198" width="1" height="350" fill="#000"/><rect x="610" y="198" width="347" height="1" fill="#000"/><rect x="610" y="232" width="347" height="1" fill="#000"/><rect x="610" y="267" width="347" height="1" fill="#000"/><rect x="610" y="302" width="347" height="1" fill="#000"/><rect x="610" y="336" width="347" height="1" fill="#000"/><rect x="610" y="370" width="347" height="1" fill="#000"/><rect x="610" y="405" width="347" height="1" fill="#000"/><rect x="610" y="440" width="347" height="1" fill="#000"/><rect x="610" y="474" width="347" height="1" fill="#000"/><rect x="610" y="508" width="347" height="1" fill="#000"/><rect x="610" y="543" width="347" height="1" fill="#000"/><text x="0" y="0" transform="translate(603.5,548) scale(1,1.08)" text-anchor="end" font-size="12.6" fill="#FF0000">0,000</text><text x="0" y="0" transform="translate(603.5,513) scale(1,1.08)" text-anchor="end" font-size="12.6" fill="#FF0000">0,100</text><text x="0" y="0" transform="translate(603.5,479) scale(1,1.08)" text-anchor="end" font-size="12.6" fill="#FF0000">0,200</text><text x="0" y="0" transform="translate(603.5,445) scale(1,1.08)" text-anchor="end" font-size="12.6" fill="#FF0000">0,300</text><text x="0" y="0" transform="translate(603.5,410) scale(1,1.08)" text-anchor="end" font-size="12.6" fill="#FF0000">0,400</text><text x="0" y="0" transform="translate(603.5,375) scale(1,1.08)" text-anchor="end" font-size="12.6" fill="#FF0000">0,500</text><text x="0" y="0" transform="translate(603.5,341) scale(1,1.08)" text-anchor="end" font-size="12.6" fill="#FF0000">0,600</text><text x="0" y="0" transform="translate(603.5,307) scale(1,1.08)" text-anchor="end" font-size="12.6" fill="#FF0000">0,700</text><text x="0" y="0" transform="translate(603.5,272) scale(1,1.08)" text-anchor="end" font-size="12.6" fill="#FF0000">0,800</text><text x="0" y="0" transform="translate(603.5,237) scale(1,1.08)" text-anchor="end" font-size="12.6" fill="#FF0000">0,900</text><text x="0" y="0" transform="translate(603.5,203) scale(1,1.08)" text-anchor="end" font-size="12.6" fill="#FF0000">1,000</text><text x="0" y="0" transform="translate(614.5,567) scale(1,1.08)" text-anchor="middle" font-size="12.6" fill="#FF0000">0</text><text x="0" y="0" transform="translate(682.5,567) scale(1,1.08)" text-anchor="middle" font-size="12.6" fill="#FF0000">0,2</text><text x="0" y="0" transform="translate(751.5,567) scale(1,1.08)" text-anchor="middle" font-size="12.6" fill="#FF0000">0,4</text><text x="0" y="0" transform="translate(819.5,567) scale(1,1.08)" text-anchor="middle" font-size="12.6" fill="#FF0000">0,6</text><text x="0" y="0" transform="translate(888.5,567) scale(1,1.08)" text-anchor="middle" font-size="12.6" fill="#FF0000">0,8</text><text x="0" y="0" transform="translate(956.5,567) scale(1,1.08)" text-anchor="middle" font-size="12.6" fill="#FF0000">1</text><text x="0" y="0" transform="translate(563,369.5) rotate(-90)" text-anchor="middle" font-size="14.2" font-weight="bold" fill="#000">vitesse</text><text x="784.5" y="594" text-anchor="middle" font-size="15.2" font-weight="bold" fill="#000">t(s)</text><path d="M614.0 539.5l3.5 3.5-3.5 3.5-3.5-3.5z" fill="#000080"/><path d="M614.7 533.7l3.5 3.5-3.5 3.5-3.5-3.5z" fill="#000080"/><path d="M615.4 527.9l3.5 3.5-3.5 3.5-3.5-3.5z" fill="#000080"/><path d="M616.1 522.3l3.5 3.5-3.5 3.5-3.5-3.5z" fill="#000080"/><path d="M616.7 516.8l3.5 3.5-3.5 3.5-3.5-3.5z" fill="#000080"/><path d="M617.4 511.4l3.5 3.5-3.5 3.5-3.5-3.5z" fill="#000080"/><path d="M618.1 506.1l3.5 3.5-3.5 3.5-3.5-3.5z" fill="#000080"/><path d="M618.8 501.0l3.5 3.5-3.5 3.5-3.5-3.5z" fill="#000080"/><path d="M619.5 495.9l3.5 3.5-3.5 3.5-3.5-3.5z" fill="#000080"/><path d="M620.2 490.9l3.5 3.5-3.5 3.5-3.5-3.5z" fill="#000080"/><path d="M620.8 486.0l3.5 3.5-3.5 3.5-3.5-3.5z" fill="#000080"/><path d="M621.5 481.2l3.5 3.5-3.5 3.5-3.5-3.5z" fill="#000080"/><path d="M622.2 476.5l3.5 3.5-3.5 3.5-3.5-3.5z" fill="#000080"/><path d="M622.9 471.9l3.5 3.5-3.5 3.5-3.5-3.5z" fill="#000080"/><path d="M623.6 467.3l3.5 3.5-3.5 3.5-3.5-3.5z" fill="#000080"/><path d="M624.3 462.9l3.5 3.5-3.5 3.5-3.5-3.5z" fill="#000080"/><path d="M624.9 458.5l3.5 3.5-3.5 3.5-3.5-3.5z" fill="#000080"/><path d="M625.6 454.3l3.5 3.5-3.5 3.5-3.5-3.5z" fill="#000080"/><path d="M626.3 450.1l3.5 3.5-3.5 3.5-3.5-3.5z" fill="#000080"/><path d="M627.0 446.0l3.5 3.5-3.5 3.5-3.5-3.5z" fill="#000080"/><path d="M627.7 442.0l3.5 3.5-3.5 3.5-3.5-3.5z" fill="#000080"/><path d="M628.4 438.0l3.5 3.5-3.5 3.5-3.5-3.5z" fill="#000080"/><path d="M629.0 434.1l3.5 3.5-3.5 3.5-3.5-3.5z" fill="#000080"/><path d="M629.7 430.3l3.5 3.5-3.5 3.5-3.5-3.5z" fill="#000080"/><path d="M630.4 426.6l3.5 3.5-3.5 3.5-3.5-3.5z" fill="#000080"/><path d="M631.1 423.0l3.5 3.5-3.5 3.5-3.5-3.5z" fill="#000080"/><path d="M631.8 419.4l3.5 3.5-3.5 3.5-3.5-3.5z" fill="#000080"/><path d="M632.5 415.9l3.5 3.5-3.5 3.5-3.5-3.5z" fill="#000080"/><path d="M633.2 412.4l3.5 3.5-3.5 3.5-3.5-3.5z" fill="#000080"/><path d="M633.8 409.1l3.5 3.5-3.5 3.5-3.5-3.5z" fill="#000080"/><path d="M634.5 405.7l3.5 3.5-3.5 3.5-3.5-3.5z" fill="#000080"/><path d="M635.2 402.5l3.5 3.5-3.5 3.5-3.5-3.5z" fill="#000080"/><path d="M635.9 399.3l3.5 3.5-3.5 3.5-3.5-3.5z" fill="#000080"/><path d="M636.6 396.2l3.5 3.5-3.5 3.5-3.5-3.5z" fill="#000080"/><path d="M637.3 393.1l3.5 3.5-3.5 3.5-3.5-3.5z" fill="#000080"/><path d="M637.9 390.1l3.5 3.5-3.5 3.5-3.5-3.5z" fill="#000080"/><path d="M638.6 387.2l3.5 3.5-3.5 3.5-3.5-3.5z" fill="#000080"/><path d="M639.3 384.3l3.5 3.5-3.5 3.5-3.5-3.5z" fill="#000080"/><path d="M640.0 381.5l3.5 3.5-3.5 3.5-3.5-3.5z" fill="#000080"/><path d="M640.7 378.7l3.5 3.5-3.5 3.5-3.5-3.5z" fill="#000080"/><path d="M641.4 376.0l3.5 3.5-3.5 3.5-3.5-3.5z" fill="#000080"/><path d="M642.0 373.3l3.5 3.5-3.5 3.5-3.5-3.5z" fill="#000080"/><path d="M642.7 370.7l3.5 3.5-3.5 3.5-3.5-3.5z" fill="#000080"/><path d="M643.4 368.1l3.5 3.5-3.5 3.5-3.5-3.5z" fill="#000080"/><path d="M644.1 365.6l3.5 3.5-3.5 3.5-3.5-3.5z" fill="#000080"/><path d="M644.8 363.1l3.5 3.5-3.5 3.5-3.5-3.5z" fill="#000080"/><path d="M645.5 360.7l3.5 3.5-3.5 3.5-3.5-3.5z" fill="#000080"/><path d="M646.1 358.3l3.5 3.5-3.5 3.5-3.5-3.5z" fill="#000080"/><path d="M646.8 356.0l3.5 3.5-3.5 3.5-3.5-3.5z" fill="#000080"/><path d="M647.5 353.7l3.5 3.5-3.5 3.5-3.5-3.5z" fill="#000080"/><path d="M648.2 351.4l3.5 3.5-3.5 3.5-3.5-3.5z" fill="#000080"/><path d="M648.9 349.2l3.5 3.5-3.5 3.5-3.5-3.5z" fill="#000080"/><path d="M649.6 347.1l3.5 3.5-3.5 3.5-3.5-3.5z" fill="#000080"/><path d="M650.3 345.0l3.5 3.5-3.5 3.5-3.5-3.5z" fill="#000080"/><path d="M650.9 342.9l3.5 3.5-3.5 3.5-3.5-3.5z" fill="#000080"/><path d="M651.6 340.9l3.5 3.5-3.5 3.5-3.5-3.5z" fill="#000080"/><path d="M652.3 338.9l3.5 3.5-3.5 3.5-3.5-3.5z" fill="#000080"/><path d="M653.0 336.9l3.5 3.5-3.5 3.5-3.5-3.5z" fill="#000080"/><path d="M653.7 335.0l3.5 3.5-3.5 3.5-3.5-3.5z" fill="#000080"/><path d="M654.4 333.1l3.5 3.5-3.5 3.5-3.5-3.5z" fill="#000080"/><path d="M655.0 331.3l3.5 3.5-3.5 3.5-3.5-3.5z" fill="#000080"/><path d="M655.7 329.5l3.5 3.5-3.5 3.5-3.5-3.5z" fill="#000080"/><path d="M656.4 327.7l3.5 3.5-3.5 3.5-3.5-3.5z" fill="#000080"/><path d="M657.1 326.0l3.5 3.5-3.5 3.5-3.5-3.5z" fill="#000080"/><path d="M657.8 324.3l3.5 3.5-3.5 3.5-3.5-3.5z" fill="#000080"/><path d="M658.5 322.6l3.5 3.5-3.5 3.5-3.5-3.5z" fill="#000080"/><path d="M659.1 321.0l3.5 3.5-3.5 3.5-3.5-3.5z" fill="#000080"/><path d="M659.8 319.3l3.5 3.5-3.5 3.5-3.5-3.5z" fill="#000080"/><path d="M660.5 317.8l3.5 3.5-3.5 3.5-3.5-3.5z" fill="#000080"/><path d="M661.2 316.2l3.5 3.5-3.5 3.5-3.5-3.5z" fill="#000080"/><path d="M661.9 314.7l3.5 3.5-3.5 3.5-3.5-3.5z" fill="#000080"/><path d="M662.6 313.2l3.5 3.5-3.5 3.5-3.5-3.5z" fill="#000080"/><path d="M663.2 311.8l3.5 3.5-3.5 3.5-3.5-3.5z" fill="#000080"/><path d="M663.9 310.3l3.5 3.5-3.5 3.5-3.5-3.5z" fill="#000080"/><path d="M664.6 308.9l3.5 3.5-3.5 3.5-3.5-3.5z" fill="#000080"/><path d="M665.3 307.6l3.5 3.5-3.5 3.5-3.5-3.5z" fill="#000080"/><path d="M666.0 306.2l3.5 3.5-3.5 3.5-3.5-3.5z" fill="#000080"/><path d="M666.7 304.9l3.5 3.5-3.5 3.5-3.5-3.5z" fill="#000080"/><path d="M667.4 303.6l3.5 3.5-3.5 3.5-3.5-3.5z" fill="#000080"/><path d="M668.0 302.3l3.5 3.5-3.5 3.5-3.5-3.5z" fill="#000080"/><path d="M668.7 301.1l3.5 3.5-3.5 3.5-3.5-3.5z" fill="#000080"/><path d="M669.4 299.8l3.5 3.5-3.5 3.5-3.5-3.5z" fill="#000080"/><path d="M670.1 298.6l3.5 3.5-3.5 3.5-3.5-3.5z" fill="#000080"/><path d="M670.8 297.5l3.5 3.5-3.5 3.5-3.5-3.5z" fill="#000080"/><path d="M671.5 296.3l3.5 3.5-3.5 3.5-3.5-3.5z" fill="#000080"/><path d="M672.1 295.2l3.5 3.5-3.5 3.5-3.5-3.5z" fill="#000080"/><path d="M672.8 294.1l3.5 3.5-3.5 3.5-3.5-3.5z" fill="#000080"/><path d="M673.5 293.0l3.5 3.5-3.5 3.5-3.5-3.5z" fill="#000080"/><path d="M674.2 291.9l3.5 3.5-3.5 3.5-3.5-3.5z" fill="#000080"/><rect x="611" y="540" width="6" height="6" fill="#FF00FF"/><rect x="625" y="458" width="6" height="6" fill="#FF00FF"/><rect x="638" y="398" width="6" height="6" fill="#FF00FF"/><rect x="652" y="342" width="6" height="6" fill="#FF00FF"/><rect x="666" y="308" width="6" height="6" fill="#FF00FF"/><rect x="679" y="289" width="6" height="6" fill="#FF00FF"/><rect x="693" y="259" width="6" height="6" fill="#FF00FF"/><rect x="707" y="251" width="6" height="6" fill="#FF00FF"/><rect x="720" y="255" width="6" height="6" fill="#FF00FF"/><rect x="734" y="242" width="6" height="6" fill="#FF00FF"/><rect x="748" y="221" width="6" height="6" fill="#FF00FF"/><rect x="761" y="217" width="6" height="6" fill="#FF00FF"/><rect x="775" y="217" width="6" height="6" fill="#FF00FF"/><rect x="789" y="212" width="6" height="6" fill="#FF00FF"/><rect x="803" y="221" width="6" height="6" fill="#FF00FF"/><rect x="816" y="225" width="6" height="6" fill="#FF00FF"/></svg><div style="position:absolute;left:203px;top:94px;width:96px;height:44px;background:#ACA899;box-sizing:border-box;border:1px solid #8C8A80;"></div>
<div style="position:absolute;left:205px;top:96px;width:92px;height:40px;background:#F4F2E8;"></div>
<div style="position:absolute;left:206px;top:97px;width:90px;height:17px;background:#ACA899;"></div>
<div style="position:absolute;left:208px;top:98px;width:53px;height:15px;overflow:hidden;font-size:11.5px;line-height:15px;font-weight:bold;color:#3C3C3C;white-space:nowrap;padding-top:1px">EuroValue</div>
<svg style="position:absolute;left:265px;top:102px" width="9" height="5" viewBox="0 0 9 5" shape-rendering="crispEdges"><path d="M0 0h9L4.5 5z" fill="#404040"/></svg>
<svg style="position:absolute;left:283px;top:101px" width="9" height="9" viewBox="0 0 9 9"><path d="M1 1l7 7M8 1l-7 7" stroke="#404040" stroke-width="1.3"/></svg>
<div style="position:absolute;left:207px;top:116px;width:88px;height:18px;background:#fff;"></div>
<div style="position:absolute;left:283px;top:117px;width:11px;height:16px;background:#ECE9D8;"></div>
<svg style="position:absolute;left:286px;top:124px" width="5" height="3" viewBox="0 0 5 3" shape-rendering="crispEdges"><path d="M0 0h5v1h-1v1h-1v1h-1v-1h-1v-1h-1z" fill="#000"/></svg>
<div style="position:absolute;left:208px;top:117px;font-size:11px;line-height:14px;white-space:nowrap;color:#000;">masquer</div>
<div style="position:absolute;left:587px;top:118px;width:320px;height:17px;background:;background-color:#F4F3EE;background-image:linear-gradient(45deg,#E8E6DC 25%,transparent 25%,transparent 75%,#E8E6DC 75%),linear-gradient(45deg,#E8E6DC 25%,transparent 25%,transparent 75%,#E8E6DC 75%);background-size:2px 2px;background-position:0 0,1px 1px;"></div>
<div style="position:absolute;left:587px;top:118px;width:18px;height:17px;background:#ECE9D8;box-sizing:border-box;border-top:1px solid #fff;border-left:1px solid #fff;border-right:1px solid #000;border-bottom:1px solid #000;box-shadow:inset -1px -1px 0 #716F64;"></div>
<svg style="position:absolute;left:593px;top:122px" width="4.5" height="9.0" viewBox="0 0 4.5 9.0"><path d="M4.5 0V9.0L0 4.5z" fill="#000"/></svg>
<div style="position:absolute;left:605px;top:118px;width:10px;height:17px;background:#ECE9D8;box-sizing:border-box;border-top:1px solid #fff;border-left:1px solid #fff;border-right:1px solid #000;border-bottom:1px solid #000;box-shadow:inset -1px -1px 0 #716F64;"></div>
<div style="position:absolute;left:889px;top:118px;width:18px;height:17px;background:#ECE9D8;box-sizing:border-box;border-top:1px solid #fff;border-left:1px solid #fff;border-right:1px solid #000;border-bottom:1px solid #000;box-shadow:inset -1px -1px 0 #716F64;"></div>
<svg style="position:absolute;left:896px;top:122px" width="4.5" height="9.0" viewBox="0 0 4.5 9.0"><path d="M0 0V9.0L4.5 4.5z" fill="#000"/></svg>
<div style="position:absolute;left:1006px;top:84px;width:18px;height:620px;background:#ECE9D8;"></div>
<div style="position:absolute;left:1022px;top:84px;width:1px;height:636px;background:#ACA899;"></div>
<div style="position:absolute;left:1006px;top:105px;width:16px;height:584px;background:;background-color:#F4F3EE;background-image:linear-gradient(45deg,#E8E6DC 25%,transparent 25%,transparent 75%,#E8E6DC 75%),linear-gradient(45deg,#E8E6DC 25%,transparent 25%,transparent 75%,#E8E6DC 75%);background-size:2px 2px;background-position:0 0,1px 1px;"></div>
<div style="position:absolute;left:1006px;top:88px;width:16px;height:1px;background:#000;"></div>
<div style="position:absolute;left:1006px;top:90px;width:16px;height:16px;background:#ECE9D8;box-sizing:border-box;border-top:1px solid #fff;border-left:1px solid #fff;border-right:1px solid #716F64;border-bottom:1px solid #716F64;"></div>
<svg style="position:absolute;left:1010px;top:95px" width="8" height="4" viewBox="0 0 8 4"><path d="M0 4H8L4 0z" fill="#000"/></svg>
<div style="position:absolute;left:1006px;top:107px;width:16px;height:202px;background:#ECE9D8;box-sizing:border-box;border-top:1px solid #fff;border-left:1px solid #fff;border-right:1px solid #716F64;border-bottom:1px solid #716F64;"></div>
<div style="position:absolute;left:1006px;top:689px;width:16px;height:16px;background:#ECE9D8;box-sizing:border-box;border-top:1px solid #fff;border-left:1px solid #fff;border-right:1px solid #716F64;border-bottom:1px solid #716F64;"></div>
<svg style="position:absolute;left:1010px;top:695px" width="8" height="4" viewBox="0 0 8 4"><path d="M0 0H8L4 4z" fill="#000"/></svg>
<div style="position:absolute;left:0px;top:704px;width:1024px;height:16px;background:#ECE9D8;"></div>
<div style="position:absolute;left:1px;top:704px;width:1px;height:16px;background:#716F64;"></div>
<div style="position:absolute;left:2px;top:704px;width:1004px;height:1px;background:#D8D4C4;"></div>
<svg style="position:absolute;left:5px;top:709px" width="7" height="8" viewBox="0 0 7 8" shape-rendering="crispEdges"><rect x="0" y="0" width="2" height="1" fill="#000"/><rect x="6" y="0" width="1" height="1" fill="#000"/><rect x="0" y="1" width="2" height="1" fill="#000"/><rect x="5" y="1" width="2" height="1" fill="#000"/><rect x="0" y="2" width="2" height="1" fill="#000"/><rect x="4" y="2" width="3" height="1" fill="#000"/><rect x="0" y="3" width="2" height="1" fill="#000"/><rect x="3" y="3" width="4" height="1" fill="#000"/><rect x="0" y="4" width="2" height="1" fill="#000"/><rect x="3" y="4" width="4" height="1" fill="#000"/><rect x="0" y="5" width="2" height="1" fill="#000"/><rect x="4" y="5" width="3" height="1" fill="#000"/><rect x="0" y="6" width="2" height="1" fill="#000"/><rect x="5" y="6" width="2" height="1" fill="#000"/><rect x="0" y="7" width="2" height="1" fill="#000"/><rect x="6" y="7" width="1" height="1" fill="#000"/></svg>
<svg style="position:absolute;left:23px;top:709px" width="4" height="8" viewBox="0 0 4 8" shape-rendering="crispEdges"><rect x="3" y="0" width="1" height="1" fill="#000"/><rect x="2" y="1" width="2" height="1" fill="#000"/><rect x="1" y="2" width="3" height="1" fill="#000"/><rect x="0" y="3" width="4" height="1" fill="#000"/><rect x="0" y="4" width="4" height="1" fill="#000"/><rect x="1" y="5" width="3" height="1" fill="#000"/><rect x="2" y="6" width="2" height="1" fill="#000"/><rect x="3" y="7" width="1" height="1" fill="#000"/></svg>
<svg style="position:absolute;left:40px;top:709px" width="4" height="8" viewBox="0 0 4 8" shape-rendering="crispEdges"><rect x="0" y="0" width="1" height="1" fill="#000"/><rect x="0" y="1" width="2" height="1" fill="#000"/><rect x="0" y="2" width="3" height="1" fill="#000"/><rect x="0" y="3" width="4" height="1" fill="#000"/><rect x="0" y="4" width="4" height="1" fill="#000"/><rect x="0" y="5" width="3" height="1" fill="#000"/><rect x="0" y="6" width="2" height="1" fill="#000"/><rect x="0" y="7" width="1" height="1" fill="#000"/></svg>
<svg style="position:absolute;left:55px;top:709px" width="7" height="8" viewBox="0 0 7 8" shape-rendering="crispEdges"><rect x="0" y="0" width="1" height="1" fill="#000"/><rect x="5" y="0" width="2" height="1" fill="#000"/><rect x="0" y="1" width="2" height="1" fill="#000"/><rect x="5" y="1" width="2" height="1" fill="#000"/><rect x="0" y="2" width="3" height="1" fill="#000"/><rect x="5" y="2" width="2" height="1" fill="#000"/><rect x="0" y="3" width="4" height="1" fill="#000"/><rect x="5" y="3" width="2" height="1" fill="#000"/><rect x="0" y="4" width="4" height="1" fill="#000"/><rect x="5" y="4" width="2" height="1" fill="#000"/><rect x="0" y="5" width="3" height="1" fill="#000"/><rect x="5" y="5" width="2" height="1" fill="#000"/><rect x="0" y="6" width="2" height="1" fill="#000"/><rect x="5" y="6" width="2" height="1" fill="#000"/><rect x="0" y="7" width="1" height="1" fill="#000"/><rect x="5" y="7" width="2" height="1" fill="#000"/></svg>
<div style="position:absolute;left:65px;top:705px;width:1px;height:15px;background:#ACA899;"></div>
<svg style="position:absolute;left:0;top:0" width="1024" height="768" viewBox="0 0 1024 768"><path d="M150 704L155 719H195L201 704" fill="#ECE9D8" stroke="#000" stroke-width="1"/><path d="M67 704L73 719H111L116 704" fill="#ECE9D8" stroke="#000" stroke-width="1"/><path d="M109 704L114 719H149L154 704z" fill="#fff"/><path d="M109 704L114 719.5H149L154 704" fill="none" stroke="#000" stroke-width="1"/></svg>
<div style="position:absolute;left:77px;top:706px;font-size:11.5px;line-height:14.5px;white-space:nowrap;color:#000;">eleve</div>
<div style="position:absolute;left:119px;top:705px;font-size:12.5px;line-height:15.5px;white-space:nowrap;color:#000;font-weight:bold;">prof</div>
<div style="position:absolute;left:159px;top:706px;font-size:11.5px;line-height:14.5px;white-space:nowrap;color:#000;">Feuil3</div>
<div style="position:absolute;left:586px;top:704px;width:3px;height:16px;background:#ECE9D8;"></div>
<div style="position:absolute;left:587px;top:704px;width:1px;height:16px;background:#000;"></div>
<div style="position:absolute;left:589px;top:704px;width:413px;height:16px;background:;background-color:#F4F3EE;background-image:linear-gradient(45deg,#E8E6DC 25%,transparent 25%,transparent 75%,#E8E6DC 75%),linear-gradient(45deg,#E8E6DC 25%,transparent 25%,transparent 75%,#E8E6DC 75%);background-size:2px 2px;background-position:0 0,1px 1px;"></div>
<div style="position:absolute;left:589px;top:704px;width:16px;height:16px;background:#ECE9D8;box-sizing:border-box;border-top:1px solid #fff;border-left:1px solid #fff;border-right:1px solid #716F64;border-bottom:1px solid #716F64;"></div>
<svg style="position:absolute;left:595px;top:708px" width="4" height="8" viewBox="0 0 4 8"><path d="M4 0V8L0 4z" fill="#000"/></svg>
<div style="position:absolute;left:605px;top:704px;width:347px;height:16px;background:#ECE9D8;box-sizing:border-box;border-top:1px solid #fff;border-left:1px solid #fff;border-right:1px solid #716F64;border-bottom:1px solid #716F64;"></div>
<div style="position:absolute;left:985px;top:704px;width:16px;height:16px;background:#ECE9D8;box-sizing:border-box;border-top:1px solid #fff;border-left:1px solid #fff;border-right:1px solid #716F64;border-bottom:1px solid #716F64;"></div>
<svg style="position:absolute;left:991px;top:708px" width="4" height="8" viewBox="0 0 4 8"><path d="M0 0V8L4 4z" fill="#000"/></svg>
<div style="position:absolute;left:1001px;top:704px;width:5px;height:16px;background:#ECE9D8;"></div>
<div style="position:absolute;left:1005px;top:704px;width:1px;height:16px;background:#000;"></div>
<div style="position:absolute;left:1006px;top:704px;width:18px;height:16px;background:#ECE9D8;"></div>
<div style="position:absolute;left:0px;top:720px;width:1024px;height:2px;background:#FBFAF5;"></div>
<div style="position:absolute;left:0px;top:722px;width:1024px;height:16px;background:#ECE9D8;"></div>
<div style="position:absolute;left:2px;top:723px;width:641px;height:16px;background:#F2F0E6;border-radius:3px 3px 0 0;"></div>
<div style="position:absolute;left:2px;top:728px;width:3px;height:1px;background:#C1BEB3;"></div><div style="position:absolute;left:2px;top:730px;width:3px;height:1px;background:#C1BEB3;"></div><div style="position:absolute;left:2px;top:732px;width:3px;height:1px;background:#C1BEB3;"></div><div style="position:absolute;left:2px;top:734px;width:3px;height:1px;background:#C1BEB3;"></div><div style="position:absolute;left:2px;top:736px;width:3px;height:1px;background:#C1BEB3;"></div>
<div style="position:absolute;left:10px;top:729px;font-size:11px;line-height:14px;white-space:nowrap;color:#000;">Dessin</div>
<svg style="position:absolute;left:45px;top:735px" width="5" height="3" viewBox="0 0 5 3" shape-rendering="crispEdges"><path d="M0 0h5v1h-1v1h-1v1h-1v-1h-1v-1h-1z" fill="#000"/></svg>
<svg style="position:absolute;left:61px;top:728px" width="9" height="12" viewBox="0 0 9 12" shape-rendering="crispEdges"><path d="M0.5 0.5V11l3-3 2 4 2-1-2-4h4z" fill="#fff" stroke="#000"/></svg>
<div style="position:absolute;left:80px;top:725px;width:1px;height:13px;background:#ACA899;"></div>
<div style="position:absolute;left:86px;top:729px;font-size:11px;line-height:14px;white-space:nowrap;color:#000;">Formes automatiques</div>
<svg style="position:absolute;left:195px;top:735px" width="5" height="3" viewBox="0 0 5 3" shape-rendering="crispEdges"><path d="M0 0h5v1h-1v1h-1v1h-1v-1h-1v-1h-1z" fill="#000"/></svg>
<svg style="position:absolute;left:206px;top:730px" width="14" height="12" viewBox="0 0 14 12"><path d="M1 1l11 10" stroke="#303030"/></svg>
<svg style="position:absolute;left:229px;top:730px" width="14" height="12" viewBox="0 0 14 12"><path d="M1 1l10 9" stroke="#303030"/><path d="M12 11l-5-1 3-3z" fill="#303030"/></svg>
<svg style="position:absolute;left:252px;top:729px" width="14" height="13" viewBox="0 0 14 13" shape-rendering="crispEdges"><rect x="0.5" y="0.5" width="13" height="13" fill="none" stroke="#303030"/></svg>
<svg style="position:absolute;left:273px;top:729px" width="16" height="13" viewBox="0 0 16 13"><ellipse cx="8" cy="7" rx="7" ry="6" fill="none" stroke="#303030"/></svg>
<svg style="position:absolute;left:297px;top:728px" width="16" height="14" viewBox="0 0 16 14" shape-rendering="crispEdges"><rect x="0.5" y="0.5" width="15" height="13" fill="#fff" stroke="#303030"/><path d="M3 4h4M9 4h4M3 7h10M3 10h10" stroke="#303030"/></svg>
<svg style="position:absolute;left:320px;top:728px" width="16" height="14" viewBox="0 0 16 14"><path d="M1 14L13 2V14z" fill="#3838B0"/></svg>
<svg style="position:absolute;left:343px;top:728px" width="16" height="14" viewBox="0 0 16 14"><circle cx="4" cy="8" r="2" fill="none" stroke="#3838B0"/><circle cx="12" cy="6" r="2" fill="#E03030"/><path d="M5 5l3-2 3 1" fill="none" stroke="#303030"/></svg>
<svg style="position:absolute;left:366px;top:728px" width="16" height="14" viewBox="0 0 16 14" shape-rendering="crispEdges"><rect x="0.5" y="0.5" width="15" height="14" fill="#fff" stroke="#303030" stroke-dasharray="1 1"/><rect x="5" y="3" width="6" height="8" fill="#C04040"/></svg>
<svg style="position:absolute;left:389px;top:728px" width="16" height="14" viewBox="0 0 16 14" shape-rendering="crispEdges"><rect x="0.5" y="0.5" width="15" height="14" fill="#FFF080" stroke="#303030"/><circle cx="10" cy="5" r="2" fill="#A08000"/></svg>
<div style="position:absolute;left:406px;top:729px;width:1px;height:14px;background:#ACA899;"></div>
<svg style="position:absolute;left:420px;top:727px" width="16" height="15" viewBox="0 0 16 15"><path d="M3 8l6-5 5 5-6 5z" fill="#E8E8E8" stroke="#303030"/></svg>
<svg style="position:absolute;left:438px;top:737px" width="5" height="3" viewBox="0 0 5 3" shape-rendering="crispEdges"><path d="M0 0h5v1h-1v1h-1v1h-1v-1h-1v-1h-1z" fill="#000"/></svg>
<svg style="position:absolute;left:453px;top:727px" width="16" height="15" viewBox="0 0 16 15"><path d="M2 13l10-10" stroke="#3838B0" stroke-width="2"/><path d="M11 2l3-1" stroke="#E0C000" stroke-width="2"/></svg>
<svg style="position:absolute;left:472px;top:737px" width="5" height="3" viewBox="0 0 5 3" shape-rendering="crispEdges"><path d="M0 0h5v1h-1v1h-1v1h-1v-1h-1v-1h-1z" fill="#000"/></svg>
<div style="position:absolute;left:487px;top:727px;font-size:15px;line-height:18px;white-space:nowrap;color:#3838B0;font-family:&quot;Liberation Serif&quot;,serif;">A</div>
<svg style="position:absolute;left:508px;top:737px" width="5" height="3" viewBox="0 0 5 3" shape-rendering="crispEdges"><path d="M0 0h5v1h-1v1h-1v1h-1v-1h-1v-1h-1z" fill="#000"/></svg>
<svg style="position:absolute;left:520px;top:730px" width="16" height="12" viewBox="0 0 16 12" shape-rendering="crispEdges"><rect x="0" y="0" width="16" height="1" fill="#303030"/><rect x="0" y="3" width="16" height="2" fill="#303030"/><rect x="0" y="7" width="16" height="3" fill="#303030"/></svg>
<svg style="position:absolute;left:543px;top:730px" width="16" height="12" viewBox="0 0 16 12" shape-rendering="crispEdges"><path d="M0 1h16M0 4h16M0 7h16" stroke="#303030" stroke-dasharray="2 1"/></svg>
<svg style="position:absolute;left:566px;top:728px" width="16" height="14" viewBox="0 0 16 14"><path d="M2 4h12M11 1l3 3-3 3M14 10H2M5 7l-3 3 3 3" fill="none" stroke="#303030"/></svg>
<svg style="position:absolute;left:589px;top:728px" width="14" height="14" viewBox="0 0 14 14" shape-rendering="crispEdges"><rect x="0.5" y="0.5" width="12" height="14" fill="#40A0A0" stroke="#303030"/></svg>
<svg style="position:absolute;left:610px;top:727px" width="16" height="15" viewBox="0 0 16 15" shape-rendering="crispEdges"><path d="M0.5 4.5h11v11H0.5z" fill="#E0E0E0" stroke="#303030"/><path d="M0.5 4.5l4-4h11v11l-4 4" fill="#A0D0D0" stroke="#303030"/></svg>
<div style="position:absolute;left:0px;top:738px;width:1024px;height:30px;background:linear-gradient(#3168D5 0%,#4993E6 8%,#2157D7 20%,#2663E0 85%,#1941A5 100%);"></div>
<div style="position:absolute;left:0px;top:738px;width:1024px;height:1px;background:#0C59B9;"></div>
<div style="position:absolute;left:0;top:738px;width:134px;height:30px;border-radius:0 11px 11px 0;width:136px;background:linear-gradient(#5E9E5E 0%,#48964A 12%,#3A923A 30%,#3E9E3E 60%,#36923A 85%,#2A742A 100%);"></div>
<svg style="position:absolute;left:10px;top:745px" width="20" height="18" viewBox="0 0 20 18"><path d="M2 3c3-2 5-1 8 0l-1 6c-3-1-5-2-8 0z" fill="#F06020"/><path d="M11 3c3 1 5 1 8-1l-1 6c-3 2-5 2-8 1z" fill="#60C030"/><path d="M1 10c3-2 5-1 8 0l-1 6c-3-1-5-2-8 0z" fill="#3080F0"/><path d="M10 10c3 1 5 1 8-1l-1 6c-3 2-5 2-8 1z" fill="#F8D030"/></svg>
<div style="position:absolute;left:35px;top:743px;font-size:17.5px;line-height:20.5px;white-space:nowrap;color:#fff;font-weight:bold;font-style:italic;text-shadow:1px 1px 1px #1A4A1A;">d&eacute;marrer</div>
<svg style="position:absolute;left:148px;top:745px" width="16" height="16" viewBox="0 0 16 16"><rect x="1" y="1" width="14" height="14" rx="3" fill="#2A80E0" stroke="#fff"/><path d="M5 4h6v8H5z" fill="#fff"/></svg>
<svg style="position:absolute;left:171px;top:744px" width="18" height="18" viewBox="0 0 18 18"><path d="M9 3.5c-3.3 0-5.5 2.4-5.5 5.6 0 3.3 2.3 5.4 5.6 5.4 2.3 0 3.9-1 4.8-2.6h-3.1c-.4.5-1 .8-1.8.8-1.3 0-2.3-.9-2.4-2.3h7.5c.1-.4.1-.8.1-1.2C14.2 5.9 12.2 3.5 9 3.5zM6.7 8c.2-1.2 1.1-2 2.3-2s2.1.8 2.2 2z" fill="#3AA0F0" stroke="#0A50B0" stroke-width="0.6"/><path d="M2 13c-2-3 3-9 9-11 4-1.3 6 .3 4.5 3" fill="none" stroke="#F8C830" stroke-width="1.2"/></svg>
<svg style="position:absolute;left:195px;top:745px" width="16" height="16" viewBox="0 0 16 16" shape-rendering="crispEdges"><rect x="0" y="0" width="16" height="16" fill="#7A7A2A"/><circle cx="8" cy="8" r="5.5" fill="none" stroke="#fff" stroke-width="1.5"/><path d="M8 4v4h3" stroke="#fff" fill="none"/></svg>
<div style="position:absolute;left:241px;top:740px;font-size:12px;line-height:15px;white-space:nowrap;color:#D0E0FF;">&raquo;</div>
<div style="position:absolute;left:256px;top:742px;width:154px;height:23px;border-radius:3px;background:linear-gradient(#4E8DEF 0%,#3C81F3 15%,#3A7DED 85%,#2C6ADB 100%);box-sizing:border-box;border:1px solid #5A9AF5;"></div><svg style="position:absolute;left:265px;top:745px" width="16" height="16" viewBox="0 0 16 16" shape-rendering="crispEdges"><rect x="0" y="0" width="16" height="16" fill="#fff"/><rect x="2" y="6" width="12" height="3" fill="#20A0A0"/><path d="M2 2l4 3M9 2l4 2" stroke="#C03030"/><rect x="6" y="11" width="7" height="4" fill="#3030C0"/></svg><div style="position:absolute;left:285px;top:747px;font-size:11px;line-height:14px;white-space:nowrap;color:#fff;">avimeca2</div>
<div style="position:absolute;left:412px;top:742px;width:154px;height:23px;border-radius:3px;background:linear-gradient(#4E8DEF 0%,#3C81F3 15%,#3A7DED 85%,#2C6ADB 100%);box-sizing:border-box;border:1px solid #5A9AF5;"></div><svg style="position:absolute;left:421px;top:746px" width="16" height="14" viewBox="0 0 16 14"><path d="M1 3h5l1 2h8v8H1z" fill="#F4D060" stroke="#B08820"/></svg><div style="position:absolute;left:441px;top:747px;font-size:11px;line-height:14px;white-space:nowrap;color:#fff;">TP Phys</div>
<div style="position:absolute;left:568px;top:742px;width:154px;height:23px;border-radius:3px;background:linear-gradient(#4E8DEF 0%,#3C81F3 15%,#3A7DED 85%,#2C6ADB 100%);box-sizing:border-box;border:1px solid #5A9AF5;"></div><svg style="position:absolute;left:577px;top:745px" width="16" height="16" viewBox="0 0 16 16" shape-rendering="crispEdges"><rect x="2" y="1" width="13" height="14" fill="#fff" stroke="#2040A0"/><rect x="0" y="3" width="10" height="9" fill="#2050C0"/><text x="5" y="11" text-anchor="middle" font-size="8" font-weight="bold" fill="#fff" font-family="Liberation Sans">W</text></svg><div style="position:absolute;left:597px;top:747px;font-size:11px;line-height:14px;white-space:nowrap;color:#fff;">TP chute dans un flui...</div>
<div style="position:absolute;left:727px;top:742px;width:154px;height:23px;border-radius:3px;background:linear-gradient(#1E4FB8,#1C49AE);box-sizing:border-box;border:1px solid #1A3E8C;"></div><svg style="position:absolute;left:736px;top:745px" width="16" height="16" viewBox="0 0 16 16" shape-rendering="crispEdges"><rect x="0" y="0" width="16" height="16" fill="#1A7A2A"/><rect x="2" y="2" width="12" height="12" fill="#fff"/><path d="M4 4l8 8M12 4l-8 8" stroke="#1A7A2A" stroke-width="2"/></svg><div style="position:absolute;left:756px;top:747px;font-size:11px;line-height:14px;white-space:nowrap;color:#fff;">Microsoft Excel - chu...</div>
<div style="position:absolute;left:894px;top:738px;width:130px;height:30px;background:linear-gradient(#1A8FE6 0%,#24A4F2 8%,#1592E8 30%,#1290E6 80%,#0C7FD6 100%);border-left:1px solid #0A3FB0;"></div>
<svg style="position:absolute;left:886px;top:744px" width="19" height="19" viewBox="0 0 19 19"><circle cx="9.5" cy="9.5" r="8.5" fill="#3C8CEB" stroke="#fff" stroke-width="1.3"/><path d="M11 5.5l-4 4 4 4" stroke="#fff" stroke-width="2.2" fill="none"/></svg>
<svg style="position:absolute;left:904px;top:745px" width="16" height="16" viewBox="0 0 16 16"><rect x="6" y="1" width="9" height="8" fill="#7A88B0" stroke="#303050"/><rect x="1" y="6" width="9" height="8" fill="#98A4C8" stroke="#303050"/><rect x="3" y="14" width="6" height="1" fill="#303050"/></svg>
<svg style="position:absolute;left:923px;top:745px" width="16" height="16" viewBox="0 0 16 16"><path d="M1 1h3.5v6l5-6h4.5l-6 7 6 7h-4.5l-5-6v6H1z" fill="#E81818"/><path d="M8 8l6 6" stroke="#000" stroke-width="2.5"/></svg>
<svg style="position:absolute;left:941px;top:745px" width="16" height="16" viewBox="0 0 16 16"><circle cx="7" cy="7" r="5.5" fill="#B0B0B0" stroke="#505050"/><circle cx="7" cy="7" r="2.5" fill="#606060"/><path d="M9 14l6-3" stroke="#A0C0F0"/></svg>
<svg style="position:absolute;left:960px;top:745px" width="16" height="16" viewBox="0 0 16 16" shape-rendering="crispEdges"><rect x="0" y="0" width="7" height="7" fill="#90C848"/><rect x="9" y="0" width="7" height="7" fill="#70B838"/><rect x="0" y="9" width="7" height="7" fill="#70B838"/><rect x="9" y="9" width="7" height="7" fill="#A81888"/></svg>
<div style="position:absolute;left:983px;top:748px;font-size:11px;line-height:14px;white-space:nowrap;color:#fff;">16:53</div>
</body></html>
